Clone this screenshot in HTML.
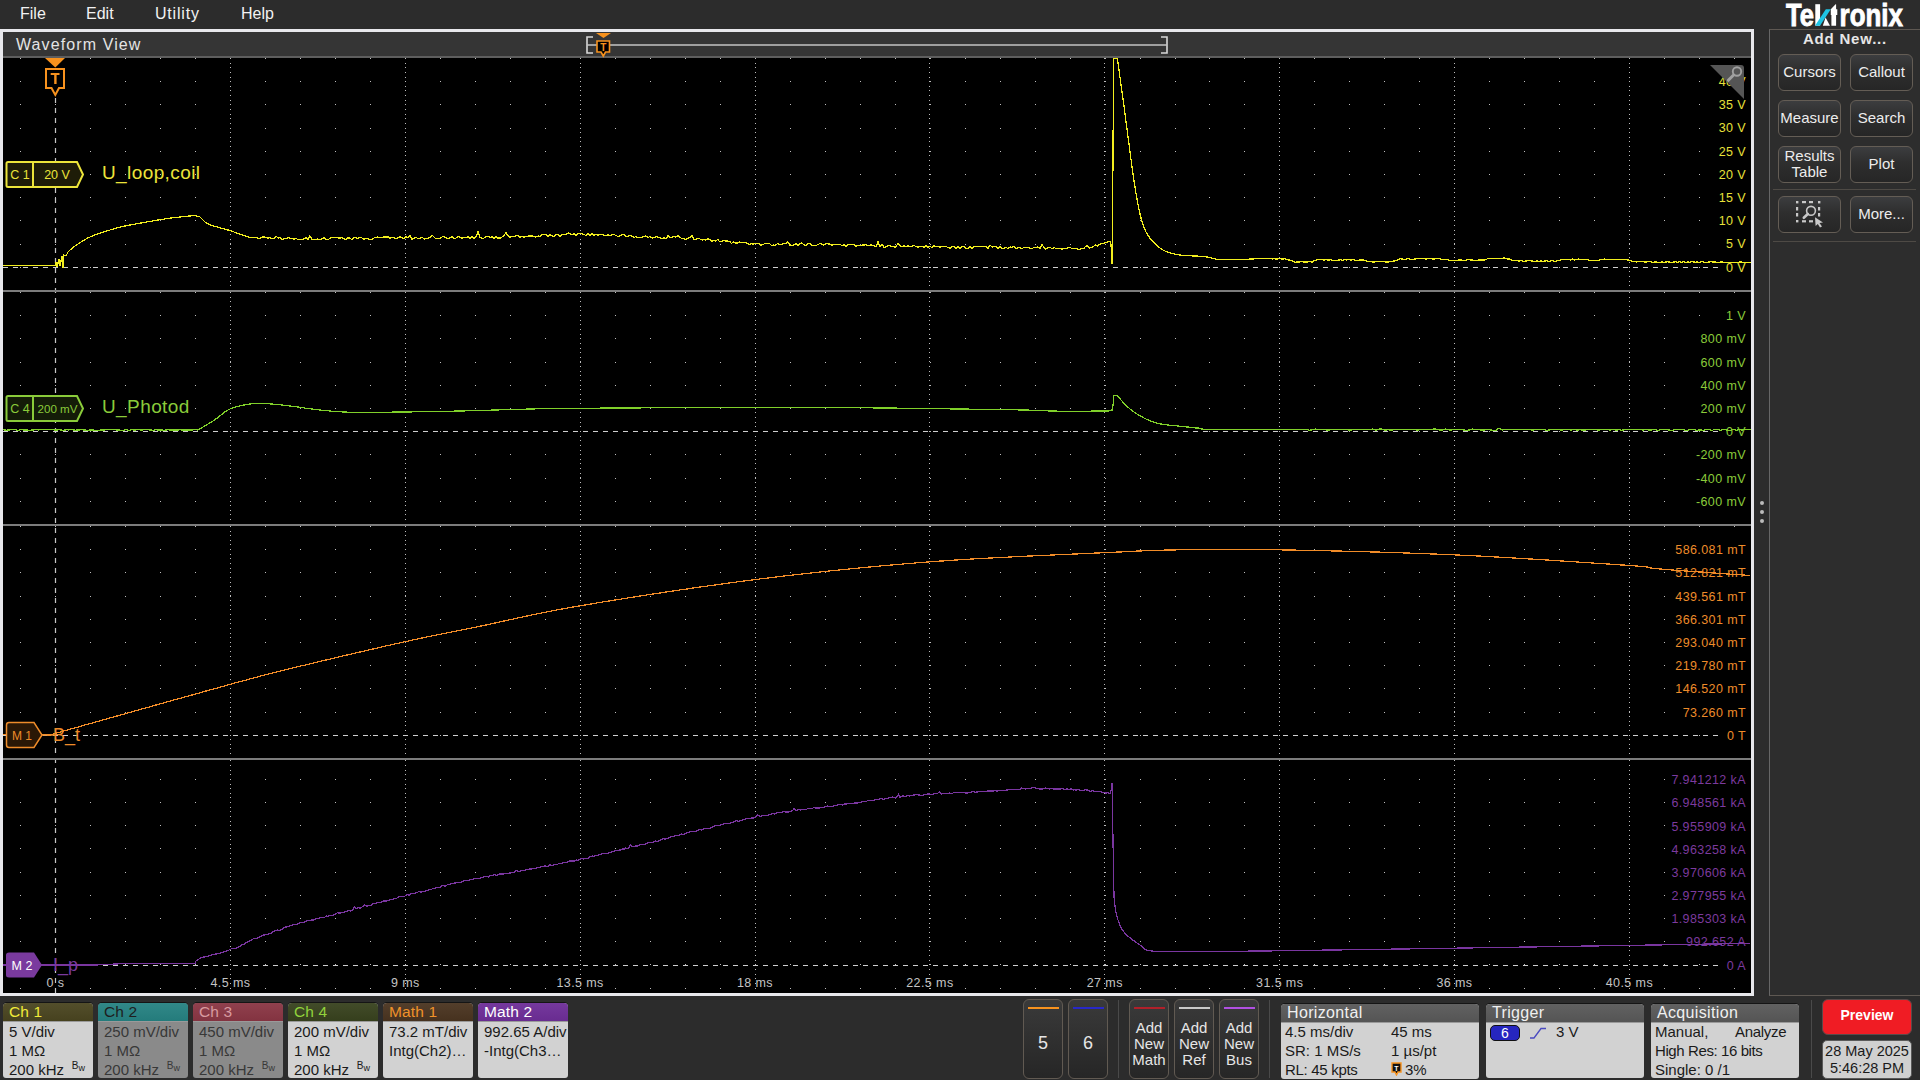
<!DOCTYPE html>
<html><head><meta charset="utf-8"><style>
*{margin:0;padding:0;box-sizing:border-box}
body{width:1920px;height:1080px;background:#2c2c2c;position:relative;overflow:hidden;font-family:"Liberation Sans",sans-serif;}
.abs{position:absolute}
.menu{position:absolute;top:5px;font-size:16px;color:#f2f2f2;line-height:18px}
.btn{position:absolute;border:1px solid #645d55;border-radius:6px;background:linear-gradient(#3c3d3f 0%,#2e2e2e 45%,#262626 100%);color:#ececec;display:flex;align-items:center;justify-content:center;text-align:center;line-height:16px;padding-bottom:2px}
.badge{position:absolute;border-radius:4px 4px 3px 3px;overflow:hidden;color:#1a1a1a;box-shadow:0 -1px 0 #151515}
.bh{position:absolute;left:0;top:0;right:0;height:19px;font-size:15.5px;line-height:18px;letter-spacing:0.15px;background-image:linear-gradient(rgba(255,255,255,0.05),rgba(0,0,0,0.05));padding-left:6px;border-bottom:1px solid #9a9a9a}
.bl{position:absolute;left:6px;font-size:15px;line-height:19px;white-space:nowrap}
.bw{position:absolute;right:8px;top:58px;font-size:10px;line-height:10px}
.bw sub{font-size:9px;vertical-align:-2px}
.sq{position:absolute;border:1px solid #615a52;border-radius:6px;background:linear-gradient(#3a3a3a,#262626)}
</style></head><body>
<div class="menu" style="left:20px">File</div>
<div class="menu" style="left:86px">Edit</div>
<div class="menu" style="left:155px;letter-spacing:0.8px">Utility</div>
<div class="menu" style="left:241px">Help</div>
<!-- waveform view frame -->
<div class="abs" style="left:0;top:29px;width:1754px;height:967px;background:#e8e8ec"></div>
<div class="abs" style="left:3px;top:32px;width:1748px;height:24px;background:#353535"></div>
<div class="abs" style="left:3px;top:56px;width:1748px;height:2px;background:#5e5e5e"></div>
<div class="abs" style="left:16px;top:36px;font-size:16px;color:#e4e4e4;line-height:18px;letter-spacing:1.1px">Waveform View</div>
<svg class="abs" style="left:0;top:0" width="1920" height="60">
<path d="M593 37H587V53H593" fill="none" stroke="#d8d8d8" stroke-width="1.6"/>
<path d="M1161 37H1167V53H1161" fill="none" stroke="#d8d8d8" stroke-width="1.6"/>
<path d="M587 45H1167" stroke="#c4c4c4" stroke-width="1.5"/>
<path d="M596 33H611L603.5 38Z" fill="#f7921e"/>
<path d="M597 41H609.5V52H605.5L603.3 56L601 52H597Z" fill="#000" stroke="#f7921e" stroke-width="1.6"/>
<text x="603.3" y="50.5" font-family="Liberation Sans" font-weight="bold" font-size="10" fill="#f7921e" text-anchor="middle">T</text>
</svg>
<svg width="1920" height="1080" style="position:absolute;left:0;top:0">
<defs><clipPath id="gc"><rect x="3" y="58" width="1748" height="935"/></clipPath></defs>
<g clip-path="url(#gc)">
<rect x="3" y="58" width="1748" height="935" fill="#000"/>
<path fill="#bdbdbd" d="M20 58h1v1h-1zM55 58h1v1h-1zM90 58h1v1h-1zM125 58h1v1h-1zM160 58h1v1h-1zM195 58h1v1h-1zM230 58h1v1h-1zM265 58h1v1h-1zM300 58h1v1h-1zM335 58h1v1h-1zM370 58h1v1h-1zM405 58h1v1h-1zM440 58h1v1h-1zM475 58h1v1h-1zM510 58h1v1h-1zM545 58h1v1h-1zM580 58h1v1h-1zM615 58h1v1h-1zM650 58h1v1h-1zM685 58h1v1h-1zM720 58h1v1h-1zM755 58h1v1h-1zM790 58h1v1h-1zM825 58h1v1h-1zM860 58h1v1h-1zM895 58h1v1h-1zM930 58h1v1h-1zM965 58h1v1h-1zM1000 58h1v1h-1zM1035 58h1v1h-1zM1070 58h1v1h-1zM1105 58h1v1h-1zM1140 58h1v1h-1zM1175 58h1v1h-1zM1209 58h1v1h-1zM1244 58h1v1h-1zM1279 58h1v1h-1zM1314 58h1v1h-1zM1349 58h1v1h-1zM1384 58h1v1h-1zM1419 58h1v1h-1zM1454 58h1v1h-1zM1489 58h1v1h-1zM1524 58h1v1h-1zM1559 58h1v1h-1zM1594 58h1v1h-1zM1629 58h1v1h-1zM1664 58h1v1h-1zM1699 58h1v1h-1zM1734 58h1v1h-1zM20 81h1v1h-1zM55 81h1v1h-1zM90 81h1v1h-1zM125 81h1v1h-1zM160 81h1v1h-1zM195 81h1v1h-1zM230 81h1v1h-1zM265 81h1v1h-1zM300 81h1v1h-1zM335 81h1v1h-1zM370 81h1v1h-1zM405 81h1v1h-1zM440 81h1v1h-1zM475 81h1v1h-1zM510 81h1v1h-1zM545 81h1v1h-1zM580 81h1v1h-1zM615 81h1v1h-1zM650 81h1v1h-1zM685 81h1v1h-1zM720 81h1v1h-1zM755 81h1v1h-1zM790 81h1v1h-1zM825 81h1v1h-1zM860 81h1v1h-1zM895 81h1v1h-1zM930 81h1v1h-1zM965 81h1v1h-1zM1000 81h1v1h-1zM1035 81h1v1h-1zM1070 81h1v1h-1zM1105 81h1v1h-1zM1140 81h1v1h-1zM1175 81h1v1h-1zM1209 81h1v1h-1zM1244 81h1v1h-1zM1279 81h1v1h-1zM1314 81h1v1h-1zM1349 81h1v1h-1zM1384 81h1v1h-1zM1419 81h1v1h-1zM1454 81h1v1h-1zM1489 81h1v1h-1zM1524 81h1v1h-1zM1559 81h1v1h-1zM1594 81h1v1h-1zM1629 81h1v1h-1zM1664 81h1v1h-1zM1699 81h1v1h-1zM1734 81h1v1h-1zM20 104h1v1h-1zM55 104h1v1h-1zM90 104h1v1h-1zM125 104h1v1h-1zM160 104h1v1h-1zM195 104h1v1h-1zM230 104h1v1h-1zM265 104h1v1h-1zM300 104h1v1h-1zM335 104h1v1h-1zM370 104h1v1h-1zM405 104h1v1h-1zM440 104h1v1h-1zM475 104h1v1h-1zM510 104h1v1h-1zM545 104h1v1h-1zM580 104h1v1h-1zM615 104h1v1h-1zM650 104h1v1h-1zM685 104h1v1h-1zM720 104h1v1h-1zM755 104h1v1h-1zM790 104h1v1h-1zM825 104h1v1h-1zM860 104h1v1h-1zM895 104h1v1h-1zM930 104h1v1h-1zM965 104h1v1h-1zM1000 104h1v1h-1zM1035 104h1v1h-1zM1070 104h1v1h-1zM1105 104h1v1h-1zM1140 104h1v1h-1zM1175 104h1v1h-1zM1209 104h1v1h-1zM1244 104h1v1h-1zM1279 104h1v1h-1zM1314 104h1v1h-1zM1349 104h1v1h-1zM1384 104h1v1h-1zM1419 104h1v1h-1zM1454 104h1v1h-1zM1489 104h1v1h-1zM1524 104h1v1h-1zM1559 104h1v1h-1zM1594 104h1v1h-1zM1629 104h1v1h-1zM1664 104h1v1h-1zM1699 104h1v1h-1zM1734 104h1v1h-1zM20 128h1v1h-1zM55 128h1v1h-1zM90 128h1v1h-1zM125 128h1v1h-1zM160 128h1v1h-1zM195 128h1v1h-1zM230 128h1v1h-1zM265 128h1v1h-1zM300 128h1v1h-1zM335 128h1v1h-1zM370 128h1v1h-1zM405 128h1v1h-1zM440 128h1v1h-1zM475 128h1v1h-1zM510 128h1v1h-1zM545 128h1v1h-1zM580 128h1v1h-1zM615 128h1v1h-1zM650 128h1v1h-1zM685 128h1v1h-1zM720 128h1v1h-1zM755 128h1v1h-1zM790 128h1v1h-1zM825 128h1v1h-1zM860 128h1v1h-1zM895 128h1v1h-1zM930 128h1v1h-1zM965 128h1v1h-1zM1000 128h1v1h-1zM1035 128h1v1h-1zM1070 128h1v1h-1zM1105 128h1v1h-1zM1140 128h1v1h-1zM1175 128h1v1h-1zM1209 128h1v1h-1zM1244 128h1v1h-1zM1279 128h1v1h-1zM1314 128h1v1h-1zM1349 128h1v1h-1zM1384 128h1v1h-1zM1419 128h1v1h-1zM1454 128h1v1h-1zM1489 128h1v1h-1zM1524 128h1v1h-1zM1559 128h1v1h-1zM1594 128h1v1h-1zM1629 128h1v1h-1zM1664 128h1v1h-1zM1699 128h1v1h-1zM1734 128h1v1h-1zM20 151h1v1h-1zM55 151h1v1h-1zM90 151h1v1h-1zM125 151h1v1h-1zM160 151h1v1h-1zM195 151h1v1h-1zM230 151h1v1h-1zM265 151h1v1h-1zM300 151h1v1h-1zM335 151h1v1h-1zM370 151h1v1h-1zM405 151h1v1h-1zM440 151h1v1h-1zM475 151h1v1h-1zM510 151h1v1h-1zM545 151h1v1h-1zM580 151h1v1h-1zM615 151h1v1h-1zM650 151h1v1h-1zM685 151h1v1h-1zM720 151h1v1h-1zM755 151h1v1h-1zM790 151h1v1h-1zM825 151h1v1h-1zM860 151h1v1h-1zM895 151h1v1h-1zM930 151h1v1h-1zM965 151h1v1h-1zM1000 151h1v1h-1zM1035 151h1v1h-1zM1070 151h1v1h-1zM1105 151h1v1h-1zM1140 151h1v1h-1zM1175 151h1v1h-1zM1209 151h1v1h-1zM1244 151h1v1h-1zM1279 151h1v1h-1zM1314 151h1v1h-1zM1349 151h1v1h-1zM1384 151h1v1h-1zM1419 151h1v1h-1zM1454 151h1v1h-1zM1489 151h1v1h-1zM1524 151h1v1h-1zM1559 151h1v1h-1zM1594 151h1v1h-1zM1629 151h1v1h-1zM1664 151h1v1h-1zM1699 151h1v1h-1zM1734 151h1v1h-1zM20 174h1v1h-1zM55 174h1v1h-1zM90 174h1v1h-1zM125 174h1v1h-1zM160 174h1v1h-1zM195 174h1v1h-1zM230 174h1v1h-1zM265 174h1v1h-1zM300 174h1v1h-1zM335 174h1v1h-1zM370 174h1v1h-1zM405 174h1v1h-1zM440 174h1v1h-1zM475 174h1v1h-1zM510 174h1v1h-1zM545 174h1v1h-1zM580 174h1v1h-1zM615 174h1v1h-1zM650 174h1v1h-1zM685 174h1v1h-1zM720 174h1v1h-1zM755 174h1v1h-1zM790 174h1v1h-1zM825 174h1v1h-1zM860 174h1v1h-1zM895 174h1v1h-1zM930 174h1v1h-1zM965 174h1v1h-1zM1000 174h1v1h-1zM1035 174h1v1h-1zM1070 174h1v1h-1zM1105 174h1v1h-1zM1140 174h1v1h-1zM1175 174h1v1h-1zM1209 174h1v1h-1zM1244 174h1v1h-1zM1279 174h1v1h-1zM1314 174h1v1h-1zM1349 174h1v1h-1zM1384 174h1v1h-1zM1419 174h1v1h-1zM1454 174h1v1h-1zM1489 174h1v1h-1zM1524 174h1v1h-1zM1559 174h1v1h-1zM1594 174h1v1h-1zM1629 174h1v1h-1zM1664 174h1v1h-1zM1699 174h1v1h-1zM1734 174h1v1h-1zM20 197h1v1h-1zM55 197h1v1h-1zM90 197h1v1h-1zM125 197h1v1h-1zM160 197h1v1h-1zM195 197h1v1h-1zM230 197h1v1h-1zM265 197h1v1h-1zM300 197h1v1h-1zM335 197h1v1h-1zM370 197h1v1h-1zM405 197h1v1h-1zM440 197h1v1h-1zM475 197h1v1h-1zM510 197h1v1h-1zM545 197h1v1h-1zM580 197h1v1h-1zM615 197h1v1h-1zM650 197h1v1h-1zM685 197h1v1h-1zM720 197h1v1h-1zM755 197h1v1h-1zM790 197h1v1h-1zM825 197h1v1h-1zM860 197h1v1h-1zM895 197h1v1h-1zM930 197h1v1h-1zM965 197h1v1h-1zM1000 197h1v1h-1zM1035 197h1v1h-1zM1070 197h1v1h-1zM1105 197h1v1h-1zM1140 197h1v1h-1zM1175 197h1v1h-1zM1209 197h1v1h-1zM1244 197h1v1h-1zM1279 197h1v1h-1zM1314 197h1v1h-1zM1349 197h1v1h-1zM1384 197h1v1h-1zM1419 197h1v1h-1zM1454 197h1v1h-1zM1489 197h1v1h-1zM1524 197h1v1h-1zM1559 197h1v1h-1zM1594 197h1v1h-1zM1629 197h1v1h-1zM1664 197h1v1h-1zM1699 197h1v1h-1zM1734 197h1v1h-1zM20 220h1v1h-1zM55 220h1v1h-1zM90 220h1v1h-1zM125 220h1v1h-1zM160 220h1v1h-1zM195 220h1v1h-1zM230 220h1v1h-1zM265 220h1v1h-1zM300 220h1v1h-1zM335 220h1v1h-1zM370 220h1v1h-1zM405 220h1v1h-1zM440 220h1v1h-1zM475 220h1v1h-1zM510 220h1v1h-1zM545 220h1v1h-1zM580 220h1v1h-1zM615 220h1v1h-1zM650 220h1v1h-1zM685 220h1v1h-1zM720 220h1v1h-1zM755 220h1v1h-1zM790 220h1v1h-1zM825 220h1v1h-1zM860 220h1v1h-1zM895 220h1v1h-1zM930 220h1v1h-1zM965 220h1v1h-1zM1000 220h1v1h-1zM1035 220h1v1h-1zM1070 220h1v1h-1zM1105 220h1v1h-1zM1140 220h1v1h-1zM1175 220h1v1h-1zM1209 220h1v1h-1zM1244 220h1v1h-1zM1279 220h1v1h-1zM1314 220h1v1h-1zM1349 220h1v1h-1zM1384 220h1v1h-1zM1419 220h1v1h-1zM1454 220h1v1h-1zM1489 220h1v1h-1zM1524 220h1v1h-1zM1559 220h1v1h-1zM1594 220h1v1h-1zM1629 220h1v1h-1zM1664 220h1v1h-1zM1699 220h1v1h-1zM1734 220h1v1h-1zM20 244h1v1h-1zM55 244h1v1h-1zM90 244h1v1h-1zM125 244h1v1h-1zM160 244h1v1h-1zM195 244h1v1h-1zM230 244h1v1h-1zM265 244h1v1h-1zM300 244h1v1h-1zM335 244h1v1h-1zM370 244h1v1h-1zM405 244h1v1h-1zM440 244h1v1h-1zM475 244h1v1h-1zM510 244h1v1h-1zM545 244h1v1h-1zM580 244h1v1h-1zM615 244h1v1h-1zM650 244h1v1h-1zM685 244h1v1h-1zM720 244h1v1h-1zM755 244h1v1h-1zM790 244h1v1h-1zM825 244h1v1h-1zM860 244h1v1h-1zM895 244h1v1h-1zM930 244h1v1h-1zM965 244h1v1h-1zM1000 244h1v1h-1zM1035 244h1v1h-1zM1070 244h1v1h-1zM1105 244h1v1h-1zM1140 244h1v1h-1zM1175 244h1v1h-1zM1209 244h1v1h-1zM1244 244h1v1h-1zM1279 244h1v1h-1zM1314 244h1v1h-1zM1349 244h1v1h-1zM1384 244h1v1h-1zM1419 244h1v1h-1zM1454 244h1v1h-1zM1489 244h1v1h-1zM1524 244h1v1h-1zM1559 244h1v1h-1zM1594 244h1v1h-1zM1629 244h1v1h-1zM1664 244h1v1h-1zM1699 244h1v1h-1zM1734 244h1v1h-1zM20 267h1v1h-1zM55 267h1v1h-1zM90 267h1v1h-1zM125 267h1v1h-1zM160 267h1v1h-1zM195 267h1v1h-1zM230 267h1v1h-1zM265 267h1v1h-1zM300 267h1v1h-1zM335 267h1v1h-1zM370 267h1v1h-1zM405 267h1v1h-1zM440 267h1v1h-1zM475 267h1v1h-1zM510 267h1v1h-1zM545 267h1v1h-1zM580 267h1v1h-1zM615 267h1v1h-1zM650 267h1v1h-1zM685 267h1v1h-1zM720 267h1v1h-1zM755 267h1v1h-1zM790 267h1v1h-1zM825 267h1v1h-1zM860 267h1v1h-1zM895 267h1v1h-1zM930 267h1v1h-1zM965 267h1v1h-1zM1000 267h1v1h-1zM1035 267h1v1h-1zM1070 267h1v1h-1zM1105 267h1v1h-1zM1140 267h1v1h-1zM1175 267h1v1h-1zM1209 267h1v1h-1zM1244 267h1v1h-1zM1279 267h1v1h-1zM1314 267h1v1h-1zM1349 267h1v1h-1zM1384 267h1v1h-1zM1419 267h1v1h-1zM1454 267h1v1h-1zM1489 267h1v1h-1zM1524 267h1v1h-1zM1559 267h1v1h-1zM1594 267h1v1h-1zM1629 267h1v1h-1zM1664 267h1v1h-1zM1699 267h1v1h-1zM1734 267h1v1h-1zM20 292h1v1h-1zM55 292h1v1h-1zM90 292h1v1h-1zM125 292h1v1h-1zM160 292h1v1h-1zM195 292h1v1h-1zM230 292h1v1h-1zM265 292h1v1h-1zM300 292h1v1h-1zM335 292h1v1h-1zM370 292h1v1h-1zM405 292h1v1h-1zM440 292h1v1h-1zM475 292h1v1h-1zM510 292h1v1h-1zM545 292h1v1h-1zM580 292h1v1h-1zM615 292h1v1h-1zM650 292h1v1h-1zM685 292h1v1h-1zM720 292h1v1h-1zM755 292h1v1h-1zM790 292h1v1h-1zM825 292h1v1h-1zM860 292h1v1h-1zM895 292h1v1h-1zM930 292h1v1h-1zM965 292h1v1h-1zM1000 292h1v1h-1zM1035 292h1v1h-1zM1070 292h1v1h-1zM1105 292h1v1h-1zM1140 292h1v1h-1zM1175 292h1v1h-1zM1209 292h1v1h-1zM1244 292h1v1h-1zM1279 292h1v1h-1zM1314 292h1v1h-1zM1349 292h1v1h-1zM1384 292h1v1h-1zM1419 292h1v1h-1zM1454 292h1v1h-1zM1489 292h1v1h-1zM1524 292h1v1h-1zM1559 292h1v1h-1zM1594 292h1v1h-1zM1629 292h1v1h-1zM1664 292h1v1h-1zM1699 292h1v1h-1zM1734 292h1v1h-1zM20 315h1v1h-1zM55 315h1v1h-1zM90 315h1v1h-1zM125 315h1v1h-1zM160 315h1v1h-1zM195 315h1v1h-1zM230 315h1v1h-1zM265 315h1v1h-1zM300 315h1v1h-1zM335 315h1v1h-1zM370 315h1v1h-1zM405 315h1v1h-1zM440 315h1v1h-1zM475 315h1v1h-1zM510 315h1v1h-1zM545 315h1v1h-1zM580 315h1v1h-1zM615 315h1v1h-1zM650 315h1v1h-1zM685 315h1v1h-1zM720 315h1v1h-1zM755 315h1v1h-1zM790 315h1v1h-1zM825 315h1v1h-1zM860 315h1v1h-1zM895 315h1v1h-1zM930 315h1v1h-1zM965 315h1v1h-1zM1000 315h1v1h-1zM1035 315h1v1h-1zM1070 315h1v1h-1zM1105 315h1v1h-1zM1140 315h1v1h-1zM1175 315h1v1h-1zM1209 315h1v1h-1zM1244 315h1v1h-1zM1279 315h1v1h-1zM1314 315h1v1h-1zM1349 315h1v1h-1zM1384 315h1v1h-1zM1419 315h1v1h-1zM1454 315h1v1h-1zM1489 315h1v1h-1zM1524 315h1v1h-1zM1559 315h1v1h-1zM1594 315h1v1h-1zM1629 315h1v1h-1zM1664 315h1v1h-1zM1699 315h1v1h-1zM1734 315h1v1h-1zM20 338h1v1h-1zM55 338h1v1h-1zM90 338h1v1h-1zM125 338h1v1h-1zM160 338h1v1h-1zM195 338h1v1h-1zM230 338h1v1h-1zM265 338h1v1h-1zM300 338h1v1h-1zM335 338h1v1h-1zM370 338h1v1h-1zM405 338h1v1h-1zM440 338h1v1h-1zM475 338h1v1h-1zM510 338h1v1h-1zM545 338h1v1h-1zM580 338h1v1h-1zM615 338h1v1h-1zM650 338h1v1h-1zM685 338h1v1h-1zM720 338h1v1h-1zM755 338h1v1h-1zM790 338h1v1h-1zM825 338h1v1h-1zM860 338h1v1h-1zM895 338h1v1h-1zM930 338h1v1h-1zM965 338h1v1h-1zM1000 338h1v1h-1zM1035 338h1v1h-1zM1070 338h1v1h-1zM1105 338h1v1h-1zM1140 338h1v1h-1zM1175 338h1v1h-1zM1209 338h1v1h-1zM1244 338h1v1h-1zM1279 338h1v1h-1zM1314 338h1v1h-1zM1349 338h1v1h-1zM1384 338h1v1h-1zM1419 338h1v1h-1zM1454 338h1v1h-1zM1489 338h1v1h-1zM1524 338h1v1h-1zM1559 338h1v1h-1zM1594 338h1v1h-1zM1629 338h1v1h-1zM1664 338h1v1h-1zM1699 338h1v1h-1zM1734 338h1v1h-1zM20 362h1v1h-1zM55 362h1v1h-1zM90 362h1v1h-1zM125 362h1v1h-1zM160 362h1v1h-1zM195 362h1v1h-1zM230 362h1v1h-1zM265 362h1v1h-1zM300 362h1v1h-1zM335 362h1v1h-1zM370 362h1v1h-1zM405 362h1v1h-1zM440 362h1v1h-1zM475 362h1v1h-1zM510 362h1v1h-1zM545 362h1v1h-1zM580 362h1v1h-1zM615 362h1v1h-1zM650 362h1v1h-1zM685 362h1v1h-1zM720 362h1v1h-1zM755 362h1v1h-1zM790 362h1v1h-1zM825 362h1v1h-1zM860 362h1v1h-1zM895 362h1v1h-1zM930 362h1v1h-1zM965 362h1v1h-1zM1000 362h1v1h-1zM1035 362h1v1h-1zM1070 362h1v1h-1zM1105 362h1v1h-1zM1140 362h1v1h-1zM1175 362h1v1h-1zM1209 362h1v1h-1zM1244 362h1v1h-1zM1279 362h1v1h-1zM1314 362h1v1h-1zM1349 362h1v1h-1zM1384 362h1v1h-1zM1419 362h1v1h-1zM1454 362h1v1h-1zM1489 362h1v1h-1zM1524 362h1v1h-1zM1559 362h1v1h-1zM1594 362h1v1h-1zM1629 362h1v1h-1zM1664 362h1v1h-1zM1699 362h1v1h-1zM1734 362h1v1h-1zM20 385h1v1h-1zM55 385h1v1h-1zM90 385h1v1h-1zM125 385h1v1h-1zM160 385h1v1h-1zM195 385h1v1h-1zM230 385h1v1h-1zM265 385h1v1h-1zM300 385h1v1h-1zM335 385h1v1h-1zM370 385h1v1h-1zM405 385h1v1h-1zM440 385h1v1h-1zM475 385h1v1h-1zM510 385h1v1h-1zM545 385h1v1h-1zM580 385h1v1h-1zM615 385h1v1h-1zM650 385h1v1h-1zM685 385h1v1h-1zM720 385h1v1h-1zM755 385h1v1h-1zM790 385h1v1h-1zM825 385h1v1h-1zM860 385h1v1h-1zM895 385h1v1h-1zM930 385h1v1h-1zM965 385h1v1h-1zM1000 385h1v1h-1zM1035 385h1v1h-1zM1070 385h1v1h-1zM1105 385h1v1h-1zM1140 385h1v1h-1zM1175 385h1v1h-1zM1209 385h1v1h-1zM1244 385h1v1h-1zM1279 385h1v1h-1zM1314 385h1v1h-1zM1349 385h1v1h-1zM1384 385h1v1h-1zM1419 385h1v1h-1zM1454 385h1v1h-1zM1489 385h1v1h-1zM1524 385h1v1h-1zM1559 385h1v1h-1zM1594 385h1v1h-1zM1629 385h1v1h-1zM1664 385h1v1h-1zM1699 385h1v1h-1zM1734 385h1v1h-1zM20 408h1v1h-1zM55 408h1v1h-1zM90 408h1v1h-1zM125 408h1v1h-1zM160 408h1v1h-1zM195 408h1v1h-1zM230 408h1v1h-1zM265 408h1v1h-1zM300 408h1v1h-1zM335 408h1v1h-1zM370 408h1v1h-1zM405 408h1v1h-1zM440 408h1v1h-1zM475 408h1v1h-1zM510 408h1v1h-1zM545 408h1v1h-1zM580 408h1v1h-1zM615 408h1v1h-1zM650 408h1v1h-1zM685 408h1v1h-1zM720 408h1v1h-1zM755 408h1v1h-1zM790 408h1v1h-1zM825 408h1v1h-1zM860 408h1v1h-1zM895 408h1v1h-1zM930 408h1v1h-1zM965 408h1v1h-1zM1000 408h1v1h-1zM1035 408h1v1h-1zM1070 408h1v1h-1zM1105 408h1v1h-1zM1140 408h1v1h-1zM1175 408h1v1h-1zM1209 408h1v1h-1zM1244 408h1v1h-1zM1279 408h1v1h-1zM1314 408h1v1h-1zM1349 408h1v1h-1zM1384 408h1v1h-1zM1419 408h1v1h-1zM1454 408h1v1h-1zM1489 408h1v1h-1zM1524 408h1v1h-1zM1559 408h1v1h-1zM1594 408h1v1h-1zM1629 408h1v1h-1zM1664 408h1v1h-1zM1699 408h1v1h-1zM1734 408h1v1h-1zM20 431h1v1h-1zM55 431h1v1h-1zM90 431h1v1h-1zM125 431h1v1h-1zM160 431h1v1h-1zM195 431h1v1h-1zM230 431h1v1h-1zM265 431h1v1h-1zM300 431h1v1h-1zM335 431h1v1h-1zM370 431h1v1h-1zM405 431h1v1h-1zM440 431h1v1h-1zM475 431h1v1h-1zM510 431h1v1h-1zM545 431h1v1h-1zM580 431h1v1h-1zM615 431h1v1h-1zM650 431h1v1h-1zM685 431h1v1h-1zM720 431h1v1h-1zM755 431h1v1h-1zM790 431h1v1h-1zM825 431h1v1h-1zM860 431h1v1h-1zM895 431h1v1h-1zM930 431h1v1h-1zM965 431h1v1h-1zM1000 431h1v1h-1zM1035 431h1v1h-1zM1070 431h1v1h-1zM1105 431h1v1h-1zM1140 431h1v1h-1zM1175 431h1v1h-1zM1209 431h1v1h-1zM1244 431h1v1h-1zM1279 431h1v1h-1zM1314 431h1v1h-1zM1349 431h1v1h-1zM1384 431h1v1h-1zM1419 431h1v1h-1zM1454 431h1v1h-1zM1489 431h1v1h-1zM1524 431h1v1h-1zM1559 431h1v1h-1zM1594 431h1v1h-1zM1629 431h1v1h-1zM1664 431h1v1h-1zM1699 431h1v1h-1zM1734 431h1v1h-1zM20 454h1v1h-1zM55 454h1v1h-1zM90 454h1v1h-1zM125 454h1v1h-1zM160 454h1v1h-1zM195 454h1v1h-1zM230 454h1v1h-1zM265 454h1v1h-1zM300 454h1v1h-1zM335 454h1v1h-1zM370 454h1v1h-1zM405 454h1v1h-1zM440 454h1v1h-1zM475 454h1v1h-1zM510 454h1v1h-1zM545 454h1v1h-1zM580 454h1v1h-1zM615 454h1v1h-1zM650 454h1v1h-1zM685 454h1v1h-1zM720 454h1v1h-1zM755 454h1v1h-1zM790 454h1v1h-1zM825 454h1v1h-1zM860 454h1v1h-1zM895 454h1v1h-1zM930 454h1v1h-1zM965 454h1v1h-1zM1000 454h1v1h-1zM1035 454h1v1h-1zM1070 454h1v1h-1zM1105 454h1v1h-1zM1140 454h1v1h-1zM1175 454h1v1h-1zM1209 454h1v1h-1zM1244 454h1v1h-1zM1279 454h1v1h-1zM1314 454h1v1h-1zM1349 454h1v1h-1zM1384 454h1v1h-1zM1419 454h1v1h-1zM1454 454h1v1h-1zM1489 454h1v1h-1zM1524 454h1v1h-1zM1559 454h1v1h-1zM1594 454h1v1h-1zM1629 454h1v1h-1zM1664 454h1v1h-1zM1699 454h1v1h-1zM1734 454h1v1h-1zM20 478h1v1h-1zM55 478h1v1h-1zM90 478h1v1h-1zM125 478h1v1h-1zM160 478h1v1h-1zM195 478h1v1h-1zM230 478h1v1h-1zM265 478h1v1h-1zM300 478h1v1h-1zM335 478h1v1h-1zM370 478h1v1h-1zM405 478h1v1h-1zM440 478h1v1h-1zM475 478h1v1h-1zM510 478h1v1h-1zM545 478h1v1h-1zM580 478h1v1h-1zM615 478h1v1h-1zM650 478h1v1h-1zM685 478h1v1h-1zM720 478h1v1h-1zM755 478h1v1h-1zM790 478h1v1h-1zM825 478h1v1h-1zM860 478h1v1h-1zM895 478h1v1h-1zM930 478h1v1h-1zM965 478h1v1h-1zM1000 478h1v1h-1zM1035 478h1v1h-1zM1070 478h1v1h-1zM1105 478h1v1h-1zM1140 478h1v1h-1zM1175 478h1v1h-1zM1209 478h1v1h-1zM1244 478h1v1h-1zM1279 478h1v1h-1zM1314 478h1v1h-1zM1349 478h1v1h-1zM1384 478h1v1h-1zM1419 478h1v1h-1zM1454 478h1v1h-1zM1489 478h1v1h-1zM1524 478h1v1h-1zM1559 478h1v1h-1zM1594 478h1v1h-1zM1629 478h1v1h-1zM1664 478h1v1h-1zM1699 478h1v1h-1zM1734 478h1v1h-1zM20 501h1v1h-1zM55 501h1v1h-1zM90 501h1v1h-1zM125 501h1v1h-1zM160 501h1v1h-1zM195 501h1v1h-1zM230 501h1v1h-1zM265 501h1v1h-1zM300 501h1v1h-1zM335 501h1v1h-1zM370 501h1v1h-1zM405 501h1v1h-1zM440 501h1v1h-1zM475 501h1v1h-1zM510 501h1v1h-1zM545 501h1v1h-1zM580 501h1v1h-1zM615 501h1v1h-1zM650 501h1v1h-1zM685 501h1v1h-1zM720 501h1v1h-1zM755 501h1v1h-1zM790 501h1v1h-1zM825 501h1v1h-1zM860 501h1v1h-1zM895 501h1v1h-1zM930 501h1v1h-1zM965 501h1v1h-1zM1000 501h1v1h-1zM1035 501h1v1h-1zM1070 501h1v1h-1zM1105 501h1v1h-1zM1140 501h1v1h-1zM1175 501h1v1h-1zM1209 501h1v1h-1zM1244 501h1v1h-1zM1279 501h1v1h-1zM1314 501h1v1h-1zM1349 501h1v1h-1zM1384 501h1v1h-1zM1419 501h1v1h-1zM1454 501h1v1h-1zM1489 501h1v1h-1zM1524 501h1v1h-1zM1559 501h1v1h-1zM1594 501h1v1h-1zM1629 501h1v1h-1zM1664 501h1v1h-1zM1699 501h1v1h-1zM1734 501h1v1h-1zM20 526h1v1h-1zM55 526h1v1h-1zM90 526h1v1h-1zM125 526h1v1h-1zM160 526h1v1h-1zM195 526h1v1h-1zM230 526h1v1h-1zM265 526h1v1h-1zM300 526h1v1h-1zM335 526h1v1h-1zM370 526h1v1h-1zM405 526h1v1h-1zM440 526h1v1h-1zM475 526h1v1h-1zM510 526h1v1h-1zM545 526h1v1h-1zM580 526h1v1h-1zM615 526h1v1h-1zM650 526h1v1h-1zM685 526h1v1h-1zM720 526h1v1h-1zM755 526h1v1h-1zM790 526h1v1h-1zM825 526h1v1h-1zM860 526h1v1h-1zM895 526h1v1h-1zM930 526h1v1h-1zM965 526h1v1h-1zM1000 526h1v1h-1zM1035 526h1v1h-1zM1070 526h1v1h-1zM1105 526h1v1h-1zM1140 526h1v1h-1zM1175 526h1v1h-1zM1209 526h1v1h-1zM1244 526h1v1h-1zM1279 526h1v1h-1zM1314 526h1v1h-1zM1349 526h1v1h-1zM1384 526h1v1h-1zM1419 526h1v1h-1zM1454 526h1v1h-1zM1489 526h1v1h-1zM1524 526h1v1h-1zM1559 526h1v1h-1zM1594 526h1v1h-1zM1629 526h1v1h-1zM1664 526h1v1h-1zM1699 526h1v1h-1zM1734 526h1v1h-1zM20 549h1v1h-1zM55 549h1v1h-1zM90 549h1v1h-1zM125 549h1v1h-1zM160 549h1v1h-1zM195 549h1v1h-1zM230 549h1v1h-1zM265 549h1v1h-1zM300 549h1v1h-1zM335 549h1v1h-1zM370 549h1v1h-1zM405 549h1v1h-1zM440 549h1v1h-1zM475 549h1v1h-1zM510 549h1v1h-1zM545 549h1v1h-1zM580 549h1v1h-1zM615 549h1v1h-1zM650 549h1v1h-1zM685 549h1v1h-1zM720 549h1v1h-1zM755 549h1v1h-1zM790 549h1v1h-1zM825 549h1v1h-1zM860 549h1v1h-1zM895 549h1v1h-1zM930 549h1v1h-1zM965 549h1v1h-1zM1000 549h1v1h-1zM1035 549h1v1h-1zM1070 549h1v1h-1zM1105 549h1v1h-1zM1140 549h1v1h-1zM1175 549h1v1h-1zM1209 549h1v1h-1zM1244 549h1v1h-1zM1279 549h1v1h-1zM1314 549h1v1h-1zM1349 549h1v1h-1zM1384 549h1v1h-1zM1419 549h1v1h-1zM1454 549h1v1h-1zM1489 549h1v1h-1zM1524 549h1v1h-1zM1559 549h1v1h-1zM1594 549h1v1h-1zM1629 549h1v1h-1zM1664 549h1v1h-1zM1699 549h1v1h-1zM1734 549h1v1h-1zM20 572h1v1h-1zM55 572h1v1h-1zM90 572h1v1h-1zM125 572h1v1h-1zM160 572h1v1h-1zM195 572h1v1h-1zM230 572h1v1h-1zM265 572h1v1h-1zM300 572h1v1h-1zM335 572h1v1h-1zM370 572h1v1h-1zM405 572h1v1h-1zM440 572h1v1h-1zM475 572h1v1h-1zM510 572h1v1h-1zM545 572h1v1h-1zM580 572h1v1h-1zM615 572h1v1h-1zM650 572h1v1h-1zM685 572h1v1h-1zM720 572h1v1h-1zM755 572h1v1h-1zM790 572h1v1h-1zM825 572h1v1h-1zM860 572h1v1h-1zM895 572h1v1h-1zM930 572h1v1h-1zM965 572h1v1h-1zM1000 572h1v1h-1zM1035 572h1v1h-1zM1070 572h1v1h-1zM1105 572h1v1h-1zM1140 572h1v1h-1zM1175 572h1v1h-1zM1209 572h1v1h-1zM1244 572h1v1h-1zM1279 572h1v1h-1zM1314 572h1v1h-1zM1349 572h1v1h-1zM1384 572h1v1h-1zM1419 572h1v1h-1zM1454 572h1v1h-1zM1489 572h1v1h-1zM1524 572h1v1h-1zM1559 572h1v1h-1zM1594 572h1v1h-1zM1629 572h1v1h-1zM1664 572h1v1h-1zM1699 572h1v1h-1zM1734 572h1v1h-1zM20 596h1v1h-1zM55 596h1v1h-1zM90 596h1v1h-1zM125 596h1v1h-1zM160 596h1v1h-1zM195 596h1v1h-1zM230 596h1v1h-1zM265 596h1v1h-1zM300 596h1v1h-1zM335 596h1v1h-1zM370 596h1v1h-1zM405 596h1v1h-1zM440 596h1v1h-1zM475 596h1v1h-1zM510 596h1v1h-1zM545 596h1v1h-1zM580 596h1v1h-1zM615 596h1v1h-1zM650 596h1v1h-1zM685 596h1v1h-1zM720 596h1v1h-1zM755 596h1v1h-1zM790 596h1v1h-1zM825 596h1v1h-1zM860 596h1v1h-1zM895 596h1v1h-1zM930 596h1v1h-1zM965 596h1v1h-1zM1000 596h1v1h-1zM1035 596h1v1h-1zM1070 596h1v1h-1zM1105 596h1v1h-1zM1140 596h1v1h-1zM1175 596h1v1h-1zM1209 596h1v1h-1zM1244 596h1v1h-1zM1279 596h1v1h-1zM1314 596h1v1h-1zM1349 596h1v1h-1zM1384 596h1v1h-1zM1419 596h1v1h-1zM1454 596h1v1h-1zM1489 596h1v1h-1zM1524 596h1v1h-1zM1559 596h1v1h-1zM1594 596h1v1h-1zM1629 596h1v1h-1zM1664 596h1v1h-1zM1699 596h1v1h-1zM1734 596h1v1h-1zM20 619h1v1h-1zM55 619h1v1h-1zM90 619h1v1h-1zM125 619h1v1h-1zM160 619h1v1h-1zM195 619h1v1h-1zM230 619h1v1h-1zM265 619h1v1h-1zM300 619h1v1h-1zM335 619h1v1h-1zM370 619h1v1h-1zM405 619h1v1h-1zM440 619h1v1h-1zM475 619h1v1h-1zM510 619h1v1h-1zM545 619h1v1h-1zM580 619h1v1h-1zM615 619h1v1h-1zM650 619h1v1h-1zM685 619h1v1h-1zM720 619h1v1h-1zM755 619h1v1h-1zM790 619h1v1h-1zM825 619h1v1h-1zM860 619h1v1h-1zM895 619h1v1h-1zM930 619h1v1h-1zM965 619h1v1h-1zM1000 619h1v1h-1zM1035 619h1v1h-1zM1070 619h1v1h-1zM1105 619h1v1h-1zM1140 619h1v1h-1zM1175 619h1v1h-1zM1209 619h1v1h-1zM1244 619h1v1h-1zM1279 619h1v1h-1zM1314 619h1v1h-1zM1349 619h1v1h-1zM1384 619h1v1h-1zM1419 619h1v1h-1zM1454 619h1v1h-1zM1489 619h1v1h-1zM1524 619h1v1h-1zM1559 619h1v1h-1zM1594 619h1v1h-1zM1629 619h1v1h-1zM1664 619h1v1h-1zM1699 619h1v1h-1zM1734 619h1v1h-1zM20 642h1v1h-1zM55 642h1v1h-1zM90 642h1v1h-1zM125 642h1v1h-1zM160 642h1v1h-1zM195 642h1v1h-1zM230 642h1v1h-1zM265 642h1v1h-1zM300 642h1v1h-1zM335 642h1v1h-1zM370 642h1v1h-1zM405 642h1v1h-1zM440 642h1v1h-1zM475 642h1v1h-1zM510 642h1v1h-1zM545 642h1v1h-1zM580 642h1v1h-1zM615 642h1v1h-1zM650 642h1v1h-1zM685 642h1v1h-1zM720 642h1v1h-1zM755 642h1v1h-1zM790 642h1v1h-1zM825 642h1v1h-1zM860 642h1v1h-1zM895 642h1v1h-1zM930 642h1v1h-1zM965 642h1v1h-1zM1000 642h1v1h-1zM1035 642h1v1h-1zM1070 642h1v1h-1zM1105 642h1v1h-1zM1140 642h1v1h-1zM1175 642h1v1h-1zM1209 642h1v1h-1zM1244 642h1v1h-1zM1279 642h1v1h-1zM1314 642h1v1h-1zM1349 642h1v1h-1zM1384 642h1v1h-1zM1419 642h1v1h-1zM1454 642h1v1h-1zM1489 642h1v1h-1zM1524 642h1v1h-1zM1559 642h1v1h-1zM1594 642h1v1h-1zM1629 642h1v1h-1zM1664 642h1v1h-1zM1699 642h1v1h-1zM1734 642h1v1h-1zM20 665h1v1h-1zM55 665h1v1h-1zM90 665h1v1h-1zM125 665h1v1h-1zM160 665h1v1h-1zM195 665h1v1h-1zM230 665h1v1h-1zM265 665h1v1h-1zM300 665h1v1h-1zM335 665h1v1h-1zM370 665h1v1h-1zM405 665h1v1h-1zM440 665h1v1h-1zM475 665h1v1h-1zM510 665h1v1h-1zM545 665h1v1h-1zM580 665h1v1h-1zM615 665h1v1h-1zM650 665h1v1h-1zM685 665h1v1h-1zM720 665h1v1h-1zM755 665h1v1h-1zM790 665h1v1h-1zM825 665h1v1h-1zM860 665h1v1h-1zM895 665h1v1h-1zM930 665h1v1h-1zM965 665h1v1h-1zM1000 665h1v1h-1zM1035 665h1v1h-1zM1070 665h1v1h-1zM1105 665h1v1h-1zM1140 665h1v1h-1zM1175 665h1v1h-1zM1209 665h1v1h-1zM1244 665h1v1h-1zM1279 665h1v1h-1zM1314 665h1v1h-1zM1349 665h1v1h-1zM1384 665h1v1h-1zM1419 665h1v1h-1zM1454 665h1v1h-1zM1489 665h1v1h-1zM1524 665h1v1h-1zM1559 665h1v1h-1zM1594 665h1v1h-1zM1629 665h1v1h-1zM1664 665h1v1h-1zM1699 665h1v1h-1zM1734 665h1v1h-1zM20 688h1v1h-1zM55 688h1v1h-1zM90 688h1v1h-1zM125 688h1v1h-1zM160 688h1v1h-1zM195 688h1v1h-1zM230 688h1v1h-1zM265 688h1v1h-1zM300 688h1v1h-1zM335 688h1v1h-1zM370 688h1v1h-1zM405 688h1v1h-1zM440 688h1v1h-1zM475 688h1v1h-1zM510 688h1v1h-1zM545 688h1v1h-1zM580 688h1v1h-1zM615 688h1v1h-1zM650 688h1v1h-1zM685 688h1v1h-1zM720 688h1v1h-1zM755 688h1v1h-1zM790 688h1v1h-1zM825 688h1v1h-1zM860 688h1v1h-1zM895 688h1v1h-1zM930 688h1v1h-1zM965 688h1v1h-1zM1000 688h1v1h-1zM1035 688h1v1h-1zM1070 688h1v1h-1zM1105 688h1v1h-1zM1140 688h1v1h-1zM1175 688h1v1h-1zM1209 688h1v1h-1zM1244 688h1v1h-1zM1279 688h1v1h-1zM1314 688h1v1h-1zM1349 688h1v1h-1zM1384 688h1v1h-1zM1419 688h1v1h-1zM1454 688h1v1h-1zM1489 688h1v1h-1zM1524 688h1v1h-1zM1559 688h1v1h-1zM1594 688h1v1h-1zM1629 688h1v1h-1zM1664 688h1v1h-1zM1699 688h1v1h-1zM1734 688h1v1h-1zM20 712h1v1h-1zM55 712h1v1h-1zM90 712h1v1h-1zM125 712h1v1h-1zM160 712h1v1h-1zM195 712h1v1h-1zM230 712h1v1h-1zM265 712h1v1h-1zM300 712h1v1h-1zM335 712h1v1h-1zM370 712h1v1h-1zM405 712h1v1h-1zM440 712h1v1h-1zM475 712h1v1h-1zM510 712h1v1h-1zM545 712h1v1h-1zM580 712h1v1h-1zM615 712h1v1h-1zM650 712h1v1h-1zM685 712h1v1h-1zM720 712h1v1h-1zM755 712h1v1h-1zM790 712h1v1h-1zM825 712h1v1h-1zM860 712h1v1h-1zM895 712h1v1h-1zM930 712h1v1h-1zM965 712h1v1h-1zM1000 712h1v1h-1zM1035 712h1v1h-1zM1070 712h1v1h-1zM1105 712h1v1h-1zM1140 712h1v1h-1zM1175 712h1v1h-1zM1209 712h1v1h-1zM1244 712h1v1h-1zM1279 712h1v1h-1zM1314 712h1v1h-1zM1349 712h1v1h-1zM1384 712h1v1h-1zM1419 712h1v1h-1zM1454 712h1v1h-1zM1489 712h1v1h-1zM1524 712h1v1h-1zM1559 712h1v1h-1zM1594 712h1v1h-1zM1629 712h1v1h-1zM1664 712h1v1h-1zM1699 712h1v1h-1zM1734 712h1v1h-1zM20 735h1v1h-1zM55 735h1v1h-1zM90 735h1v1h-1zM125 735h1v1h-1zM160 735h1v1h-1zM195 735h1v1h-1zM230 735h1v1h-1zM265 735h1v1h-1zM300 735h1v1h-1zM335 735h1v1h-1zM370 735h1v1h-1zM405 735h1v1h-1zM440 735h1v1h-1zM475 735h1v1h-1zM510 735h1v1h-1zM545 735h1v1h-1zM580 735h1v1h-1zM615 735h1v1h-1zM650 735h1v1h-1zM685 735h1v1h-1zM720 735h1v1h-1zM755 735h1v1h-1zM790 735h1v1h-1zM825 735h1v1h-1zM860 735h1v1h-1zM895 735h1v1h-1zM930 735h1v1h-1zM965 735h1v1h-1zM1000 735h1v1h-1zM1035 735h1v1h-1zM1070 735h1v1h-1zM1105 735h1v1h-1zM1140 735h1v1h-1zM1175 735h1v1h-1zM1209 735h1v1h-1zM1244 735h1v1h-1zM1279 735h1v1h-1zM1314 735h1v1h-1zM1349 735h1v1h-1zM1384 735h1v1h-1zM1419 735h1v1h-1zM1454 735h1v1h-1zM1489 735h1v1h-1zM1524 735h1v1h-1zM1559 735h1v1h-1zM1594 735h1v1h-1zM1629 735h1v1h-1zM1664 735h1v1h-1zM1699 735h1v1h-1zM1734 735h1v1h-1zM20 779h1v1h-1zM55 779h1v1h-1zM90 779h1v1h-1zM125 779h1v1h-1zM160 779h1v1h-1zM195 779h1v1h-1zM230 779h1v1h-1zM265 779h1v1h-1zM300 779h1v1h-1zM335 779h1v1h-1zM370 779h1v1h-1zM405 779h1v1h-1zM440 779h1v1h-1zM475 779h1v1h-1zM510 779h1v1h-1zM545 779h1v1h-1zM580 779h1v1h-1zM615 779h1v1h-1zM650 779h1v1h-1zM685 779h1v1h-1zM720 779h1v1h-1zM755 779h1v1h-1zM790 779h1v1h-1zM825 779h1v1h-1zM860 779h1v1h-1zM895 779h1v1h-1zM930 779h1v1h-1zM965 779h1v1h-1zM1000 779h1v1h-1zM1035 779h1v1h-1zM1070 779h1v1h-1zM1105 779h1v1h-1zM1140 779h1v1h-1zM1175 779h1v1h-1zM1209 779h1v1h-1zM1244 779h1v1h-1zM1279 779h1v1h-1zM1314 779h1v1h-1zM1349 779h1v1h-1zM1384 779h1v1h-1zM1419 779h1v1h-1zM1454 779h1v1h-1zM1489 779h1v1h-1zM1524 779h1v1h-1zM1559 779h1v1h-1zM1594 779h1v1h-1zM1629 779h1v1h-1zM1664 779h1v1h-1zM1699 779h1v1h-1zM1734 779h1v1h-1zM20 802h1v1h-1zM55 802h1v1h-1zM90 802h1v1h-1zM125 802h1v1h-1zM160 802h1v1h-1zM195 802h1v1h-1zM230 802h1v1h-1zM265 802h1v1h-1zM300 802h1v1h-1zM335 802h1v1h-1zM370 802h1v1h-1zM405 802h1v1h-1zM440 802h1v1h-1zM475 802h1v1h-1zM510 802h1v1h-1zM545 802h1v1h-1zM580 802h1v1h-1zM615 802h1v1h-1zM650 802h1v1h-1zM685 802h1v1h-1zM720 802h1v1h-1zM755 802h1v1h-1zM790 802h1v1h-1zM825 802h1v1h-1zM860 802h1v1h-1zM895 802h1v1h-1zM930 802h1v1h-1zM965 802h1v1h-1zM1000 802h1v1h-1zM1035 802h1v1h-1zM1070 802h1v1h-1zM1105 802h1v1h-1zM1140 802h1v1h-1zM1175 802h1v1h-1zM1209 802h1v1h-1zM1244 802h1v1h-1zM1279 802h1v1h-1zM1314 802h1v1h-1zM1349 802h1v1h-1zM1384 802h1v1h-1zM1419 802h1v1h-1zM1454 802h1v1h-1zM1489 802h1v1h-1zM1524 802h1v1h-1zM1559 802h1v1h-1zM1594 802h1v1h-1zM1629 802h1v1h-1zM1664 802h1v1h-1zM1699 802h1v1h-1zM1734 802h1v1h-1zM20 825h1v1h-1zM55 825h1v1h-1zM90 825h1v1h-1zM125 825h1v1h-1zM160 825h1v1h-1zM195 825h1v1h-1zM230 825h1v1h-1zM265 825h1v1h-1zM300 825h1v1h-1zM335 825h1v1h-1zM370 825h1v1h-1zM405 825h1v1h-1zM440 825h1v1h-1zM475 825h1v1h-1zM510 825h1v1h-1zM545 825h1v1h-1zM580 825h1v1h-1zM615 825h1v1h-1zM650 825h1v1h-1zM685 825h1v1h-1zM720 825h1v1h-1zM755 825h1v1h-1zM790 825h1v1h-1zM825 825h1v1h-1zM860 825h1v1h-1zM895 825h1v1h-1zM930 825h1v1h-1zM965 825h1v1h-1zM1000 825h1v1h-1zM1035 825h1v1h-1zM1070 825h1v1h-1zM1105 825h1v1h-1zM1140 825h1v1h-1zM1175 825h1v1h-1zM1209 825h1v1h-1zM1244 825h1v1h-1zM1279 825h1v1h-1zM1314 825h1v1h-1zM1349 825h1v1h-1zM1384 825h1v1h-1zM1419 825h1v1h-1zM1454 825h1v1h-1zM1489 825h1v1h-1zM1524 825h1v1h-1zM1559 825h1v1h-1zM1594 825h1v1h-1zM1629 825h1v1h-1zM1664 825h1v1h-1zM1699 825h1v1h-1zM1734 825h1v1h-1zM20 848h1v1h-1zM55 848h1v1h-1zM90 848h1v1h-1zM125 848h1v1h-1zM160 848h1v1h-1zM195 848h1v1h-1zM230 848h1v1h-1zM265 848h1v1h-1zM300 848h1v1h-1zM335 848h1v1h-1zM370 848h1v1h-1zM405 848h1v1h-1zM440 848h1v1h-1zM475 848h1v1h-1zM510 848h1v1h-1zM545 848h1v1h-1zM580 848h1v1h-1zM615 848h1v1h-1zM650 848h1v1h-1zM685 848h1v1h-1zM720 848h1v1h-1zM755 848h1v1h-1zM790 848h1v1h-1zM825 848h1v1h-1zM860 848h1v1h-1zM895 848h1v1h-1zM930 848h1v1h-1zM965 848h1v1h-1zM1000 848h1v1h-1zM1035 848h1v1h-1zM1070 848h1v1h-1zM1105 848h1v1h-1zM1140 848h1v1h-1zM1175 848h1v1h-1zM1209 848h1v1h-1zM1244 848h1v1h-1zM1279 848h1v1h-1zM1314 848h1v1h-1zM1349 848h1v1h-1zM1384 848h1v1h-1zM1419 848h1v1h-1zM1454 848h1v1h-1zM1489 848h1v1h-1zM1524 848h1v1h-1zM1559 848h1v1h-1zM1594 848h1v1h-1zM1629 848h1v1h-1zM1664 848h1v1h-1zM1699 848h1v1h-1zM1734 848h1v1h-1zM20 872h1v1h-1zM55 872h1v1h-1zM90 872h1v1h-1zM125 872h1v1h-1zM160 872h1v1h-1zM195 872h1v1h-1zM230 872h1v1h-1zM265 872h1v1h-1zM300 872h1v1h-1zM335 872h1v1h-1zM370 872h1v1h-1zM405 872h1v1h-1zM440 872h1v1h-1zM475 872h1v1h-1zM510 872h1v1h-1zM545 872h1v1h-1zM580 872h1v1h-1zM615 872h1v1h-1zM650 872h1v1h-1zM685 872h1v1h-1zM720 872h1v1h-1zM755 872h1v1h-1zM790 872h1v1h-1zM825 872h1v1h-1zM860 872h1v1h-1zM895 872h1v1h-1zM930 872h1v1h-1zM965 872h1v1h-1zM1000 872h1v1h-1zM1035 872h1v1h-1zM1070 872h1v1h-1zM1105 872h1v1h-1zM1140 872h1v1h-1zM1175 872h1v1h-1zM1209 872h1v1h-1zM1244 872h1v1h-1zM1279 872h1v1h-1zM1314 872h1v1h-1zM1349 872h1v1h-1zM1384 872h1v1h-1zM1419 872h1v1h-1zM1454 872h1v1h-1zM1489 872h1v1h-1zM1524 872h1v1h-1zM1559 872h1v1h-1zM1594 872h1v1h-1zM1629 872h1v1h-1zM1664 872h1v1h-1zM1699 872h1v1h-1zM1734 872h1v1h-1zM20 895h1v1h-1zM55 895h1v1h-1zM90 895h1v1h-1zM125 895h1v1h-1zM160 895h1v1h-1zM195 895h1v1h-1zM230 895h1v1h-1zM265 895h1v1h-1zM300 895h1v1h-1zM335 895h1v1h-1zM370 895h1v1h-1zM405 895h1v1h-1zM440 895h1v1h-1zM475 895h1v1h-1zM510 895h1v1h-1zM545 895h1v1h-1zM580 895h1v1h-1zM615 895h1v1h-1zM650 895h1v1h-1zM685 895h1v1h-1zM720 895h1v1h-1zM755 895h1v1h-1zM790 895h1v1h-1zM825 895h1v1h-1zM860 895h1v1h-1zM895 895h1v1h-1zM930 895h1v1h-1zM965 895h1v1h-1zM1000 895h1v1h-1zM1035 895h1v1h-1zM1070 895h1v1h-1zM1105 895h1v1h-1zM1140 895h1v1h-1zM1175 895h1v1h-1zM1209 895h1v1h-1zM1244 895h1v1h-1zM1279 895h1v1h-1zM1314 895h1v1h-1zM1349 895h1v1h-1zM1384 895h1v1h-1zM1419 895h1v1h-1zM1454 895h1v1h-1zM1489 895h1v1h-1zM1524 895h1v1h-1zM1559 895h1v1h-1zM1594 895h1v1h-1zM1629 895h1v1h-1zM1664 895h1v1h-1zM1699 895h1v1h-1zM1734 895h1v1h-1zM20 918h1v1h-1zM55 918h1v1h-1zM90 918h1v1h-1zM125 918h1v1h-1zM160 918h1v1h-1zM195 918h1v1h-1zM230 918h1v1h-1zM265 918h1v1h-1zM300 918h1v1h-1zM335 918h1v1h-1zM370 918h1v1h-1zM405 918h1v1h-1zM440 918h1v1h-1zM475 918h1v1h-1zM510 918h1v1h-1zM545 918h1v1h-1zM580 918h1v1h-1zM615 918h1v1h-1zM650 918h1v1h-1zM685 918h1v1h-1zM720 918h1v1h-1zM755 918h1v1h-1zM790 918h1v1h-1zM825 918h1v1h-1zM860 918h1v1h-1zM895 918h1v1h-1zM930 918h1v1h-1zM965 918h1v1h-1zM1000 918h1v1h-1zM1035 918h1v1h-1zM1070 918h1v1h-1zM1105 918h1v1h-1zM1140 918h1v1h-1zM1175 918h1v1h-1zM1209 918h1v1h-1zM1244 918h1v1h-1zM1279 918h1v1h-1zM1314 918h1v1h-1zM1349 918h1v1h-1zM1384 918h1v1h-1zM1419 918h1v1h-1zM1454 918h1v1h-1zM1489 918h1v1h-1zM1524 918h1v1h-1zM1559 918h1v1h-1zM1594 918h1v1h-1zM1629 918h1v1h-1zM1664 918h1v1h-1zM1699 918h1v1h-1zM1734 918h1v1h-1zM20 941h1v1h-1zM55 941h1v1h-1zM90 941h1v1h-1zM125 941h1v1h-1zM160 941h1v1h-1zM195 941h1v1h-1zM230 941h1v1h-1zM265 941h1v1h-1zM300 941h1v1h-1zM335 941h1v1h-1zM370 941h1v1h-1zM405 941h1v1h-1zM440 941h1v1h-1zM475 941h1v1h-1zM510 941h1v1h-1zM545 941h1v1h-1zM580 941h1v1h-1zM615 941h1v1h-1zM650 941h1v1h-1zM685 941h1v1h-1zM720 941h1v1h-1zM755 941h1v1h-1zM790 941h1v1h-1zM825 941h1v1h-1zM860 941h1v1h-1zM895 941h1v1h-1zM930 941h1v1h-1zM965 941h1v1h-1zM1000 941h1v1h-1zM1035 941h1v1h-1zM1070 941h1v1h-1zM1105 941h1v1h-1zM1140 941h1v1h-1zM1175 941h1v1h-1zM1209 941h1v1h-1zM1244 941h1v1h-1zM1279 941h1v1h-1zM1314 941h1v1h-1zM1349 941h1v1h-1zM1384 941h1v1h-1zM1419 941h1v1h-1zM1454 941h1v1h-1zM1489 941h1v1h-1zM1524 941h1v1h-1zM1559 941h1v1h-1zM1594 941h1v1h-1zM1629 941h1v1h-1zM1664 941h1v1h-1zM1699 941h1v1h-1zM1734 941h1v1h-1zM20 964h1v1h-1zM55 964h1v1h-1zM90 964h1v1h-1zM125 964h1v1h-1zM160 964h1v1h-1zM195 964h1v1h-1zM230 964h1v1h-1zM265 964h1v1h-1zM300 964h1v1h-1zM335 964h1v1h-1zM370 964h1v1h-1zM405 964h1v1h-1zM440 964h1v1h-1zM475 964h1v1h-1zM510 964h1v1h-1zM545 964h1v1h-1zM580 964h1v1h-1zM615 964h1v1h-1zM650 964h1v1h-1zM685 964h1v1h-1zM720 964h1v1h-1zM755 964h1v1h-1zM790 964h1v1h-1zM825 964h1v1h-1zM860 964h1v1h-1zM895 964h1v1h-1zM930 964h1v1h-1zM965 964h1v1h-1zM1000 964h1v1h-1zM1035 964h1v1h-1zM1070 964h1v1h-1zM1105 964h1v1h-1zM1140 964h1v1h-1zM1175 964h1v1h-1zM1209 964h1v1h-1zM1244 964h1v1h-1zM1279 964h1v1h-1zM1314 964h1v1h-1zM1349 964h1v1h-1zM1384 964h1v1h-1zM1419 964h1v1h-1zM1454 964h1v1h-1zM1489 964h1v1h-1zM1524 964h1v1h-1zM1559 964h1v1h-1zM1594 964h1v1h-1zM1629 964h1v1h-1zM1664 964h1v1h-1zM1699 964h1v1h-1zM1734 964h1v1h-1zM20 988h1v1h-1zM55 988h1v1h-1zM90 988h1v1h-1zM125 988h1v1h-1zM160 988h1v1h-1zM195 988h1v1h-1zM230 988h1v1h-1zM265 988h1v1h-1zM300 988h1v1h-1zM335 988h1v1h-1zM370 988h1v1h-1zM405 988h1v1h-1zM440 988h1v1h-1zM475 988h1v1h-1zM510 988h1v1h-1zM545 988h1v1h-1zM580 988h1v1h-1zM615 988h1v1h-1zM650 988h1v1h-1zM685 988h1v1h-1zM720 988h1v1h-1zM755 988h1v1h-1zM790 988h1v1h-1zM825 988h1v1h-1zM860 988h1v1h-1zM895 988h1v1h-1zM930 988h1v1h-1zM965 988h1v1h-1zM1000 988h1v1h-1zM1035 988h1v1h-1zM1070 988h1v1h-1zM1105 988h1v1h-1zM1140 988h1v1h-1zM1175 988h1v1h-1zM1209 988h1v1h-1zM1244 988h1v1h-1zM1279 988h1v1h-1zM1314 988h1v1h-1zM1349 988h1v1h-1zM1384 988h1v1h-1zM1419 988h1v1h-1zM1454 988h1v1h-1zM1489 988h1v1h-1zM1524 988h1v1h-1zM1559 988h1v1h-1zM1594 988h1v1h-1zM1629 988h1v1h-1zM1664 988h1v1h-1zM1699 988h1v1h-1zM1734 988h1v1h-1z"/><path fill="#bdbdbd" d="M230 58h1v1h-1zM230 63h1v1h-1zM230 67h1v1h-1zM230 72h1v1h-1zM230 77h1v1h-1zM230 81h1v1h-1zM230 86h1v1h-1zM230 90h1v1h-1zM230 95h1v1h-1zM230 100h1v1h-1zM230 104h1v1h-1zM230 109h1v1h-1zM230 114h1v1h-1zM230 118h1v1h-1zM230 123h1v1h-1zM230 128h1v1h-1zM230 132h1v1h-1zM230 137h1v1h-1zM230 141h1v1h-1zM230 146h1v1h-1zM230 151h1v1h-1zM230 155h1v1h-1zM230 160h1v1h-1zM230 165h1v1h-1zM230 169h1v1h-1zM230 174h1v1h-1zM230 179h1v1h-1zM230 183h1v1h-1zM230 188h1v1h-1zM230 192h1v1h-1zM230 197h1v1h-1zM230 202h1v1h-1zM230 206h1v1h-1zM230 211h1v1h-1zM230 216h1v1h-1zM230 220h1v1h-1zM230 225h1v1h-1zM230 230h1v1h-1zM230 234h1v1h-1zM230 239h1v1h-1zM230 243h1v1h-1zM230 248h1v1h-1zM230 253h1v1h-1zM230 257h1v1h-1zM230 262h1v1h-1zM230 267h1v1h-1zM230 271h1v1h-1zM230 276h1v1h-1zM230 281h1v1h-1zM230 285h1v1h-1zM230 290h1v1h-1zM230 292h1v1h-1zM230 297h1v1h-1zM230 301h1v1h-1zM230 306h1v1h-1zM230 310h1v1h-1zM230 315h1v1h-1zM230 320h1v1h-1zM230 324h1v1h-1zM230 329h1v1h-1zM230 334h1v1h-1zM230 338h1v1h-1zM230 343h1v1h-1zM230 348h1v1h-1zM230 352h1v1h-1zM230 357h1v1h-1zM230 361h1v1h-1zM230 366h1v1h-1zM230 371h1v1h-1zM230 375h1v1h-1zM230 380h1v1h-1zM230 385h1v1h-1zM230 389h1v1h-1zM230 394h1v1h-1zM230 399h1v1h-1zM230 403h1v1h-1zM230 408h1v1h-1zM230 412h1v1h-1zM230 417h1v1h-1zM230 422h1v1h-1zM230 426h1v1h-1zM230 431h1v1h-1zM230 436h1v1h-1zM230 440h1v1h-1zM230 445h1v1h-1zM230 450h1v1h-1zM230 454h1v1h-1zM230 459h1v1h-1zM230 463h1v1h-1zM230 468h1v1h-1zM230 473h1v1h-1zM230 477h1v1h-1zM230 482h1v1h-1zM230 487h1v1h-1zM230 491h1v1h-1zM230 496h1v1h-1zM230 501h1v1h-1zM230 505h1v1h-1zM230 510h1v1h-1zM230 514h1v1h-1zM230 519h1v1h-1zM230 526h1v1h-1zM230 531h1v1h-1zM230 535h1v1h-1zM230 540h1v1h-1zM230 544h1v1h-1zM230 549h1v1h-1zM230 554h1v1h-1zM230 558h1v1h-1zM230 563h1v1h-1zM230 568h1v1h-1zM230 572h1v1h-1zM230 577h1v1h-1zM230 582h1v1h-1zM230 586h1v1h-1zM230 591h1v1h-1zM230 595h1v1h-1zM230 600h1v1h-1zM230 605h1v1h-1zM230 609h1v1h-1zM230 614h1v1h-1zM230 619h1v1h-1zM230 623h1v1h-1zM230 628h1v1h-1zM230 633h1v1h-1zM230 637h1v1h-1zM230 642h1v1h-1zM230 646h1v1h-1zM230 651h1v1h-1zM230 656h1v1h-1zM230 660h1v1h-1zM230 665h1v1h-1zM230 670h1v1h-1zM230 674h1v1h-1zM230 679h1v1h-1zM230 684h1v1h-1zM230 688h1v1h-1zM230 693h1v1h-1zM230 697h1v1h-1zM230 702h1v1h-1zM230 707h1v1h-1zM230 711h1v1h-1zM230 716h1v1h-1zM230 721h1v1h-1zM230 725h1v1h-1zM230 730h1v1h-1zM230 735h1v1h-1zM230 739h1v1h-1zM230 744h1v1h-1zM230 748h1v1h-1zM230 753h1v1h-1zM230 760h1v1h-1zM230 765h1v1h-1zM230 770h1v1h-1zM230 774h1v1h-1zM230 779h1v1h-1zM230 784h1v1h-1zM230 788h1v1h-1zM230 793h1v1h-1zM230 797h1v1h-1zM230 802h1v1h-1zM230 807h1v1h-1zM230 811h1v1h-1zM230 816h1v1h-1zM230 821h1v1h-1zM230 825h1v1h-1zM230 830h1v1h-1zM230 835h1v1h-1zM230 839h1v1h-1zM230 844h1v1h-1zM230 848h1v1h-1zM230 853h1v1h-1zM230 858h1v1h-1zM230 862h1v1h-1zM230 867h1v1h-1zM230 872h1v1h-1zM230 876h1v1h-1zM230 881h1v1h-1zM230 886h1v1h-1zM230 890h1v1h-1zM230 895h1v1h-1zM230 899h1v1h-1zM230 904h1v1h-1zM230 909h1v1h-1zM230 913h1v1h-1zM230 918h1v1h-1zM230 923h1v1h-1zM230 927h1v1h-1zM230 932h1v1h-1zM230 937h1v1h-1zM230 941h1v1h-1zM230 946h1v1h-1zM230 950h1v1h-1zM230 955h1v1h-1zM230 960h1v1h-1zM230 964h1v1h-1zM230 969h1v1h-1zM230 974h1v1h-1zM230 978h1v1h-1zM230 983h1v1h-1zM230 988h1v1h-1zM405 58h1v1h-1zM405 63h1v1h-1zM405 67h1v1h-1zM405 72h1v1h-1zM405 77h1v1h-1zM405 81h1v1h-1zM405 86h1v1h-1zM405 90h1v1h-1zM405 95h1v1h-1zM405 100h1v1h-1zM405 104h1v1h-1zM405 109h1v1h-1zM405 114h1v1h-1zM405 118h1v1h-1zM405 123h1v1h-1zM405 128h1v1h-1zM405 132h1v1h-1zM405 137h1v1h-1zM405 141h1v1h-1zM405 146h1v1h-1zM405 151h1v1h-1zM405 155h1v1h-1zM405 160h1v1h-1zM405 165h1v1h-1zM405 169h1v1h-1zM405 174h1v1h-1zM405 179h1v1h-1zM405 183h1v1h-1zM405 188h1v1h-1zM405 192h1v1h-1zM405 197h1v1h-1zM405 202h1v1h-1zM405 206h1v1h-1zM405 211h1v1h-1zM405 216h1v1h-1zM405 220h1v1h-1zM405 225h1v1h-1zM405 230h1v1h-1zM405 234h1v1h-1zM405 239h1v1h-1zM405 243h1v1h-1zM405 248h1v1h-1zM405 253h1v1h-1zM405 257h1v1h-1zM405 262h1v1h-1zM405 267h1v1h-1zM405 271h1v1h-1zM405 276h1v1h-1zM405 281h1v1h-1zM405 285h1v1h-1zM405 290h1v1h-1zM405 292h1v1h-1zM405 297h1v1h-1zM405 301h1v1h-1zM405 306h1v1h-1zM405 310h1v1h-1zM405 315h1v1h-1zM405 320h1v1h-1zM405 324h1v1h-1zM405 329h1v1h-1zM405 334h1v1h-1zM405 338h1v1h-1zM405 343h1v1h-1zM405 348h1v1h-1zM405 352h1v1h-1zM405 357h1v1h-1zM405 361h1v1h-1zM405 366h1v1h-1zM405 371h1v1h-1zM405 375h1v1h-1zM405 380h1v1h-1zM405 385h1v1h-1zM405 389h1v1h-1zM405 394h1v1h-1zM405 399h1v1h-1zM405 403h1v1h-1zM405 408h1v1h-1zM405 412h1v1h-1zM405 417h1v1h-1zM405 422h1v1h-1zM405 426h1v1h-1zM405 431h1v1h-1zM405 436h1v1h-1zM405 440h1v1h-1zM405 445h1v1h-1zM405 450h1v1h-1zM405 454h1v1h-1zM405 459h1v1h-1zM405 463h1v1h-1zM405 468h1v1h-1zM405 473h1v1h-1zM405 477h1v1h-1zM405 482h1v1h-1zM405 487h1v1h-1zM405 491h1v1h-1zM405 496h1v1h-1zM405 501h1v1h-1zM405 505h1v1h-1zM405 510h1v1h-1zM405 514h1v1h-1zM405 519h1v1h-1zM405 526h1v1h-1zM405 531h1v1h-1zM405 535h1v1h-1zM405 540h1v1h-1zM405 544h1v1h-1zM405 549h1v1h-1zM405 554h1v1h-1zM405 558h1v1h-1zM405 563h1v1h-1zM405 568h1v1h-1zM405 572h1v1h-1zM405 577h1v1h-1zM405 582h1v1h-1zM405 586h1v1h-1zM405 591h1v1h-1zM405 595h1v1h-1zM405 600h1v1h-1zM405 605h1v1h-1zM405 609h1v1h-1zM405 614h1v1h-1zM405 619h1v1h-1zM405 623h1v1h-1zM405 628h1v1h-1zM405 633h1v1h-1zM405 637h1v1h-1zM405 642h1v1h-1zM405 646h1v1h-1zM405 651h1v1h-1zM405 656h1v1h-1zM405 660h1v1h-1zM405 665h1v1h-1zM405 670h1v1h-1zM405 674h1v1h-1zM405 679h1v1h-1zM405 684h1v1h-1zM405 688h1v1h-1zM405 693h1v1h-1zM405 697h1v1h-1zM405 702h1v1h-1zM405 707h1v1h-1zM405 711h1v1h-1zM405 716h1v1h-1zM405 721h1v1h-1zM405 725h1v1h-1zM405 730h1v1h-1zM405 735h1v1h-1zM405 739h1v1h-1zM405 744h1v1h-1zM405 748h1v1h-1zM405 753h1v1h-1zM405 760h1v1h-1zM405 765h1v1h-1zM405 770h1v1h-1zM405 774h1v1h-1zM405 779h1v1h-1zM405 784h1v1h-1zM405 788h1v1h-1zM405 793h1v1h-1zM405 797h1v1h-1zM405 802h1v1h-1zM405 807h1v1h-1zM405 811h1v1h-1zM405 816h1v1h-1zM405 821h1v1h-1zM405 825h1v1h-1zM405 830h1v1h-1zM405 835h1v1h-1zM405 839h1v1h-1zM405 844h1v1h-1zM405 848h1v1h-1zM405 853h1v1h-1zM405 858h1v1h-1zM405 862h1v1h-1zM405 867h1v1h-1zM405 872h1v1h-1zM405 876h1v1h-1zM405 881h1v1h-1zM405 886h1v1h-1zM405 890h1v1h-1zM405 895h1v1h-1zM405 899h1v1h-1zM405 904h1v1h-1zM405 909h1v1h-1zM405 913h1v1h-1zM405 918h1v1h-1zM405 923h1v1h-1zM405 927h1v1h-1zM405 932h1v1h-1zM405 937h1v1h-1zM405 941h1v1h-1zM405 946h1v1h-1zM405 950h1v1h-1zM405 955h1v1h-1zM405 960h1v1h-1zM405 964h1v1h-1zM405 969h1v1h-1zM405 974h1v1h-1zM405 978h1v1h-1zM405 983h1v1h-1zM405 988h1v1h-1zM580 58h1v1h-1zM580 63h1v1h-1zM580 67h1v1h-1zM580 72h1v1h-1zM580 77h1v1h-1zM580 81h1v1h-1zM580 86h1v1h-1zM580 90h1v1h-1zM580 95h1v1h-1zM580 100h1v1h-1zM580 104h1v1h-1zM580 109h1v1h-1zM580 114h1v1h-1zM580 118h1v1h-1zM580 123h1v1h-1zM580 128h1v1h-1zM580 132h1v1h-1zM580 137h1v1h-1zM580 141h1v1h-1zM580 146h1v1h-1zM580 151h1v1h-1zM580 155h1v1h-1zM580 160h1v1h-1zM580 165h1v1h-1zM580 169h1v1h-1zM580 174h1v1h-1zM580 179h1v1h-1zM580 183h1v1h-1zM580 188h1v1h-1zM580 192h1v1h-1zM580 197h1v1h-1zM580 202h1v1h-1zM580 206h1v1h-1zM580 211h1v1h-1zM580 216h1v1h-1zM580 220h1v1h-1zM580 225h1v1h-1zM580 230h1v1h-1zM580 234h1v1h-1zM580 239h1v1h-1zM580 243h1v1h-1zM580 248h1v1h-1zM580 253h1v1h-1zM580 257h1v1h-1zM580 262h1v1h-1zM580 267h1v1h-1zM580 271h1v1h-1zM580 276h1v1h-1zM580 281h1v1h-1zM580 285h1v1h-1zM580 290h1v1h-1zM580 292h1v1h-1zM580 297h1v1h-1zM580 301h1v1h-1zM580 306h1v1h-1zM580 310h1v1h-1zM580 315h1v1h-1zM580 320h1v1h-1zM580 324h1v1h-1zM580 329h1v1h-1zM580 334h1v1h-1zM580 338h1v1h-1zM580 343h1v1h-1zM580 348h1v1h-1zM580 352h1v1h-1zM580 357h1v1h-1zM580 361h1v1h-1zM580 366h1v1h-1zM580 371h1v1h-1zM580 375h1v1h-1zM580 380h1v1h-1zM580 385h1v1h-1zM580 389h1v1h-1zM580 394h1v1h-1zM580 399h1v1h-1zM580 403h1v1h-1zM580 408h1v1h-1zM580 412h1v1h-1zM580 417h1v1h-1zM580 422h1v1h-1zM580 426h1v1h-1zM580 431h1v1h-1zM580 436h1v1h-1zM580 440h1v1h-1zM580 445h1v1h-1zM580 450h1v1h-1zM580 454h1v1h-1zM580 459h1v1h-1zM580 463h1v1h-1zM580 468h1v1h-1zM580 473h1v1h-1zM580 477h1v1h-1zM580 482h1v1h-1zM580 487h1v1h-1zM580 491h1v1h-1zM580 496h1v1h-1zM580 501h1v1h-1zM580 505h1v1h-1zM580 510h1v1h-1zM580 514h1v1h-1zM580 519h1v1h-1zM580 526h1v1h-1zM580 531h1v1h-1zM580 535h1v1h-1zM580 540h1v1h-1zM580 544h1v1h-1zM580 549h1v1h-1zM580 554h1v1h-1zM580 558h1v1h-1zM580 563h1v1h-1zM580 568h1v1h-1zM580 572h1v1h-1zM580 577h1v1h-1zM580 582h1v1h-1zM580 586h1v1h-1zM580 591h1v1h-1zM580 595h1v1h-1zM580 600h1v1h-1zM580 605h1v1h-1zM580 609h1v1h-1zM580 614h1v1h-1zM580 619h1v1h-1zM580 623h1v1h-1zM580 628h1v1h-1zM580 633h1v1h-1zM580 637h1v1h-1zM580 642h1v1h-1zM580 646h1v1h-1zM580 651h1v1h-1zM580 656h1v1h-1zM580 660h1v1h-1zM580 665h1v1h-1zM580 670h1v1h-1zM580 674h1v1h-1zM580 679h1v1h-1zM580 684h1v1h-1zM580 688h1v1h-1zM580 693h1v1h-1zM580 697h1v1h-1zM580 702h1v1h-1zM580 707h1v1h-1zM580 711h1v1h-1zM580 716h1v1h-1zM580 721h1v1h-1zM580 725h1v1h-1zM580 730h1v1h-1zM580 735h1v1h-1zM580 739h1v1h-1zM580 744h1v1h-1zM580 748h1v1h-1zM580 753h1v1h-1zM580 760h1v1h-1zM580 765h1v1h-1zM580 770h1v1h-1zM580 774h1v1h-1zM580 779h1v1h-1zM580 784h1v1h-1zM580 788h1v1h-1zM580 793h1v1h-1zM580 797h1v1h-1zM580 802h1v1h-1zM580 807h1v1h-1zM580 811h1v1h-1zM580 816h1v1h-1zM580 821h1v1h-1zM580 825h1v1h-1zM580 830h1v1h-1zM580 835h1v1h-1zM580 839h1v1h-1zM580 844h1v1h-1zM580 848h1v1h-1zM580 853h1v1h-1zM580 858h1v1h-1zM580 862h1v1h-1zM580 867h1v1h-1zM580 872h1v1h-1zM580 876h1v1h-1zM580 881h1v1h-1zM580 886h1v1h-1zM580 890h1v1h-1zM580 895h1v1h-1zM580 899h1v1h-1zM580 904h1v1h-1zM580 909h1v1h-1zM580 913h1v1h-1zM580 918h1v1h-1zM580 923h1v1h-1zM580 927h1v1h-1zM580 932h1v1h-1zM580 937h1v1h-1zM580 941h1v1h-1zM580 946h1v1h-1zM580 950h1v1h-1zM580 955h1v1h-1zM580 960h1v1h-1zM580 964h1v1h-1zM580 969h1v1h-1zM580 974h1v1h-1zM580 978h1v1h-1zM580 983h1v1h-1zM580 988h1v1h-1zM755 58h1v1h-1zM755 63h1v1h-1zM755 67h1v1h-1zM755 72h1v1h-1zM755 77h1v1h-1zM755 81h1v1h-1zM755 86h1v1h-1zM755 90h1v1h-1zM755 95h1v1h-1zM755 100h1v1h-1zM755 104h1v1h-1zM755 109h1v1h-1zM755 114h1v1h-1zM755 118h1v1h-1zM755 123h1v1h-1zM755 128h1v1h-1zM755 132h1v1h-1zM755 137h1v1h-1zM755 141h1v1h-1zM755 146h1v1h-1zM755 151h1v1h-1zM755 155h1v1h-1zM755 160h1v1h-1zM755 165h1v1h-1zM755 169h1v1h-1zM755 174h1v1h-1zM755 179h1v1h-1zM755 183h1v1h-1zM755 188h1v1h-1zM755 192h1v1h-1zM755 197h1v1h-1zM755 202h1v1h-1zM755 206h1v1h-1zM755 211h1v1h-1zM755 216h1v1h-1zM755 220h1v1h-1zM755 225h1v1h-1zM755 230h1v1h-1zM755 234h1v1h-1zM755 239h1v1h-1zM755 243h1v1h-1zM755 248h1v1h-1zM755 253h1v1h-1zM755 257h1v1h-1zM755 262h1v1h-1zM755 267h1v1h-1zM755 271h1v1h-1zM755 276h1v1h-1zM755 281h1v1h-1zM755 285h1v1h-1zM755 290h1v1h-1zM755 292h1v1h-1zM755 297h1v1h-1zM755 301h1v1h-1zM755 306h1v1h-1zM755 310h1v1h-1zM755 315h1v1h-1zM755 320h1v1h-1zM755 324h1v1h-1zM755 329h1v1h-1zM755 334h1v1h-1zM755 338h1v1h-1zM755 343h1v1h-1zM755 348h1v1h-1zM755 352h1v1h-1zM755 357h1v1h-1zM755 361h1v1h-1zM755 366h1v1h-1zM755 371h1v1h-1zM755 375h1v1h-1zM755 380h1v1h-1zM755 385h1v1h-1zM755 389h1v1h-1zM755 394h1v1h-1zM755 399h1v1h-1zM755 403h1v1h-1zM755 408h1v1h-1zM755 412h1v1h-1zM755 417h1v1h-1zM755 422h1v1h-1zM755 426h1v1h-1zM755 431h1v1h-1zM755 436h1v1h-1zM755 440h1v1h-1zM755 445h1v1h-1zM755 450h1v1h-1zM755 454h1v1h-1zM755 459h1v1h-1zM755 463h1v1h-1zM755 468h1v1h-1zM755 473h1v1h-1zM755 477h1v1h-1zM755 482h1v1h-1zM755 487h1v1h-1zM755 491h1v1h-1zM755 496h1v1h-1zM755 501h1v1h-1zM755 505h1v1h-1zM755 510h1v1h-1zM755 514h1v1h-1zM755 519h1v1h-1zM755 526h1v1h-1zM755 531h1v1h-1zM755 535h1v1h-1zM755 540h1v1h-1zM755 544h1v1h-1zM755 549h1v1h-1zM755 554h1v1h-1zM755 558h1v1h-1zM755 563h1v1h-1zM755 568h1v1h-1zM755 572h1v1h-1zM755 577h1v1h-1zM755 582h1v1h-1zM755 586h1v1h-1zM755 591h1v1h-1zM755 595h1v1h-1zM755 600h1v1h-1zM755 605h1v1h-1zM755 609h1v1h-1zM755 614h1v1h-1zM755 619h1v1h-1zM755 623h1v1h-1zM755 628h1v1h-1zM755 633h1v1h-1zM755 637h1v1h-1zM755 642h1v1h-1zM755 646h1v1h-1zM755 651h1v1h-1zM755 656h1v1h-1zM755 660h1v1h-1zM755 665h1v1h-1zM755 670h1v1h-1zM755 674h1v1h-1zM755 679h1v1h-1zM755 684h1v1h-1zM755 688h1v1h-1zM755 693h1v1h-1zM755 697h1v1h-1zM755 702h1v1h-1zM755 707h1v1h-1zM755 711h1v1h-1zM755 716h1v1h-1zM755 721h1v1h-1zM755 725h1v1h-1zM755 730h1v1h-1zM755 735h1v1h-1zM755 739h1v1h-1zM755 744h1v1h-1zM755 748h1v1h-1zM755 753h1v1h-1zM755 760h1v1h-1zM755 765h1v1h-1zM755 770h1v1h-1zM755 774h1v1h-1zM755 779h1v1h-1zM755 784h1v1h-1zM755 788h1v1h-1zM755 793h1v1h-1zM755 797h1v1h-1zM755 802h1v1h-1zM755 807h1v1h-1zM755 811h1v1h-1zM755 816h1v1h-1zM755 821h1v1h-1zM755 825h1v1h-1zM755 830h1v1h-1zM755 835h1v1h-1zM755 839h1v1h-1zM755 844h1v1h-1zM755 848h1v1h-1zM755 853h1v1h-1zM755 858h1v1h-1zM755 862h1v1h-1zM755 867h1v1h-1zM755 872h1v1h-1zM755 876h1v1h-1zM755 881h1v1h-1zM755 886h1v1h-1zM755 890h1v1h-1zM755 895h1v1h-1zM755 899h1v1h-1zM755 904h1v1h-1zM755 909h1v1h-1zM755 913h1v1h-1zM755 918h1v1h-1zM755 923h1v1h-1zM755 927h1v1h-1zM755 932h1v1h-1zM755 937h1v1h-1zM755 941h1v1h-1zM755 946h1v1h-1zM755 950h1v1h-1zM755 955h1v1h-1zM755 960h1v1h-1zM755 964h1v1h-1zM755 969h1v1h-1zM755 974h1v1h-1zM755 978h1v1h-1zM755 983h1v1h-1zM755 988h1v1h-1zM929 58h1v1h-1zM929 63h1v1h-1zM929 67h1v1h-1zM929 72h1v1h-1zM929 77h1v1h-1zM929 81h1v1h-1zM929 86h1v1h-1zM929 90h1v1h-1zM929 95h1v1h-1zM929 100h1v1h-1zM929 104h1v1h-1zM929 109h1v1h-1zM929 114h1v1h-1zM929 118h1v1h-1zM929 123h1v1h-1zM929 128h1v1h-1zM929 132h1v1h-1zM929 137h1v1h-1zM929 141h1v1h-1zM929 146h1v1h-1zM929 151h1v1h-1zM929 155h1v1h-1zM929 160h1v1h-1zM929 165h1v1h-1zM929 169h1v1h-1zM929 174h1v1h-1zM929 179h1v1h-1zM929 183h1v1h-1zM929 188h1v1h-1zM929 192h1v1h-1zM929 197h1v1h-1zM929 202h1v1h-1zM929 206h1v1h-1zM929 211h1v1h-1zM929 216h1v1h-1zM929 220h1v1h-1zM929 225h1v1h-1zM929 230h1v1h-1zM929 234h1v1h-1zM929 239h1v1h-1zM929 243h1v1h-1zM929 248h1v1h-1zM929 253h1v1h-1zM929 257h1v1h-1zM929 262h1v1h-1zM929 267h1v1h-1zM929 271h1v1h-1zM929 276h1v1h-1zM929 281h1v1h-1zM929 285h1v1h-1zM929 290h1v1h-1zM929 292h1v1h-1zM929 297h1v1h-1zM929 301h1v1h-1zM929 306h1v1h-1zM929 310h1v1h-1zM929 315h1v1h-1zM929 320h1v1h-1zM929 324h1v1h-1zM929 329h1v1h-1zM929 334h1v1h-1zM929 338h1v1h-1zM929 343h1v1h-1zM929 348h1v1h-1zM929 352h1v1h-1zM929 357h1v1h-1zM929 361h1v1h-1zM929 366h1v1h-1zM929 371h1v1h-1zM929 375h1v1h-1zM929 380h1v1h-1zM929 385h1v1h-1zM929 389h1v1h-1zM929 394h1v1h-1zM929 399h1v1h-1zM929 403h1v1h-1zM929 408h1v1h-1zM929 412h1v1h-1zM929 417h1v1h-1zM929 422h1v1h-1zM929 426h1v1h-1zM929 431h1v1h-1zM929 436h1v1h-1zM929 440h1v1h-1zM929 445h1v1h-1zM929 450h1v1h-1zM929 454h1v1h-1zM929 459h1v1h-1zM929 463h1v1h-1zM929 468h1v1h-1zM929 473h1v1h-1zM929 477h1v1h-1zM929 482h1v1h-1zM929 487h1v1h-1zM929 491h1v1h-1zM929 496h1v1h-1zM929 501h1v1h-1zM929 505h1v1h-1zM929 510h1v1h-1zM929 514h1v1h-1zM929 519h1v1h-1zM929 526h1v1h-1zM929 531h1v1h-1zM929 535h1v1h-1zM929 540h1v1h-1zM929 544h1v1h-1zM929 549h1v1h-1zM929 554h1v1h-1zM929 558h1v1h-1zM929 563h1v1h-1zM929 568h1v1h-1zM929 572h1v1h-1zM929 577h1v1h-1zM929 582h1v1h-1zM929 586h1v1h-1zM929 591h1v1h-1zM929 595h1v1h-1zM929 600h1v1h-1zM929 605h1v1h-1zM929 609h1v1h-1zM929 614h1v1h-1zM929 619h1v1h-1zM929 623h1v1h-1zM929 628h1v1h-1zM929 633h1v1h-1zM929 637h1v1h-1zM929 642h1v1h-1zM929 646h1v1h-1zM929 651h1v1h-1zM929 656h1v1h-1zM929 660h1v1h-1zM929 665h1v1h-1zM929 670h1v1h-1zM929 674h1v1h-1zM929 679h1v1h-1zM929 684h1v1h-1zM929 688h1v1h-1zM929 693h1v1h-1zM929 697h1v1h-1zM929 702h1v1h-1zM929 707h1v1h-1zM929 711h1v1h-1zM929 716h1v1h-1zM929 721h1v1h-1zM929 725h1v1h-1zM929 730h1v1h-1zM929 735h1v1h-1zM929 739h1v1h-1zM929 744h1v1h-1zM929 748h1v1h-1zM929 753h1v1h-1zM929 760h1v1h-1zM929 765h1v1h-1zM929 770h1v1h-1zM929 774h1v1h-1zM929 779h1v1h-1zM929 784h1v1h-1zM929 788h1v1h-1zM929 793h1v1h-1zM929 797h1v1h-1zM929 802h1v1h-1zM929 807h1v1h-1zM929 811h1v1h-1zM929 816h1v1h-1zM929 821h1v1h-1zM929 825h1v1h-1zM929 830h1v1h-1zM929 835h1v1h-1zM929 839h1v1h-1zM929 844h1v1h-1zM929 848h1v1h-1zM929 853h1v1h-1zM929 858h1v1h-1zM929 862h1v1h-1zM929 867h1v1h-1zM929 872h1v1h-1zM929 876h1v1h-1zM929 881h1v1h-1zM929 886h1v1h-1zM929 890h1v1h-1zM929 895h1v1h-1zM929 899h1v1h-1zM929 904h1v1h-1zM929 909h1v1h-1zM929 913h1v1h-1zM929 918h1v1h-1zM929 923h1v1h-1zM929 927h1v1h-1zM929 932h1v1h-1zM929 937h1v1h-1zM929 941h1v1h-1zM929 946h1v1h-1zM929 950h1v1h-1zM929 955h1v1h-1zM929 960h1v1h-1zM929 964h1v1h-1zM929 969h1v1h-1zM929 974h1v1h-1zM929 978h1v1h-1zM929 983h1v1h-1zM929 988h1v1h-1zM1104 58h1v1h-1zM1104 63h1v1h-1zM1104 67h1v1h-1zM1104 72h1v1h-1zM1104 77h1v1h-1zM1104 81h1v1h-1zM1104 86h1v1h-1zM1104 90h1v1h-1zM1104 95h1v1h-1zM1104 100h1v1h-1zM1104 104h1v1h-1zM1104 109h1v1h-1zM1104 114h1v1h-1zM1104 118h1v1h-1zM1104 123h1v1h-1zM1104 128h1v1h-1zM1104 132h1v1h-1zM1104 137h1v1h-1zM1104 141h1v1h-1zM1104 146h1v1h-1zM1104 151h1v1h-1zM1104 155h1v1h-1zM1104 160h1v1h-1zM1104 165h1v1h-1zM1104 169h1v1h-1zM1104 174h1v1h-1zM1104 179h1v1h-1zM1104 183h1v1h-1zM1104 188h1v1h-1zM1104 192h1v1h-1zM1104 197h1v1h-1zM1104 202h1v1h-1zM1104 206h1v1h-1zM1104 211h1v1h-1zM1104 216h1v1h-1zM1104 220h1v1h-1zM1104 225h1v1h-1zM1104 230h1v1h-1zM1104 234h1v1h-1zM1104 239h1v1h-1zM1104 243h1v1h-1zM1104 248h1v1h-1zM1104 253h1v1h-1zM1104 257h1v1h-1zM1104 262h1v1h-1zM1104 267h1v1h-1zM1104 271h1v1h-1zM1104 276h1v1h-1zM1104 281h1v1h-1zM1104 285h1v1h-1zM1104 290h1v1h-1zM1104 292h1v1h-1zM1104 297h1v1h-1zM1104 301h1v1h-1zM1104 306h1v1h-1zM1104 310h1v1h-1zM1104 315h1v1h-1zM1104 320h1v1h-1zM1104 324h1v1h-1zM1104 329h1v1h-1zM1104 334h1v1h-1zM1104 338h1v1h-1zM1104 343h1v1h-1zM1104 348h1v1h-1zM1104 352h1v1h-1zM1104 357h1v1h-1zM1104 361h1v1h-1zM1104 366h1v1h-1zM1104 371h1v1h-1zM1104 375h1v1h-1zM1104 380h1v1h-1zM1104 385h1v1h-1zM1104 389h1v1h-1zM1104 394h1v1h-1zM1104 399h1v1h-1zM1104 403h1v1h-1zM1104 408h1v1h-1zM1104 412h1v1h-1zM1104 417h1v1h-1zM1104 422h1v1h-1zM1104 426h1v1h-1zM1104 431h1v1h-1zM1104 436h1v1h-1zM1104 440h1v1h-1zM1104 445h1v1h-1zM1104 450h1v1h-1zM1104 454h1v1h-1zM1104 459h1v1h-1zM1104 463h1v1h-1zM1104 468h1v1h-1zM1104 473h1v1h-1zM1104 477h1v1h-1zM1104 482h1v1h-1zM1104 487h1v1h-1zM1104 491h1v1h-1zM1104 496h1v1h-1zM1104 501h1v1h-1zM1104 505h1v1h-1zM1104 510h1v1h-1zM1104 514h1v1h-1zM1104 519h1v1h-1zM1104 526h1v1h-1zM1104 531h1v1h-1zM1104 535h1v1h-1zM1104 540h1v1h-1zM1104 544h1v1h-1zM1104 549h1v1h-1zM1104 554h1v1h-1zM1104 558h1v1h-1zM1104 563h1v1h-1zM1104 568h1v1h-1zM1104 572h1v1h-1zM1104 577h1v1h-1zM1104 582h1v1h-1zM1104 586h1v1h-1zM1104 591h1v1h-1zM1104 595h1v1h-1zM1104 600h1v1h-1zM1104 605h1v1h-1zM1104 609h1v1h-1zM1104 614h1v1h-1zM1104 619h1v1h-1zM1104 623h1v1h-1zM1104 628h1v1h-1zM1104 633h1v1h-1zM1104 637h1v1h-1zM1104 642h1v1h-1zM1104 646h1v1h-1zM1104 651h1v1h-1zM1104 656h1v1h-1zM1104 660h1v1h-1zM1104 665h1v1h-1zM1104 670h1v1h-1zM1104 674h1v1h-1zM1104 679h1v1h-1zM1104 684h1v1h-1zM1104 688h1v1h-1zM1104 693h1v1h-1zM1104 697h1v1h-1zM1104 702h1v1h-1zM1104 707h1v1h-1zM1104 711h1v1h-1zM1104 716h1v1h-1zM1104 721h1v1h-1zM1104 725h1v1h-1zM1104 730h1v1h-1zM1104 735h1v1h-1zM1104 739h1v1h-1zM1104 744h1v1h-1zM1104 748h1v1h-1zM1104 753h1v1h-1zM1104 760h1v1h-1zM1104 765h1v1h-1zM1104 770h1v1h-1zM1104 774h1v1h-1zM1104 779h1v1h-1zM1104 784h1v1h-1zM1104 788h1v1h-1zM1104 793h1v1h-1zM1104 797h1v1h-1zM1104 802h1v1h-1zM1104 807h1v1h-1zM1104 811h1v1h-1zM1104 816h1v1h-1zM1104 821h1v1h-1zM1104 825h1v1h-1zM1104 830h1v1h-1zM1104 835h1v1h-1zM1104 839h1v1h-1zM1104 844h1v1h-1zM1104 848h1v1h-1zM1104 853h1v1h-1zM1104 858h1v1h-1zM1104 862h1v1h-1zM1104 867h1v1h-1zM1104 872h1v1h-1zM1104 876h1v1h-1zM1104 881h1v1h-1zM1104 886h1v1h-1zM1104 890h1v1h-1zM1104 895h1v1h-1zM1104 899h1v1h-1zM1104 904h1v1h-1zM1104 909h1v1h-1zM1104 913h1v1h-1zM1104 918h1v1h-1zM1104 923h1v1h-1zM1104 927h1v1h-1zM1104 932h1v1h-1zM1104 937h1v1h-1zM1104 941h1v1h-1zM1104 946h1v1h-1zM1104 950h1v1h-1zM1104 955h1v1h-1zM1104 960h1v1h-1zM1104 964h1v1h-1zM1104 969h1v1h-1zM1104 974h1v1h-1zM1104 978h1v1h-1zM1104 983h1v1h-1zM1104 988h1v1h-1zM1279 58h1v1h-1zM1279 63h1v1h-1zM1279 67h1v1h-1zM1279 72h1v1h-1zM1279 77h1v1h-1zM1279 81h1v1h-1zM1279 86h1v1h-1zM1279 90h1v1h-1zM1279 95h1v1h-1zM1279 100h1v1h-1zM1279 104h1v1h-1zM1279 109h1v1h-1zM1279 114h1v1h-1zM1279 118h1v1h-1zM1279 123h1v1h-1zM1279 128h1v1h-1zM1279 132h1v1h-1zM1279 137h1v1h-1zM1279 141h1v1h-1zM1279 146h1v1h-1zM1279 151h1v1h-1zM1279 155h1v1h-1zM1279 160h1v1h-1zM1279 165h1v1h-1zM1279 169h1v1h-1zM1279 174h1v1h-1zM1279 179h1v1h-1zM1279 183h1v1h-1zM1279 188h1v1h-1zM1279 192h1v1h-1zM1279 197h1v1h-1zM1279 202h1v1h-1zM1279 206h1v1h-1zM1279 211h1v1h-1zM1279 216h1v1h-1zM1279 220h1v1h-1zM1279 225h1v1h-1zM1279 230h1v1h-1zM1279 234h1v1h-1zM1279 239h1v1h-1zM1279 243h1v1h-1zM1279 248h1v1h-1zM1279 253h1v1h-1zM1279 257h1v1h-1zM1279 262h1v1h-1zM1279 267h1v1h-1zM1279 271h1v1h-1zM1279 276h1v1h-1zM1279 281h1v1h-1zM1279 285h1v1h-1zM1279 290h1v1h-1zM1279 292h1v1h-1zM1279 297h1v1h-1zM1279 301h1v1h-1zM1279 306h1v1h-1zM1279 310h1v1h-1zM1279 315h1v1h-1zM1279 320h1v1h-1zM1279 324h1v1h-1zM1279 329h1v1h-1zM1279 334h1v1h-1zM1279 338h1v1h-1zM1279 343h1v1h-1zM1279 348h1v1h-1zM1279 352h1v1h-1zM1279 357h1v1h-1zM1279 361h1v1h-1zM1279 366h1v1h-1zM1279 371h1v1h-1zM1279 375h1v1h-1zM1279 380h1v1h-1zM1279 385h1v1h-1zM1279 389h1v1h-1zM1279 394h1v1h-1zM1279 399h1v1h-1zM1279 403h1v1h-1zM1279 408h1v1h-1zM1279 412h1v1h-1zM1279 417h1v1h-1zM1279 422h1v1h-1zM1279 426h1v1h-1zM1279 431h1v1h-1zM1279 436h1v1h-1zM1279 440h1v1h-1zM1279 445h1v1h-1zM1279 450h1v1h-1zM1279 454h1v1h-1zM1279 459h1v1h-1zM1279 463h1v1h-1zM1279 468h1v1h-1zM1279 473h1v1h-1zM1279 477h1v1h-1zM1279 482h1v1h-1zM1279 487h1v1h-1zM1279 491h1v1h-1zM1279 496h1v1h-1zM1279 501h1v1h-1zM1279 505h1v1h-1zM1279 510h1v1h-1zM1279 514h1v1h-1zM1279 519h1v1h-1zM1279 526h1v1h-1zM1279 531h1v1h-1zM1279 535h1v1h-1zM1279 540h1v1h-1zM1279 544h1v1h-1zM1279 549h1v1h-1zM1279 554h1v1h-1zM1279 558h1v1h-1zM1279 563h1v1h-1zM1279 568h1v1h-1zM1279 572h1v1h-1zM1279 577h1v1h-1zM1279 582h1v1h-1zM1279 586h1v1h-1zM1279 591h1v1h-1zM1279 595h1v1h-1zM1279 600h1v1h-1zM1279 605h1v1h-1zM1279 609h1v1h-1zM1279 614h1v1h-1zM1279 619h1v1h-1zM1279 623h1v1h-1zM1279 628h1v1h-1zM1279 633h1v1h-1zM1279 637h1v1h-1zM1279 642h1v1h-1zM1279 646h1v1h-1zM1279 651h1v1h-1zM1279 656h1v1h-1zM1279 660h1v1h-1zM1279 665h1v1h-1zM1279 670h1v1h-1zM1279 674h1v1h-1zM1279 679h1v1h-1zM1279 684h1v1h-1zM1279 688h1v1h-1zM1279 693h1v1h-1zM1279 697h1v1h-1zM1279 702h1v1h-1zM1279 707h1v1h-1zM1279 711h1v1h-1zM1279 716h1v1h-1zM1279 721h1v1h-1zM1279 725h1v1h-1zM1279 730h1v1h-1zM1279 735h1v1h-1zM1279 739h1v1h-1zM1279 744h1v1h-1zM1279 748h1v1h-1zM1279 753h1v1h-1zM1279 760h1v1h-1zM1279 765h1v1h-1zM1279 770h1v1h-1zM1279 774h1v1h-1zM1279 779h1v1h-1zM1279 784h1v1h-1zM1279 788h1v1h-1zM1279 793h1v1h-1zM1279 797h1v1h-1zM1279 802h1v1h-1zM1279 807h1v1h-1zM1279 811h1v1h-1zM1279 816h1v1h-1zM1279 821h1v1h-1zM1279 825h1v1h-1zM1279 830h1v1h-1zM1279 835h1v1h-1zM1279 839h1v1h-1zM1279 844h1v1h-1zM1279 848h1v1h-1zM1279 853h1v1h-1zM1279 858h1v1h-1zM1279 862h1v1h-1zM1279 867h1v1h-1zM1279 872h1v1h-1zM1279 876h1v1h-1zM1279 881h1v1h-1zM1279 886h1v1h-1zM1279 890h1v1h-1zM1279 895h1v1h-1zM1279 899h1v1h-1zM1279 904h1v1h-1zM1279 909h1v1h-1zM1279 913h1v1h-1zM1279 918h1v1h-1zM1279 923h1v1h-1zM1279 927h1v1h-1zM1279 932h1v1h-1zM1279 937h1v1h-1zM1279 941h1v1h-1zM1279 946h1v1h-1zM1279 950h1v1h-1zM1279 955h1v1h-1zM1279 960h1v1h-1zM1279 964h1v1h-1zM1279 969h1v1h-1zM1279 974h1v1h-1zM1279 978h1v1h-1zM1279 983h1v1h-1zM1279 988h1v1h-1zM1454 58h1v1h-1zM1454 63h1v1h-1zM1454 67h1v1h-1zM1454 72h1v1h-1zM1454 77h1v1h-1zM1454 81h1v1h-1zM1454 86h1v1h-1zM1454 90h1v1h-1zM1454 95h1v1h-1zM1454 100h1v1h-1zM1454 104h1v1h-1zM1454 109h1v1h-1zM1454 114h1v1h-1zM1454 118h1v1h-1zM1454 123h1v1h-1zM1454 128h1v1h-1zM1454 132h1v1h-1zM1454 137h1v1h-1zM1454 141h1v1h-1zM1454 146h1v1h-1zM1454 151h1v1h-1zM1454 155h1v1h-1zM1454 160h1v1h-1zM1454 165h1v1h-1zM1454 169h1v1h-1zM1454 174h1v1h-1zM1454 179h1v1h-1zM1454 183h1v1h-1zM1454 188h1v1h-1zM1454 192h1v1h-1zM1454 197h1v1h-1zM1454 202h1v1h-1zM1454 206h1v1h-1zM1454 211h1v1h-1zM1454 216h1v1h-1zM1454 220h1v1h-1zM1454 225h1v1h-1zM1454 230h1v1h-1zM1454 234h1v1h-1zM1454 239h1v1h-1zM1454 243h1v1h-1zM1454 248h1v1h-1zM1454 253h1v1h-1zM1454 257h1v1h-1zM1454 262h1v1h-1zM1454 267h1v1h-1zM1454 271h1v1h-1zM1454 276h1v1h-1zM1454 281h1v1h-1zM1454 285h1v1h-1zM1454 290h1v1h-1zM1454 292h1v1h-1zM1454 297h1v1h-1zM1454 301h1v1h-1zM1454 306h1v1h-1zM1454 310h1v1h-1zM1454 315h1v1h-1zM1454 320h1v1h-1zM1454 324h1v1h-1zM1454 329h1v1h-1zM1454 334h1v1h-1zM1454 338h1v1h-1zM1454 343h1v1h-1zM1454 348h1v1h-1zM1454 352h1v1h-1zM1454 357h1v1h-1zM1454 361h1v1h-1zM1454 366h1v1h-1zM1454 371h1v1h-1zM1454 375h1v1h-1zM1454 380h1v1h-1zM1454 385h1v1h-1zM1454 389h1v1h-1zM1454 394h1v1h-1zM1454 399h1v1h-1zM1454 403h1v1h-1zM1454 408h1v1h-1zM1454 412h1v1h-1zM1454 417h1v1h-1zM1454 422h1v1h-1zM1454 426h1v1h-1zM1454 431h1v1h-1zM1454 436h1v1h-1zM1454 440h1v1h-1zM1454 445h1v1h-1zM1454 450h1v1h-1zM1454 454h1v1h-1zM1454 459h1v1h-1zM1454 463h1v1h-1zM1454 468h1v1h-1zM1454 473h1v1h-1zM1454 477h1v1h-1zM1454 482h1v1h-1zM1454 487h1v1h-1zM1454 491h1v1h-1zM1454 496h1v1h-1zM1454 501h1v1h-1zM1454 505h1v1h-1zM1454 510h1v1h-1zM1454 514h1v1h-1zM1454 519h1v1h-1zM1454 526h1v1h-1zM1454 531h1v1h-1zM1454 535h1v1h-1zM1454 540h1v1h-1zM1454 544h1v1h-1zM1454 549h1v1h-1zM1454 554h1v1h-1zM1454 558h1v1h-1zM1454 563h1v1h-1zM1454 568h1v1h-1zM1454 572h1v1h-1zM1454 577h1v1h-1zM1454 582h1v1h-1zM1454 586h1v1h-1zM1454 591h1v1h-1zM1454 595h1v1h-1zM1454 600h1v1h-1zM1454 605h1v1h-1zM1454 609h1v1h-1zM1454 614h1v1h-1zM1454 619h1v1h-1zM1454 623h1v1h-1zM1454 628h1v1h-1zM1454 633h1v1h-1zM1454 637h1v1h-1zM1454 642h1v1h-1zM1454 646h1v1h-1zM1454 651h1v1h-1zM1454 656h1v1h-1zM1454 660h1v1h-1zM1454 665h1v1h-1zM1454 670h1v1h-1zM1454 674h1v1h-1zM1454 679h1v1h-1zM1454 684h1v1h-1zM1454 688h1v1h-1zM1454 693h1v1h-1zM1454 697h1v1h-1zM1454 702h1v1h-1zM1454 707h1v1h-1zM1454 711h1v1h-1zM1454 716h1v1h-1zM1454 721h1v1h-1zM1454 725h1v1h-1zM1454 730h1v1h-1zM1454 735h1v1h-1zM1454 739h1v1h-1zM1454 744h1v1h-1zM1454 748h1v1h-1zM1454 753h1v1h-1zM1454 760h1v1h-1zM1454 765h1v1h-1zM1454 770h1v1h-1zM1454 774h1v1h-1zM1454 779h1v1h-1zM1454 784h1v1h-1zM1454 788h1v1h-1zM1454 793h1v1h-1zM1454 797h1v1h-1zM1454 802h1v1h-1zM1454 807h1v1h-1zM1454 811h1v1h-1zM1454 816h1v1h-1zM1454 821h1v1h-1zM1454 825h1v1h-1zM1454 830h1v1h-1zM1454 835h1v1h-1zM1454 839h1v1h-1zM1454 844h1v1h-1zM1454 848h1v1h-1zM1454 853h1v1h-1zM1454 858h1v1h-1zM1454 862h1v1h-1zM1454 867h1v1h-1zM1454 872h1v1h-1zM1454 876h1v1h-1zM1454 881h1v1h-1zM1454 886h1v1h-1zM1454 890h1v1h-1zM1454 895h1v1h-1zM1454 899h1v1h-1zM1454 904h1v1h-1zM1454 909h1v1h-1zM1454 913h1v1h-1zM1454 918h1v1h-1zM1454 923h1v1h-1zM1454 927h1v1h-1zM1454 932h1v1h-1zM1454 937h1v1h-1zM1454 941h1v1h-1zM1454 946h1v1h-1zM1454 950h1v1h-1zM1454 955h1v1h-1zM1454 960h1v1h-1zM1454 964h1v1h-1zM1454 969h1v1h-1zM1454 974h1v1h-1zM1454 978h1v1h-1zM1454 983h1v1h-1zM1454 988h1v1h-1zM1629 58h1v1h-1zM1629 63h1v1h-1zM1629 67h1v1h-1zM1629 72h1v1h-1zM1629 77h1v1h-1zM1629 81h1v1h-1zM1629 86h1v1h-1zM1629 90h1v1h-1zM1629 95h1v1h-1zM1629 100h1v1h-1zM1629 104h1v1h-1zM1629 109h1v1h-1zM1629 114h1v1h-1zM1629 118h1v1h-1zM1629 123h1v1h-1zM1629 128h1v1h-1zM1629 132h1v1h-1zM1629 137h1v1h-1zM1629 141h1v1h-1zM1629 146h1v1h-1zM1629 151h1v1h-1zM1629 155h1v1h-1zM1629 160h1v1h-1zM1629 165h1v1h-1zM1629 169h1v1h-1zM1629 174h1v1h-1zM1629 179h1v1h-1zM1629 183h1v1h-1zM1629 188h1v1h-1zM1629 192h1v1h-1zM1629 197h1v1h-1zM1629 202h1v1h-1zM1629 206h1v1h-1zM1629 211h1v1h-1zM1629 216h1v1h-1zM1629 220h1v1h-1zM1629 225h1v1h-1zM1629 230h1v1h-1zM1629 234h1v1h-1zM1629 239h1v1h-1zM1629 243h1v1h-1zM1629 248h1v1h-1zM1629 253h1v1h-1zM1629 257h1v1h-1zM1629 262h1v1h-1zM1629 267h1v1h-1zM1629 271h1v1h-1zM1629 276h1v1h-1zM1629 281h1v1h-1zM1629 285h1v1h-1zM1629 290h1v1h-1zM1629 292h1v1h-1zM1629 297h1v1h-1zM1629 301h1v1h-1zM1629 306h1v1h-1zM1629 310h1v1h-1zM1629 315h1v1h-1zM1629 320h1v1h-1zM1629 324h1v1h-1zM1629 329h1v1h-1zM1629 334h1v1h-1zM1629 338h1v1h-1zM1629 343h1v1h-1zM1629 348h1v1h-1zM1629 352h1v1h-1zM1629 357h1v1h-1zM1629 361h1v1h-1zM1629 366h1v1h-1zM1629 371h1v1h-1zM1629 375h1v1h-1zM1629 380h1v1h-1zM1629 385h1v1h-1zM1629 389h1v1h-1zM1629 394h1v1h-1zM1629 399h1v1h-1zM1629 403h1v1h-1zM1629 408h1v1h-1zM1629 412h1v1h-1zM1629 417h1v1h-1zM1629 422h1v1h-1zM1629 426h1v1h-1zM1629 431h1v1h-1zM1629 436h1v1h-1zM1629 440h1v1h-1zM1629 445h1v1h-1zM1629 450h1v1h-1zM1629 454h1v1h-1zM1629 459h1v1h-1zM1629 463h1v1h-1zM1629 468h1v1h-1zM1629 473h1v1h-1zM1629 477h1v1h-1zM1629 482h1v1h-1zM1629 487h1v1h-1zM1629 491h1v1h-1zM1629 496h1v1h-1zM1629 501h1v1h-1zM1629 505h1v1h-1zM1629 510h1v1h-1zM1629 514h1v1h-1zM1629 519h1v1h-1zM1629 526h1v1h-1zM1629 531h1v1h-1zM1629 535h1v1h-1zM1629 540h1v1h-1zM1629 544h1v1h-1zM1629 549h1v1h-1zM1629 554h1v1h-1zM1629 558h1v1h-1zM1629 563h1v1h-1zM1629 568h1v1h-1zM1629 572h1v1h-1zM1629 577h1v1h-1zM1629 582h1v1h-1zM1629 586h1v1h-1zM1629 591h1v1h-1zM1629 595h1v1h-1zM1629 600h1v1h-1zM1629 605h1v1h-1zM1629 609h1v1h-1zM1629 614h1v1h-1zM1629 619h1v1h-1zM1629 623h1v1h-1zM1629 628h1v1h-1zM1629 633h1v1h-1zM1629 637h1v1h-1zM1629 642h1v1h-1zM1629 646h1v1h-1zM1629 651h1v1h-1zM1629 656h1v1h-1zM1629 660h1v1h-1zM1629 665h1v1h-1zM1629 670h1v1h-1zM1629 674h1v1h-1zM1629 679h1v1h-1zM1629 684h1v1h-1zM1629 688h1v1h-1zM1629 693h1v1h-1zM1629 697h1v1h-1zM1629 702h1v1h-1zM1629 707h1v1h-1zM1629 711h1v1h-1zM1629 716h1v1h-1zM1629 721h1v1h-1zM1629 725h1v1h-1zM1629 730h1v1h-1zM1629 735h1v1h-1zM1629 739h1v1h-1zM1629 744h1v1h-1zM1629 748h1v1h-1zM1629 753h1v1h-1zM1629 760h1v1h-1zM1629 765h1v1h-1zM1629 770h1v1h-1zM1629 774h1v1h-1zM1629 779h1v1h-1zM1629 784h1v1h-1zM1629 788h1v1h-1zM1629 793h1v1h-1zM1629 797h1v1h-1zM1629 802h1v1h-1zM1629 807h1v1h-1zM1629 811h1v1h-1zM1629 816h1v1h-1zM1629 821h1v1h-1zM1629 825h1v1h-1zM1629 830h1v1h-1zM1629 835h1v1h-1zM1629 839h1v1h-1zM1629 844h1v1h-1zM1629 848h1v1h-1zM1629 853h1v1h-1zM1629 858h1v1h-1zM1629 862h1v1h-1zM1629 867h1v1h-1zM1629 872h1v1h-1zM1629 876h1v1h-1zM1629 881h1v1h-1zM1629 886h1v1h-1zM1629 890h1v1h-1zM1629 895h1v1h-1zM1629 899h1v1h-1zM1629 904h1v1h-1zM1629 909h1v1h-1zM1629 913h1v1h-1zM1629 918h1v1h-1zM1629 923h1v1h-1zM1629 927h1v1h-1zM1629 932h1v1h-1zM1629 937h1v1h-1zM1629 941h1v1h-1zM1629 946h1v1h-1zM1629 950h1v1h-1zM1629 955h1v1h-1zM1629 960h1v1h-1zM1629 964h1v1h-1zM1629 969h1v1h-1zM1629 974h1v1h-1zM1629 978h1v1h-1zM1629 983h1v1h-1zM1629 988h1v1h-1z"/>
<path d="M55.5 58V993" stroke="#c8c8c8" stroke-width="1.2" stroke-dasharray="5 5"/>
<g stroke="#d0d0d0" stroke-width="1" stroke-dasharray="5 5">
<path d="M3 267.5H1719"/><path d="M3 431.5H1719"/><path d="M3 735.5H1719"/><path d="M3 965.5H1719"/>
</g>
<rect x="1713.7" y="74.0" width="37.3" height="15" fill="#000"/><rect x="1713.7" y="97.2" width="37.3" height="15" fill="#000"/><rect x="1713.7" y="120.4" width="37.3" height="15" fill="#000"/><rect x="1713.7" y="143.6" width="37.3" height="15" fill="#000"/><rect x="1713.7" y="166.8" width="37.3" height="15" fill="#000"/><rect x="1713.7" y="190.0" width="37.3" height="15" fill="#000"/><rect x="1713.7" y="213.2" width="37.3" height="15" fill="#000"/><rect x="1721.0" y="236.4" width="30.0" height="15" fill="#000"/><rect x="1721.0" y="259.6" width="30.0" height="15" fill="#000"/><rect x="1721.0" y="308.1" width="30.0" height="15" fill="#000"/><rect x="1695.5" y="331.3" width="55.5" height="15" fill="#000"/><rect x="1695.5" y="354.5" width="55.5" height="15" fill="#000"/><rect x="1695.5" y="377.7" width="55.5" height="15" fill="#000"/><rect x="1695.5" y="400.9" width="55.5" height="15" fill="#000"/><rect x="1721.0" y="424.1" width="30.0" height="15" fill="#000"/><rect x="1691.0" y="447.3" width="60.0" height="15" fill="#000"/><rect x="1691.0" y="470.5" width="60.0" height="15" fill="#000"/><rect x="1691.0" y="493.7" width="60.0" height="15" fill="#000"/><rect x="1670.3" y="542.1" width="80.7" height="15" fill="#000"/><rect x="1670.3" y="565.3" width="80.7" height="15" fill="#000"/><rect x="1670.3" y="588.5" width="80.7" height="15" fill="#000"/><rect x="1670.3" y="611.7" width="80.7" height="15" fill="#000"/><rect x="1670.3" y="634.9" width="80.7" height="15" fill="#000"/><rect x="1670.3" y="658.1" width="80.7" height="15" fill="#000"/><rect x="1670.3" y="681.3" width="80.7" height="15" fill="#000"/><rect x="1677.6" y="704.5" width="73.4" height="15" fill="#000"/><rect x="1722.0" y="727.7" width="29.0" height="15" fill="#000"/><rect x="1666.4" y="772.1" width="84.6" height="15" fill="#000"/><rect x="1666.4" y="795.3" width="84.6" height="15" fill="#000"/><rect x="1666.4" y="818.5" width="84.6" height="15" fill="#000"/><rect x="1666.4" y="841.6" width="84.6" height="15" fill="#000"/><rect x="1666.4" y="864.8" width="84.6" height="15" fill="#000"/><rect x="1666.4" y="888.0" width="84.6" height="15" fill="#000"/><rect x="1666.4" y="911.2" width="84.6" height="15" fill="#000"/><rect x="1681.1" y="934.4" width="69.9" height="15" fill="#000"/><rect x="1721.7" y="957.5" width="29.3" height="15" fill="#000"/>
<g fill="#7c7c7c"><rect x="3" y="290" width="1748" height="2"/><rect x="3" y="524" width="1748" height="2"/><rect x="3" y="758" width="1748" height="2"/></g>
<g font-family="Liberation Sans" font-size="12.5" text-anchor="end" letter-spacing="0.4"><text x="1746" y="86.0" fill="#e8e23a">40 V</text><text x="1746" y="109.2" fill="#e8e23a">35 V</text><text x="1746" y="132.4" fill="#e8e23a">30 V</text><text x="1746" y="155.6" fill="#e8e23a">25 V</text><text x="1746" y="178.8" fill="#e8e23a">20 V</text><text x="1746" y="202.0" fill="#e8e23a">15 V</text><text x="1746" y="225.2" fill="#e8e23a">10 V</text><text x="1746" y="248.4" fill="#e8e23a">5 V</text><text x="1746" y="271.6" fill="#e8e23a">0 V</text><text x="1746" y="320.1" fill="#8acb3a">1 V</text><text x="1746" y="343.3" fill="#8acb3a">800 mV</text><text x="1746" y="366.5" fill="#8acb3a">600 mV</text><text x="1746" y="389.7" fill="#8acb3a">400 mV</text><text x="1746" y="412.9" fill="#8acb3a">200 mV</text><text x="1746" y="436.1" fill="#8acb3a">0 V</text><text x="1746" y="459.3" fill="#8acb3a">-200 mV</text><text x="1746" y="482.5" fill="#8acb3a">-400 mV</text><text x="1746" y="505.7" fill="#8acb3a">-600 mV</text><text x="1746" y="554.1" fill="#ee8c2a">586.081 mT</text><text x="1746" y="577.3" fill="#ee8c2a">512.821 mT</text><text x="1746" y="600.5" fill="#ee8c2a">439.561 mT</text><text x="1746" y="623.7" fill="#ee8c2a">366.301 mT</text><text x="1746" y="646.9" fill="#ee8c2a">293.040 mT</text><text x="1746" y="670.1" fill="#ee8c2a">219.780 mT</text><text x="1746" y="693.3" fill="#ee8c2a">146.520 mT</text><text x="1746" y="716.5" fill="#ee8c2a">73.260 mT</text><text x="1746" y="739.7" fill="#ee8c2a">0 T</text><text x="1746" y="784.1" fill="#7c3a9e">7.941212 kA</text><text x="1746" y="807.3" fill="#7c3a9e">6.948561 kA</text><text x="1746" y="830.5" fill="#7c3a9e">5.955909 kA</text><text x="1746" y="853.6" fill="#7c3a9e">4.963258 kA</text><text x="1746" y="876.8" fill="#7c3a9e">3.970606 kA</text><text x="1746" y="900.0" fill="#7c3a9e">2.977955 kA</text><text x="1746" y="923.2" fill="#7c3a9e">1.985303 kA</text><text x="1746" y="946.4" fill="#7c3a9e">992.652 A</text><text x="1746" y="969.5" fill="#7c3a9e">0 A</text></g>
<g font-family="Liberation Sans" font-size="12.5" fill="#c4c4c4" text-anchor="middle" letter-spacing="0.4"><text x="55.5" y="987">0 s</text><text x="230.4" y="987">4.5 ms</text><text x="405.3" y="987">9 ms</text><text x="580.1" y="987">13.5 ms</text><text x="755.0" y="987">18 ms</text><text x="929.9" y="987">22.5 ms</text><text x="1104.8" y="987">27 ms</text><text x="1279.7" y="987">31.5 ms</text><text x="1454.5" y="987">36 ms</text><text x="1629.4" y="987">40.5 ms</text></g>
<path d="M3.0 734.5 L52.0 734.5 L51.0 734.8 L48.1 735.5 L46.8 735.8 L50.6 734.7 L63.0 731.2 L64.1 730.9 L65.3 730.6 L66.5 730.3 L67.7 729.9 L69.1 729.5 L70.5 729.1 L71.9 728.7 L73.4 728.3 L74.9 727.9 L76.5 727.5 L78.1 727.0 L79.8 726.5 L81.5 726.0 L83.2 725.5 L85.0 725.0 L86.8 724.5 L88.7 724.0 L90.6 723.5 L92.6 722.9 L94.5 722.4 L96.6 721.8 L98.6 721.2 L100.7 720.6 L102.8 720.0 L104.9 719.4 L107.1 718.8 L109.2 718.2 L111.4 717.6 L113.7 717.0 L115.9 716.3 L118.2 715.7 L120.5 715.1 L122.8 714.4 L125.1 713.7 L127.4 713.1 L129.8 712.4 L132.1 711.8 L134.5 711.1 L136.8 710.4 L139.2 709.8 L141.6 709.1 L144.0 708.4 L146.4 707.7 L148.8 707.1 L151.2 706.4 L153.6 705.7 L156.0 705.0 L158.4 704.4 L160.8 703.7 L163.2 703.0 L165.6 702.4 L167.9 701.7 L170.3 701.0 L172.6 700.4 L175.0 699.7 L177.3 699.1 L179.6 698.4 L181.9 697.8 L184.2 697.1 L186.4 696.5 L188.7 695.9 L190.9 695.3 L193.1 694.7 L195.2 694.1 L197.4 693.5 L199.5 692.9 L201.6 692.3 L203.6 691.7 L205.6 691.1 L207.6 690.6 L209.6 690.0 L211.5 689.5 L213.4 689.0 L215.3 688.5 L217.1 688.0 L218.8 687.5 L220.6 687.0 L222.3 686.5 L223.9 686.1 L225.5 685.6 L227.0 685.2 L228.5 684.8 L230.0 684.4 L233.3 683.5 L236.4 682.6 L239.4 681.8 L242.1 681.1 L244.8 680.4 L247.3 679.7 L249.6 679.0 L251.9 678.4 L254.0 677.9 L256.0 677.3 L258.0 676.8 L259.8 676.3 L261.6 675.8 L263.3 675.4 L265.0 674.9 L266.5 674.5 L268.1 674.1 L269.6 673.7 L271.1 673.4 L272.6 673.0 L274.1 672.6 L275.6 672.2 L277.2 671.8 L278.7 671.5 L280.3 671.1 L281.9 670.7 L283.6 670.3 L285.3 669.8 L287.1 669.4 L289.0 668.9 L291.0 668.4 L293.1 667.9 L295.3 667.4 L297.6 666.8 L300.0 666.2 L301.7 665.8 L303.4 665.4 L305.2 665.0 L307.0 664.5 L308.8 664.1 L310.7 663.7 L312.6 663.2 L314.5 662.7 L316.5 662.3 L318.4 661.8 L320.4 661.3 L322.5 660.8 L324.5 660.3 L326.5 659.9 L328.6 659.4 L330.7 658.9 L332.8 658.4 L334.9 657.9 L337.1 657.4 L339.2 656.9 L341.4 656.4 L343.5 655.8 L345.7 655.3 L347.8 654.8 L350.0 654.3 L352.2 653.8 L354.4 653.3 L356.5 652.8 L358.7 652.3 L360.9 651.8 L363.0 651.3 L365.2 650.8 L367.4 650.3 L369.5 649.8 L371.6 649.3 L373.8 648.8 L375.9 648.3 L378.0 647.8 L380.0 647.3 L382.1 646.9 L384.1 646.4 L386.2 645.9 L388.2 645.5 L390.1 645.0 L392.1 644.6 L394.0 644.2 L395.9 643.7 L397.8 643.3 L399.7 642.9 L401.5 642.5 L403.3 642.1 L405.0 641.7 L407.4 641.2 L409.7 640.7 L412.0 640.2 L414.3 639.7 L416.5 639.2 L418.6 638.7 L420.7 638.3 L422.8 637.8 L424.8 637.4 L426.8 637.0 L428.7 636.6 L430.7 636.2 L432.6 635.8 L434.5 635.4 L436.3 635.0 L438.2 634.7 L440.0 634.3 L441.9 633.9 L443.7 633.5 L445.6 633.2 L447.4 632.8 L449.3 632.4 L451.1 632.1 L453.0 631.7 L454.9 631.3 L456.8 630.9 L458.7 630.5 L460.7 630.2 L462.7 629.8 L464.7 629.4 L466.7 628.9 L468.8 628.5 L471.0 628.1 L473.2 627.6 L475.4 627.2 L477.7 626.7 L480.0 626.2 L481.7 625.9 L483.5 625.5 L485.2 625.2 L486.9 624.8 L488.6 624.4 L490.4 624.1 L492.1 623.7 L493.8 623.3 L495.5 622.9 L497.2 622.6 L498.9 622.2 L500.6 621.8 L502.3 621.4 L504.1 621.0 L505.8 620.7 L507.5 620.3 L509.3 619.9 L511.0 619.5 L512.8 619.1 L514.6 618.7 L516.4 618.3 L518.2 617.9 L520.0 617.5 L521.9 617.1 L523.8 616.7 L525.6 616.3 L527.5 615.9 L529.5 615.5 L531.4 615.1 L533.4 614.6 L535.4 614.2 L537.4 613.8 L539.5 613.4 L541.6 612.9 L543.7 612.5 L545.9 612.1 L548.0 611.7 L550.3 611.2 L552.5 610.8 L554.8 610.3 L557.1 609.9 L559.5 609.5 L561.9 609.0 L564.4 608.6 L566.9 608.1 L569.4 607.6 L572.0 607.2 L574.6 606.7 L577.3 606.3 L580.0 605.8 L581.6 605.5 L583.2 605.3 L584.8 605.0 L586.5 604.7 L588.1 604.4 L589.8 604.1 L591.5 603.9 L593.3 603.6 L595.0 603.3 L596.7 603.0 L598.5 602.7 L600.3 602.4 L602.1 602.1 L603.9 601.8 L605.8 601.5 L607.6 601.2 L609.5 600.9 L611.3 600.6 L613.2 600.3 L615.1 600.0 L617.1 599.7 L619.0 599.4 L620.9 599.1 L622.9 598.8 L624.8 598.4 L626.8 598.1 L628.8 597.8 L630.8 597.5 L632.8 597.2 L634.8 596.9 L636.9 596.5 L638.9 596.2 L640.9 595.9 L643.0 595.6 L645.1 595.3 L647.1 594.9 L649.2 594.6 L651.3 594.3 L653.4 594.0 L655.5 593.7 L657.6 593.3 L659.7 593.0 L661.8 592.7 L663.9 592.4 L666.1 592.0 L668.2 591.7 L670.3 591.4 L672.5 591.1 L674.6 590.8 L676.7 590.4 L678.9 590.1 L681.0 589.8 L683.2 589.5 L685.3 589.2 L687.5 588.9 L689.7 588.5 L691.8 588.2 L694.0 587.9 L696.1 587.6 L698.3 587.3 L700.4 587.0 L702.6 586.7 L704.7 586.4 L706.9 586.1 L709.0 585.8 L711.2 585.5 L713.3 585.2 L715.5 584.9 L717.6 584.6 L719.7 584.3 L721.8 584.0 L724.0 583.7 L726.1 583.4 L728.2 583.1 L730.3 582.8 L732.4 582.5 L734.5 582.3 L736.6 582.0 L738.7 581.7 L740.7 581.4 L742.8 581.2 L744.9 580.9 L746.9 580.6 L748.9 580.4 L751.0 580.1 L753.0 579.9 L755.0 579.6 L757.0 579.3 L759.0 579.1 L761.0 578.8 L763.0 578.6 L765.0 578.4 L767.0 578.1 L769.0 577.9 L771.0 577.6 L773.0 577.4 L775.0 577.1 L777.0 576.9 L779.0 576.7 L781.0 576.4 L783.0 576.2 L785.0 575.9 L787.0 575.7 L789.0 575.5 L791.0 575.2 L793.0 575.0 L795.0 574.8 L797.0 574.5 L799.0 574.3 L801.0 574.1 L803.0 573.9 L805.0 573.6 L807.0 573.4 L809.0 573.2 L811.0 573.0 L813.0 572.8 L815.0 572.5 L817.0 572.3 L819.0 572.1 L821.0 571.9 L823.0 571.7 L825.0 571.5 L827.0 571.2 L829.0 571.0 L831.0 570.8 L833.0 570.6 L835.0 570.4 L837.0 570.2 L839.0 570.0 L841.0 569.8 L843.0 569.6 L845.0 569.4 L847.0 569.2 L849.0 569.0 L851.0 568.8 L853.0 568.6 L855.0 568.4 L857.0 568.2 L859.0 568.0 L861.0 567.8 L863.0 567.6 L865.0 567.4 L867.0 567.2 L869.0 567.0 L871.0 566.9 L873.0 566.7 L875.0 566.5 L877.0 566.3 L879.0 566.1 L881.0 565.9 L883.0 565.8 L885.0 565.6 L887.0 565.4 L889.0 565.2 L891.0 565.0 L893.0 564.9 L895.0 564.7 L897.0 564.5 L899.0 564.3 L901.0 564.2 L903.0 564.0 L905.0 563.8 L907.0 563.7 L909.0 563.5 L911.0 563.3 L913.0 563.2 L915.0 563.0 L917.0 562.8 L919.0 562.7 L921.0 562.5 L923.0 562.4 L925.0 562.2 L927.0 562.1 L929.0 561.9 L931.0 561.7 L933.0 561.6 L935.1 561.4 L937.1 561.3 L939.2 561.1 L941.3 561.0 L943.3 560.9 L945.4 560.7 L947.5 560.6 L949.6 560.4 L951.8 560.3 L953.9 560.1 L956.0 560.0 L958.2 559.9 L960.3 559.7 L962.5 559.6 L964.7 559.5 L966.8 559.3 L969.0 559.2 L971.2 559.1 L973.4 558.9 L975.5 558.8 L977.7 558.7 L979.9 558.6 L982.1 558.5 L984.3 558.3 L986.5 558.2 L988.7 558.1 L990.9 558.0 L993.1 557.9 L995.3 557.7 L997.5 557.6 L999.7 557.5 L1001.9 557.4 L1004.1 557.3 L1006.3 557.2 L1008.5 557.1 L1010.7 557.0 L1012.9 556.8 L1015.0 556.7 L1017.2 556.6 L1019.4 556.5 L1021.5 556.4 L1023.7 556.3 L1025.9 556.2 L1028.0 556.1 L1030.1 556.0 L1032.3 555.9 L1034.4 555.8 L1036.5 555.7 L1038.6 555.6 L1040.7 555.5 L1042.7 555.4 L1044.8 555.3 L1046.9 555.3 L1048.9 555.2 L1050.9 555.1 L1053.0 555.0 L1055.0 554.9 L1057.0 554.8 L1058.9 554.7 L1060.9 554.6 L1062.9 554.5 L1064.8 554.5 L1066.7 554.4 L1068.6 554.3 L1070.5 554.2 L1072.4 554.1 L1074.2 554.0 L1076.1 554.0 L1077.9 553.9 L1079.7 553.8 L1081.4 553.7 L1083.2 553.7 L1084.9 553.6 L1086.6 553.5 L1088.3 553.4 L1090.0 553.3 L1091.7 553.3 L1093.3 553.2 L1094.9 553.1 L1096.5 553.1 L1098.0 553.0 L1099.6 552.9 L1101.1 552.8 L1102.5 552.8 L1104.0 552.7 L1107.2 552.5 L1110.3 552.4 L1113.2 552.3 L1116.1 552.1 L1118.7 552.0 L1121.3 551.9 L1123.8 551.7 L1126.1 551.6 L1128.3 551.5 L1130.5 551.4 L1132.5 551.3 L1134.5 551.2 L1136.4 551.1 L1138.3 551.0 L1140.1 551.0 L1141.8 550.9 L1143.5 550.8 L1145.1 550.7 L1146.8 550.7 L1148.3 550.6 L1149.9 550.6 L1151.5 550.5 L1153.0 550.4 L1154.6 550.4 L1156.1 550.3 L1157.7 550.3 L1159.3 550.2 L1160.9 550.2 L1162.5 550.2 L1164.2 550.1 L1166.0 550.1 L1167.8 550.0 L1169.6 550.0 L1171.5 550.0 L1173.5 549.9 L1175.6 549.9 L1177.7 549.8 L1180.0 549.8 L1181.8 549.8 L1183.5 549.7 L1185.3 549.7 L1187.1 549.7 L1188.8 549.7 L1190.5 549.6 L1192.3 549.6 L1194.0 549.6 L1195.7 549.6 L1197.5 549.5 L1199.2 549.5 L1200.9 549.5 L1202.7 549.5 L1204.4 549.4 L1206.2 549.4 L1207.9 549.4 L1209.7 549.4 L1211.5 549.4 L1213.3 549.4 L1215.1 549.3 L1216.9 549.3 L1218.7 549.3 L1220.6 549.3 L1222.4 549.3 L1224.3 549.3 L1226.2 549.3 L1228.2 549.3 L1230.1 549.3 L1232.1 549.3 L1234.1 549.3 L1236.1 549.3 L1238.2 549.3 L1240.3 549.3 L1242.4 549.3 L1244.6 549.4 L1246.8 549.4 L1249.0 549.4 L1251.3 549.4 L1253.6 549.4 L1255.9 549.5 L1258.3 549.5 L1260.7 549.5 L1263.2 549.5 L1265.7 549.6 L1268.3 549.6 L1270.9 549.7 L1273.5 549.7 L1276.2 549.8 L1279.0 549.8 L1280.6 549.8 L1282.2 549.9 L1283.8 549.9 L1285.4 549.9 L1287.1 550.0 L1288.8 550.0 L1290.4 550.0 L1292.2 550.0 L1293.9 550.1 L1295.6 550.1 L1297.4 550.2 L1299.1 550.2 L1300.9 550.2 L1302.7 550.3 L1304.6 550.3 L1306.4 550.3 L1308.2 550.4 L1310.1 550.4 L1312.0 550.5 L1313.9 550.5 L1315.8 550.5 L1317.7 550.6 L1319.6 550.6 L1321.5 550.7 L1323.5 550.7 L1325.5 550.8 L1327.4 550.8 L1329.4 550.8 L1331.4 550.9 L1333.4 550.9 L1335.4 551.0 L1337.4 551.0 L1339.5 551.1 L1341.5 551.1 L1343.6 551.2 L1345.6 551.2 L1347.7 551.3 L1349.8 551.3 L1351.8 551.4 L1353.9 551.4 L1356.0 551.5 L1358.1 551.6 L1360.2 551.6 L1362.3 551.7 L1364.4 551.7 L1366.5 551.8 L1368.7 551.8 L1370.8 551.9 L1372.9 552.0 L1375.0 552.0 L1377.2 552.1 L1379.3 552.1 L1381.4 552.2 L1383.6 552.3 L1385.7 552.3 L1387.9 552.4 L1390.0 552.5 L1392.1 552.5 L1394.3 552.6 L1396.4 552.7 L1398.6 552.7 L1400.7 552.8 L1402.9 552.9 L1405.0 552.9 L1407.1 553.0 L1409.3 553.1 L1411.4 553.2 L1413.5 553.2 L1415.7 553.3 L1417.8 553.4 L1419.9 553.5 L1422.0 553.5 L1424.1 553.6 L1426.2 553.7 L1428.3 553.8 L1430.4 553.9 L1432.5 553.9 L1434.6 554.0 L1436.7 554.1 L1438.7 554.2 L1440.8 554.3 L1442.9 554.4 L1444.9 554.4 L1446.9 554.5 L1449.0 554.6 L1451.0 554.7 L1453.0 554.8 L1455.0 554.9 L1457.0 555.0 L1459.1 555.1 L1461.2 555.2 L1463.3 555.3 L1465.4 555.4 L1467.5 555.5 L1469.6 555.6 L1471.7 555.7 L1473.9 555.8 L1476.1 555.9 L1478.3 556.0 L1480.5 556.1 L1482.7 556.3 L1484.9 556.4 L1487.1 556.5 L1489.3 556.6 L1491.6 556.7 L1493.8 556.9 L1496.1 557.0 L1498.3 557.1 L1500.6 557.3 L1502.9 557.4 L1505.1 557.5 L1507.4 557.6 L1509.7 557.8 L1512.0 557.9 L1514.3 558.0 L1516.6 558.2 L1518.8 558.3 L1521.1 558.4 L1523.4 558.6 L1525.7 558.7 L1528.0 558.9 L1530.2 559.0 L1532.5 559.1 L1534.8 559.3 L1537.1 559.4 L1539.3 559.6 L1541.6 559.7 L1543.8 559.8 L1546.0 560.0 L1548.3 560.1 L1550.5 560.3 L1552.7 560.4 L1554.9 560.5 L1557.1 560.7 L1559.3 560.8 L1561.4 561.0 L1563.6 561.1 L1565.7 561.2 L1567.8 561.4 L1569.9 561.5 L1572.0 561.6 L1574.1 561.8 L1576.2 561.9 L1578.2 562.0 L1580.2 562.2 L1582.2 562.3 L1584.2 562.4 L1586.2 562.6 L1588.1 562.7 L1590.0 562.8 L1591.9 563.0 L1593.8 563.1 L1595.7 563.2 L1597.5 563.3 L1599.3 563.4 L1601.1 563.6 L1602.8 563.7 L1604.6 563.8 L1606.3 563.9 L1607.9 564.0 L1609.6 564.1 L1611.2 564.3 L1612.8 564.4 L1614.3 564.5 L1615.8 564.6 L1617.3 564.7 L1618.8 564.8 L1620.2 564.9 L1621.6 565.0 L1622.9 565.1 L1624.3 565.1 L1625.5 565.2 L1626.8 565.3 L1628.0 565.4 L1633.8 565.8 L1638.4 566.2 L1642.0 566.5 L1644.7 566.7 L1646.6 566.9 L1647.9 567.1 L1648.8 567.3 L1649.3 567.5 L1649.7 567.6 L1650.0 567.7 L1650.5 567.9 L1651.3 568.1 L1652.5 568.2 L1654.2 568.5 L1656.7 568.7 L1660.0 569.0 L1661.4 569.1 L1662.9 569.2 L1664.5 569.4 L1666.2 569.5 L1667.9 569.6 L1669.8 569.8 L1671.7 569.9 L1673.7 570.1 L1675.7 570.2 L1677.8 570.4 L1680.0 570.5 L1682.2 570.7 L1684.4 570.9 L1686.7 571.0 L1689.0 571.2 L1691.4 571.4 L1693.8 571.5 L1696.1 571.7 L1698.5 571.9 L1701.0 572.0 L1703.4 572.2 L1705.8 572.4 L1708.2 572.6 L1710.6 572.7 L1713.0 572.9 L1715.4 573.1 L1717.7 573.2 L1720.0 573.4 L1722.3 573.6 L1724.5 573.7 L1726.7 573.9 L1728.9 574.0 L1730.9 574.2 L1733.0 574.3 L1734.9 574.4 L1736.8 574.6 L1738.7 574.7 L1740.4 574.8 L1742.1 574.9 L1743.6 575.0 L1745.1 575.2 L1746.5 575.2 L1747.8 575.3 L1748.9 575.4 L1750.0 575.5" fill="none" stroke="#f28c28" stroke-width="1.25" shape-rendering="crispEdges"/>
<path d="M3.0 429.7 L6.0 430.2 L9.0 430.0 L12.0 429.6 L15.0 429.7 L18.0 430.4 L21.0 429.7 L24.0 430.0 L27.0 430.0 L30.0 430.3 L33.0 429.9 L36.0 429.8 L39.0 429.9 L42.0 429.7 L45.0 429.9 L48.0 429.8 L51.0 429.6 L54.0 429.9 L57.0 429.9 L60.0 429.8 L63.0 430.4 L66.0 429.8 L69.0 429.9 L72.0 429.7 L75.0 430.2 L78.0 430.0 L81.0 429.8 L84.0 429.9 L87.0 430.3 L90.0 430.0 L93.0 430.0 L96.0 430.3 L99.0 430.3 L102.0 429.9 L105.0 429.9 L108.0 429.6 L111.0 429.8 L114.0 429.8 L117.0 429.9 L120.0 430.1 L123.0 430.3 L126.0 429.6 L129.0 430.3 L132.0 429.7 L135.0 430.1 L138.0 429.6 L141.0 430.1 L144.0 429.7 L147.0 429.8 L150.0 429.9 L153.0 430.3 L156.0 429.7 L159.0 430.1 L162.0 430.1 L165.0 430.2 L168.0 429.8 L171.0 430.0 L174.0 430.0 L177.0 430.0 L180.0 429.8 L183.0 430.0 L186.0 430.0 L189.0 430.0 L192.0 430.0 L195.0 429.6 L198.0 430.0 L199.3 429.2 L201.1 428.1 L203.2 426.9 L205.6 425.5 L208.0 424.0 L210.5 422.5 L212.9 421.0 L215.0 419.6 L217.2 418.0 L219.3 416.4 L221.3 414.8 L223.3 413.2 L225.4 411.6 L227.6 410.2 L230.0 409.0 L231.8 408.3 L233.8 407.6 L235.8 406.9 L237.9 406.4 L240.0 405.9 L242.1 405.4 L244.2 405.0 L246.2 404.6 L248.2 404.3 L250.0 404.0 L252.3 403.7 L254.4 403.4 L256.3 403.3 L258.1 403.3 L260.1 403.3 L262.4 403.4 L265.0 403.5 L266.7 403.6 L268.5 403.7 L270.4 403.9 L272.4 404.1 L274.5 404.3 L276.6 404.5 L278.7 404.7 L280.9 404.9 L283.2 405.2 L285.4 405.5 L287.7 405.7 L290.0 406.0 L291.9 406.2 L293.7 406.5 L295.7 406.7 L297.6 407.0 L299.6 407.3 L301.6 407.6 L303.7 407.9 L305.7 408.2 L307.8 408.5 L309.8 408.7 L311.9 409.0 L313.9 409.3 L316.0 409.5 L318.0 409.8 L320.0 410.0 L322.0 410.2 L324.0 410.4 L326.0 410.6 L328.0 410.8 L330.0 411.0 L332.0 411.2 L334.0 411.3 L336.0 411.5 L338.0 411.6 L340.0 411.8 L342.0 411.9 L344.0 412.0 L346.0 412.1 L348.0 412.2 L350.0 412.3 L351.9 412.4 L353.6 412.4 L355.2 412.5 L356.7 412.5 L358.1 412.5 L359.6 412.5 L361.1 412.5 L362.7 412.5 L364.4 412.5 L366.3 412.5 L368.4 412.5 L370.8 412.4 L373.5 412.4 L376.5 412.3 L380.0 412.3 L381.4 412.3 L382.9 412.3 L384.4 412.2 L386.1 412.2 L387.7 412.2 L389.5 412.2 L391.3 412.2 L393.1 412.1 L395.0 412.1 L397.0 412.1 L398.9 412.0 L401.0 412.0 L403.0 412.0 L405.1 412.0 L407.2 411.9 L409.4 411.9 L411.5 411.9 L413.7 411.8 L415.9 411.8 L418.1 411.8 L420.3 411.7 L422.6 411.7 L424.8 411.6 L427.0 411.6 L429.3 411.6 L431.5 411.5 L433.7 411.5 L435.9 411.5 L438.1 411.4 L440.2 411.4 L442.4 411.3 L444.5 411.3 L446.6 411.3 L448.6 411.2 L450.6 411.2 L452.6 411.2 L454.5 411.1 L456.4 411.1 L458.2 411.0 L460.0 411.0 L462.3 410.9 L464.6 410.9 L466.8 410.8 L469.0 410.8 L471.2 410.7 L473.3 410.7 L475.4 410.6 L477.4 410.6 L479.5 410.5 L481.5 410.4 L483.5 410.4 L485.4 410.3 L487.4 410.3 L489.3 410.2 L491.2 410.1 L493.2 410.1 L495.1 410.0 L497.0 409.9 L498.9 409.9 L500.7 409.8 L502.6 409.8 L504.5 409.7 L506.4 409.7 L508.3 409.6 L510.2 409.5 L512.2 409.5 L514.1 409.4 L516.0 409.4 L518.0 409.3 L520.0 409.3 L521.9 409.3 L523.7 409.2 L525.3 409.2 L526.8 409.1 L528.1 409.1 L529.4 409.1 L530.7 409.0 L531.8 409.0 L533.0 408.9 L534.1 408.9 L535.2 408.9 L536.3 408.8 L537.5 408.8 L538.7 408.8 L540.0 408.8 L541.4 408.7 L542.9 408.7 L544.5 408.7 L546.2 408.6 L548.1 408.6 L550.2 408.6 L552.5 408.5 L555.0 408.5 L557.8 408.5 L560.7 408.5 L564.0 408.4 L567.5 408.4 L571.4 408.4 L575.5 408.3 L580.0 408.3 L581.3 408.3 L582.6 408.3 L583.9 408.3 L585.3 408.3 L586.7 408.3 L588.1 408.2 L589.6 408.2 L591.0 408.2 L592.5 408.2 L594.1 408.2 L595.6 408.2 L597.2 408.2 L598.8 408.2 L600.4 408.1 L602.0 408.1 L603.7 408.1 L605.4 408.1 L607.1 408.1 L608.8 408.1 L610.5 408.1 L612.3 408.1 L614.1 408.0 L615.9 408.0 L617.7 408.0 L619.5 408.0 L621.4 408.0 L623.3 408.0 L625.2 408.0 L627.1 408.0 L629.0 407.9 L630.9 407.9 L632.9 407.9 L634.9 407.9 L636.9 407.9 L638.9 407.9 L640.9 407.9 L642.9 407.8 L644.9 407.8 L647.0 407.8 L649.1 407.8 L651.1 407.8 L653.2 407.8 L655.3 407.8 L657.4 407.7 L659.6 407.7 L661.7 407.7 L663.8 407.7 L666.0 407.7 L668.1 407.7 L670.3 407.7 L672.5 407.6 L674.7 407.6 L676.9 407.6 L679.0 407.6 L681.2 407.6 L683.5 407.6 L685.7 407.6 L687.9 407.6 L690.1 407.5 L692.3 407.5 L694.6 407.5 L696.8 407.5 L699.0 407.5 L701.3 407.5 L703.5 407.5 L705.8 407.5 L708.0 407.5 L710.2 407.4 L712.5 407.4 L714.7 407.4 L717.0 407.4 L719.2 407.4 L721.5 407.4 L723.7 407.4 L726.0 407.4 L728.2 407.4 L730.4 407.4 L732.7 407.3 L734.9 407.3 L737.1 407.3 L739.3 407.3 L741.6 407.3 L743.8 407.3 L746.0 407.3 L748.2 407.3 L750.4 407.3 L752.5 407.3 L754.7 407.3 L756.9 407.3 L759.1 407.3 L761.2 407.3 L763.4 407.3 L765.5 407.3 L767.6 407.3 L769.7 407.3 L771.8 407.3 L773.9 407.3 L776.0 407.3 L778.1 407.3 L780.2 407.3 L782.2 407.3 L784.2 407.3 L786.3 407.3 L788.3 407.3 L790.3 407.3 L792.2 407.3 L794.2 407.3 L796.1 407.3 L798.1 407.3 L800.0 407.3 L802.1 407.3 L804.2 407.3 L806.4 407.3 L808.5 407.3 L810.6 407.3 L812.8 407.4 L815.0 407.4 L817.1 407.4 L819.3 407.4 L821.5 407.4 L823.7 407.4 L825.9 407.4 L828.2 407.4 L830.4 407.5 L832.6 407.5 L834.8 407.5 L837.1 407.5 L839.3 407.5 L841.6 407.6 L843.8 407.6 L846.1 407.6 L848.4 407.6 L850.6 407.6 L852.9 407.7 L855.2 407.7 L857.4 407.7 L859.7 407.7 L862.0 407.7 L864.2 407.8 L866.5 407.8 L868.8 407.8 L871.1 407.8 L873.3 407.9 L875.6 407.9 L877.8 407.9 L880.1 407.9 L882.4 408.0 L884.6 408.0 L886.9 408.0 L889.1 408.0 L891.4 408.1 L893.6 408.1 L895.8 408.1 L898.1 408.2 L900.3 408.2 L902.5 408.2 L904.7 408.2 L906.9 408.3 L909.1 408.3 L911.2 408.3 L913.4 408.4 L915.6 408.4 L917.7 408.4 L919.9 408.4 L922.0 408.5 L924.1 408.5 L926.2 408.5 L928.3 408.6 L930.4 408.6 L932.5 408.6 L934.5 408.6 L936.6 408.7 L938.6 408.7 L940.6 408.7 L942.6 408.8 L944.6 408.8 L946.6 408.8 L948.5 408.8 L950.5 408.9 L952.4 408.9 L954.3 408.9 L956.2 409.0 L958.0 409.0 L959.9 409.0 L961.7 409.0 L963.5 409.1 L965.3 409.1 L967.1 409.1 L968.8 409.1 L970.6 409.2 L972.3 409.2 L973.9 409.2 L975.6 409.2 L977.2 409.3 L978.9 409.3 L980.5 409.3 L982.0 409.3 L983.6 409.4 L985.1 409.4 L986.6 409.4 L988.0 409.4 L989.5 409.5 L990.9 409.5 L992.3 409.5 L993.6 409.5 L995.0 409.5 L996.3 409.5 L997.5 409.6 L998.8 409.6 L1000.0 409.6 L1005.6 409.7 L1010.5 409.8 L1014.8 409.8 L1018.5 409.9 L1021.6 409.9 L1024.2 410.0 L1026.4 410.1 L1028.2 410.1 L1029.7 410.2 L1030.9 410.2 L1031.9 410.2 L1032.8 410.3 L1033.5 410.3 L1034.1 410.4 L1034.8 410.4 L1035.5 410.4 L1036.3 410.5 L1037.3 410.5 L1038.5 410.6 L1040.0 410.6 L1042.6 410.7 L1044.8 410.7 L1046.9 410.8 L1048.8 410.9 L1050.6 410.9 L1052.3 411.0 L1054.1 411.1 L1055.9 411.1 L1057.8 411.2 L1060.0 411.2 L1062.3 411.2 L1065.0 411.2 L1066.7 411.3 L1068.6 411.3 L1070.6 411.3 L1072.7 411.3 L1074.9 411.2 L1077.2 411.2 L1079.6 411.2 L1082.0 411.2 L1084.4 411.2 L1086.9 411.2 L1089.3 411.2 L1091.6 411.1 L1093.9 411.1 L1096.2 411.1 L1098.3 411.1 L1100.3 411.1 L1102.2 411.0 L1104.0 411.0 L1105.5 411.0 L1106.9 411.0 L1108.0 411.0 L1112.0 410.0 L1113.0 405.0 L1114.0 395.2 L1117.0 395.5 L1118.4 397.0 L1120.3 399.1 L1122.6 401.7 L1125.0 404.3 L1127.6 406.8 L1130.0 409.0 L1132.0 410.6 L1134.1 412.1 L1136.3 413.6 L1138.5 414.9 L1140.7 416.2 L1142.8 417.4 L1145.0 418.5 L1147.1 419.5 L1149.1 420.4 L1151.2 421.2 L1153.2 421.9 L1155.3 422.6 L1157.6 423.2 L1160.0 423.8 L1161.8 424.1 L1163.7 424.4 L1165.6 424.7 L1167.6 425.0 L1169.7 425.2 L1171.8 425.4 L1173.8 425.6 L1175.9 425.8 L1178.0 426.0 L1180.0 426.2 L1182.0 426.5 L1184.1 426.7 L1186.3 426.9 L1188.4 427.1 L1190.5 427.4 L1192.6 427.6 L1194.6 427.8 L1196.5 428.0 L1198.3 428.1 L1200.0 428.3 L1201.6 428.5 L1201.8 428.8 L1201.8 429.0 L1202.7 429.1 L1205.7 429.3 L1212.0 429.4 L1213.2 429.4 L1214.5 429.4 L1215.9 429.4 L1217.5 429.5 L1219.1 429.5 L1220.8 429.5 L1222.7 429.5 L1224.6 429.5 L1226.5 429.5 L1228.6 429.5 L1230.7 429.5 L1232.9 429.5 L1235.1 429.5 L1237.4 429.5 L1239.7 429.5 L1242.1 429.5 L1244.5 429.6 L1246.9 429.6 L1249.4 429.6 L1251.8 429.6 L1254.3 429.6 L1256.8 429.6 L1259.2 429.6 L1261.7 429.6 L1264.1 429.6 L1266.5 429.6 L1268.9 429.6 L1271.3 429.6 L1273.6 429.6 L1275.9 429.6 L1278.1 429.6 L1280.3 429.6 L1282.4 429.6 L1284.5 429.6 L1286.4 429.6 L1288.3 429.6 L1290.1 429.6 L1291.9 429.6 L1293.5 429.6 L1295.0 429.6 L1296.4 429.6 L1297.7 429.6 L1298.9 429.6 L1300.0 429.6 L1303.0 429.8 L1306.1 429.4 L1309.1 430.2 L1312.1 429.8 L1315.2 429.0 L1318.2 429.8 L1321.2 429.4 L1324.2 429.6 L1327.3 430.1 L1330.3 429.9 L1333.3 429.4 L1336.4 429.4 L1339.4 429.6 L1342.4 429.3 L1345.5 429.5 L1348.5 430.0 L1351.5 430.0 L1354.5 429.6 L1357.6 429.6 L1360.6 429.8 L1363.6 429.4 L1366.7 429.4 L1369.7 429.8 L1372.7 429.0 L1375.8 430.1 L1378.8 429.1 L1381.8 429.0 L1384.8 430.1 L1387.9 429.8 L1390.9 430.1 L1393.9 429.7 L1397.0 429.8 L1400.0 429.8 L1403.0 429.8 L1406.0 429.9 L1409.0 429.2 L1412.0 429.9 L1415.0 429.8 L1418.0 430.0 L1421.0 429.7 L1424.0 429.4 L1427.0 429.4 L1430.0 429.8 L1433.0 429.1 L1436.0 429.1 L1439.0 430.0 L1442.0 430.1 L1445.0 429.0 L1448.0 429.7 L1451.0 430.2 L1454.0 429.5 L1457.0 429.8 L1460.0 429.2 L1463.0 429.9 L1466.0 430.2 L1469.0 430.1 L1472.0 429.1 L1475.0 429.3 L1478.0 429.3 L1481.0 430.0 L1484.0 430.1 L1487.0 429.2 L1490.0 429.9 L1493.0 430.2 L1496.0 430.2 L1499.0 428.1 L1502.0 430.0 L1505.0 429.4 L1508.0 429.3 L1511.0 429.6 L1514.0 429.5 L1517.0 429.6 L1520.0 429.2 L1523.0 429.5 L1526.0 429.8 L1529.0 429.5 L1532.0 430.2 L1535.0 429.8 L1538.0 429.2 L1541.0 429.9 L1544.0 429.5 L1547.0 430.3 L1550.0 429.8 L1553.0 429.6 L1556.0 429.5 L1559.0 429.8 L1562.0 430.1 L1565.0 429.1 L1568.0 429.6 L1571.0 430.1 L1574.0 429.1 L1577.0 430.1 L1580.0 429.8 L1583.0 430.1 L1586.0 429.9 L1589.0 429.5 L1592.0 429.8 L1595.0 429.4 L1598.0 430.2 L1601.0 429.8 L1604.0 429.7 L1607.0 429.4 L1610.0 430.1 L1613.0 429.2 L1616.0 430.0 L1619.0 429.8 L1622.0 430.2 L1625.0 429.7 L1628.0 429.4 L1631.0 429.3 L1634.0 429.6 L1637.0 429.6 L1640.0 429.3 L1643.0 430.3 L1646.0 429.3 L1649.0 430.1 L1652.0 429.9 L1655.0 429.7 L1658.0 430.3 L1661.0 429.7 L1664.0 429.5 L1667.0 429.7 L1670.0 430.1 L1673.0 430.3 L1676.0 429.2 L1679.0 429.4 L1682.0 429.2 L1685.0 430.2 L1688.0 430.3 L1691.0 429.2 L1694.0 429.6 L1697.0 430.3 L1700.0 429.8 L1703.0 430.3 L1706.0 429.6 L1709.0 429.4 L1712.0 430.4 L1715.0 429.2 L1718.0 429.6 L1721.0 430.3 L1724.0 429.2 L1727.0 430.0 L1730.0 430.4 L1733.0 429.4 L1736.0 430.3 L1739.0 429.6 L1742.0 430.1 L1745.0 429.6 L1748.0 429.3 L1751.0 429.4" fill="none" stroke="#80d02a" stroke-width="1.25" shape-rendering="crispEdges"/>
<path d="M3.0 965.0 L95.0 965.0 L130.0 963.3 L195.0 963.3 L195.6 961.3 L200.0 958.3 L201.3 957.9 L202.7 957.4 L204.4 956.9 L206.2 956.5 L208.1 956.0 L210.2 955.5 L212.3 954.9 L214.5 954.4 L216.8 953.8 L219.1 953.3 L221.3 952.7 L223.6 952.0 L225.8 951.4 L227.9 950.7 L230.0 949.5 L232.0 948.6 L233.9 948.1 L235.8 948.3 L237.7 947.4 L239.6 946.5 L241.5 945.0 L243.4 944.7 L245.3 943.4 L247.3 942.0 L249.3 941.3 L251.3 939.9 L253.4 938.8 L255.5 938.6 L257.7 938.1 L260.0 936.6 L261.8 935.7 L263.6 935.1 L265.5 934.7 L267.4 934.5 L269.3 933.9 L271.3 933.1 L273.3 931.5 L275.3 930.9 L277.3 930.1 L279.4 930.5 L281.4 929.7 L283.5 928.1 L285.6 927.1 L287.7 926.8 L289.8 925.7 L291.8 925.5 L293.9 924.4 L296.0 924.5 L298.0 923.8 L300.0 922.9 L302.0 922.2 L303.9 922.6 L305.8 921.3 L307.6 920.6 L309.4 920.7 L311.2 919.9 L313.0 920.1 L314.8 919.5 L316.6 918.4 L318.4 918.4 L320.3 917.5 L322.2 917.5 L324.2 917.7 L326.2 916.1 L328.2 916.2 L330.4 915.4 L332.6 915.6 L335.0 914.1 L337.4 912.8 L340.0 913.2 L341.7 912.3 L343.4 912.8 L345.1 911.7 L346.9 911.3 L348.8 910.3 L350.6 911.1 L352.5 909.9 L354.5 907.0 L356.5 908.5 L358.5 907.7 L360.5 908.2 L362.5 906.6 L364.6 904.7 L366.7 906.1 L368.8 905.7 L370.9 905.4 L373.1 903.6 L375.2 903.7 L377.4 902.8 L379.5 902.4 L381.7 902.0 L383.8 900.8 L386.0 901.1 L388.2 900.6 L390.3 899.4 L392.5 899.5 L394.6 898.3 L396.7 898.2 L398.8 896.9 L400.9 896.7 L403.0 896.7 L405.0 896.1 L407.0 894.6 L409.1 895.3 L411.1 893.8 L413.1 893.8 L415.1 893.2 L417.1 892.5 L419.1 891.4 L421.1 892.2 L423.1 891.7 L425.1 891.0 L427.1 890.6 L429.2 889.7 L431.2 889.3 L433.2 888.6 L435.2 888.2 L437.2 887.6 L439.2 887.7 L441.2 886.3 L443.2 885.5 L445.3 886.2 L447.3 884.8 L449.3 884.7 L451.4 883.6 L453.4 883.4 L455.4 882.9 L457.5 882.2 L459.6 882.7 L461.6 881.9 L463.7 880.9 L465.8 880.8 L467.9 880.6 L470.0 879.7 L471.9 879.2 L473.9 879.0 L475.9 878.1 L477.9 878.9 L480.0 878.1 L482.1 877.3 L484.2 876.9 L486.3 876.3 L488.4 876.9 L490.5 875.4 L492.6 875.5 L494.8 874.7 L496.9 875.5 L499.1 874.0 L501.2 873.9 L503.4 873.9 L505.5 873.8 L507.6 873.3 L509.7 873.0 L511.8 872.7 L513.9 872.5 L516.0 870.1 L518.0 871.3 L520.0 871.5 L522.0 870.4 L524.0 870.7 L525.9 869.7 L527.8 869.4 L529.7 868.9 L531.5 868.9 L533.3 868.3 L535.1 868.7 L536.8 867.8 L538.4 867.3 L540.0 867.4 L542.7 866.2 L545.2 866.1 L547.6 866.3 L549.9 865.0 L552.1 865.5 L554.2 864.7 L556.2 864.8 L558.2 863.9 L560.0 863.5 L561.9 863.3 L563.7 862.5 L565.4 862.2 L567.2 862.3 L568.9 861.1 L570.7 861.1 L572.5 861.0 L574.3 861.2 L576.1 860.0 L578.0 860.4 L580.0 859.3 L581.9 858.4 L583.6 859.2 L585.1 858.2 L586.5 858.4 L587.8 858.1 L589.0 857.9 L590.2 856.6 L591.4 856.8 L592.7 856.1 L594.1 856.4 L595.5 855.6 L597.2 855.7 L599.0 854.9 L601.0 854.3 L603.3 853.3 L605.9 853.9 L608.9 852.9 L612.2 851.9 L615.9 850.7 L620.0 850.0 L621.3 849.8 L622.7 848.8 L624.2 849.4 L625.6 848.1 L627.2 848.3 L628.7 848.0 L630.4 844.9 L632.0 846.8 L633.7 846.4 L635.5 845.9 L637.3 846.3 L639.1 845.1 L641.0 844.7 L642.9 844.9 L644.8 844.5 L646.8 843.5 L648.7 842.2 L650.8 842.9 L652.8 842.4 L654.9 841.0 L657.0 841.4 L659.1 840.9 L661.2 839.6 L663.4 838.8 L665.6 839.1 L667.8 838.5 L670.0 837.1 L672.2 836.5 L674.5 836.1 L676.7 835.3 L679.0 835.1 L681.3 834.1 L683.5 834.6 L685.8 833.2 L688.1 832.7 L690.4 831.8 L692.7 831.6 L695.0 831.6 L697.3 830.4 L699.6 829.6 L701.9 830.1 L704.1 828.5 L706.4 828.8 L708.7 828.6 L710.9 828.0 L713.2 826.4 L715.4 825.8 L717.6 825.4 L719.8 825.4 L722.0 824.4 L724.2 823.8 L726.3 823.2 L728.4 823.3 L730.5 823.1 L732.6 822.5 L734.6 821.5 L736.7 820.7 L738.6 821.3 L740.6 820.6 L742.5 820.1 L744.4 819.6 L746.3 818.5 L748.1 818.4 L749.9 818.7 L751.6 817.9 L753.3 818.0 L755.0 817.8 L757.6 814.8 L760.2 816.5 L762.7 815.7 L765.1 815.6 L767.6 815.4 L770.0 814.6 L772.3 813.5 L774.7 814.0 L777.0 812.6 L779.2 812.4 L781.5 812.2 L783.7 811.5 L785.8 812.0 L788.0 812.0 L790.1 811.5 L792.2 810.9 L794.2 808.4 L796.2 810.8 L798.2 809.5 L800.2 810.0 L802.2 809.3 L804.1 809.8 L806.0 809.7 L807.9 808.3 L809.8 808.5 L811.7 808.9 L813.5 807.7 L815.4 807.9 L817.2 808.1 L819.0 808.1 L820.8 807.4 L822.6 807.5 L824.3 807.0 L826.1 806.3 L827.9 805.9 L829.6 806.8 L831.3 806.2 L833.1 806.1 L834.8 805.4 L836.5 805.3 L838.3 804.8 L840.0 804.5 L842.4 804.9 L844.8 804.0 L847.2 803.9 L849.5 803.4 L851.8 803.9 L854.1 803.1 L856.4 803.1 L858.6 802.7 L860.8 802.3 L863.0 801.7 L865.2 801.9 L867.3 800.8 L869.4 800.4 L871.5 800.2 L873.5 800.5 L875.5 799.4 L877.5 799.6 L879.4 798.9 L881.3 798.5 L883.2 799.2 L885.1 798.9 L886.9 798.5 L888.6 798.1 L890.4 797.5 L892.1 797.0 L893.7 797.7 L895.4 797.9 L897.0 796.7 L898.5 794.4 L900.0 797.2 L902.9 795.9 L905.4 796.5 L907.5 795.4 L909.3 796.1 L910.9 795.2 L912.4 795.8 L913.8 795.0 L915.3 794.9 L916.8 794.6 L918.6 795.0 L920.6 795.2 L922.9 795.2 L925.7 794.5 L929.0 793.8 L930.5 794.3 L932.1 794.4 L933.7 794.0 L935.5 793.4 L937.3 793.8 L939.2 791.9 L941.2 794.1 L943.2 793.4 L945.3 793.7 L947.4 793.2 L949.6 793.1 L951.8 793.6 L954.1 792.5 L956.3 792.8 L958.6 792.6 L961.0 792.1 L963.3 792.5 L965.6 793.0 L967.9 793.0 L970.2 792.4 L972.5 791.5 L974.8 792.2 L977.1 792.0 L979.3 791.8 L981.5 791.4 L983.6 791.6 L985.7 791.7 L987.8 790.8 L989.7 791.1 L991.6 791.0 L993.5 791.2 L995.2 790.4 L996.9 791.4 L998.5 790.2 L1000.0 790.4 L1003.1 790.5 L1005.9 790.3 L1008.3 789.7 L1010.4 789.3 L1012.3 789.8 L1014.0 789.3 L1015.6 789.2 L1017.1 789.1 L1018.5 789.3 L1020.0 789.4 L1021.6 788.1 L1023.4 788.3 L1025.3 789.0 L1027.5 788.7 L1030.0 788.7 L1031.6 787.9 L1033.4 787.6 L1035.2 787.9 L1037.1 788.6 L1039.0 788.9 L1041.1 788.9 L1043.1 789.0 L1045.2 788.0 L1047.4 788.3 L1049.5 788.9 L1051.7 788.2 L1053.9 789.1 L1056.1 789.1 L1058.3 789.1 L1060.5 789.1 L1062.6 788.6 L1064.8 789.4 L1066.9 788.9 L1068.9 789.9 L1071.0 788.7 L1072.9 790.0 L1074.8 789.8 L1076.6 790.1 L1078.4 789.4 L1080.0 790.1 L1082.6 790.6 L1085.2 789.7 L1087.8 790.1 L1090.2 791.4 L1092.6 790.5 L1094.9 791.8 L1097.1 791.5 L1099.2 791.4 L1101.1 792.0 L1103.0 792.5 L1104.7 792.4 L1106.2 793.4 L1107.7 792.4 L1108.9 793.2 L1110.0 793.3 L1111.0 791.0 L1112.0 783.3 L1113.0 840.0 L1114.0 896.7 L1115.6 911.1 L1118.0 920.0 L1119.8 925.2 L1122.0 929.4 L1125.0 933.3 L1126.8 935.1 L1128.8 936.9 L1131.1 938.7 L1133.5 940.5 L1135.8 942.1 L1138.0 943.7 L1140.0 945.0 L1142.0 946.6 L1143.4 947.9 L1144.8 949.0 L1146.8 950.0 L1150.0 950.7 L1151.3 950.9 L1152.6 951.1 L1153.9 951.2 L1155.3 951.3 L1156.7 951.4 L1158.2 951.5 L1159.8 951.6 L1161.5 951.6 L1163.4 951.6 L1165.6 951.7 L1167.9 951.7 L1170.5 951.7 L1173.3 951.7 L1176.5 951.7 L1180.0 951.7 L1181.4 951.7 L1182.8 951.7 L1184.2 951.7 L1185.7 951.7 L1187.2 951.7 L1188.7 951.7 L1190.3 951.7 L1191.8 951.7 L1193.4 951.7 L1195.1 951.7 L1196.7 951.7 L1198.4 951.7 L1200.2 951.6 L1201.9 951.6 L1203.7 951.6 L1205.5 951.6 L1207.4 951.6 L1209.3 951.6 L1211.2 951.6 L1213.1 951.5 L1215.1 951.5 L1217.1 951.5 L1219.2 951.5 L1221.3 951.5 L1223.4 951.4 L1225.6 951.4 L1227.8 951.4 L1230.0 951.4 L1232.3 951.3 L1234.6 951.3 L1237.0 951.3 L1239.4 951.3 L1241.8 951.2 L1244.3 951.2 L1246.8 951.2 L1249.3 951.1 L1251.9 951.1 L1254.6 951.1 L1257.3 951.0 L1260.0 951.0 L1261.6 951.0 L1263.2 951.0 L1264.8 950.9 L1266.4 950.9 L1268.1 950.9 L1269.8 950.9 L1271.5 950.9 L1273.2 950.8 L1274.9 950.8 L1276.7 950.8 L1278.4 950.8 L1280.2 950.7 L1282.0 950.7 L1283.8 950.7 L1285.7 950.7 L1287.5 950.6 L1289.4 950.6 L1291.3 950.6 L1293.1 950.6 L1295.0 950.5 L1297.0 950.5 L1298.9 950.5 L1300.8 950.5 L1302.8 950.4 L1304.8 950.4 L1306.7 950.4 L1308.7 950.3 L1310.7 950.3 L1312.7 950.3 L1314.8 950.3 L1316.8 950.2 L1318.8 950.2 L1320.9 950.2 L1322.9 950.1 L1325.0 950.1 L1327.1 950.1 L1329.2 950.1 L1331.2 950.0 L1333.3 950.0 L1335.5 950.0 L1337.6 949.9 L1339.7 949.9 L1341.8 949.9 L1343.9 949.8 L1346.1 949.8 L1348.2 949.8 L1350.3 949.7 L1352.5 949.7 L1354.6 949.7 L1356.8 949.6 L1358.9 949.6 L1361.1 949.6 L1363.3 949.5 L1365.4 949.5 L1367.6 949.5 L1369.8 949.5 L1371.9 949.4 L1374.1 949.4 L1376.3 949.4 L1378.4 949.3 L1380.6 949.3 L1382.8 949.3 L1384.9 949.2 L1387.1 949.2 L1389.2 949.2 L1391.4 949.1 L1393.6 949.1 L1395.7 949.1 L1397.9 949.0 L1400.0 949.0 L1401.9 949.0 L1403.8 948.9 L1405.6 948.9 L1407.5 948.9 L1409.4 948.9 L1411.3 948.8 L1413.2 948.8 L1415.1 948.8 L1416.9 948.7 L1418.8 948.7 L1420.7 948.7 L1422.6 948.7 L1424.5 948.6 L1426.4 948.6 L1428.3 948.6 L1430.2 948.5 L1432.1 948.5 L1434.1 948.5 L1436.0 948.5 L1437.9 948.4 L1439.8 948.4 L1441.7 948.4 L1443.7 948.3 L1445.6 948.3 L1447.5 948.3 L1449.4 948.2 L1451.4 948.2 L1453.3 948.2 L1455.3 948.2 L1457.2 948.1 L1459.2 948.1 L1461.1 948.1 L1463.1 948.0 L1465.0 948.0 L1467.0 948.0 L1469.0 947.9 L1470.9 947.9 L1472.9 947.9 L1474.9 947.8 L1476.9 947.8 L1478.9 947.8 L1480.9 947.8 L1482.8 947.7 L1484.8 947.7 L1486.8 947.7 L1488.9 947.6 L1490.9 947.6 L1492.9 947.6 L1494.9 947.5 L1496.9 947.5 L1499.0 947.5 L1501.0 947.4 L1503.0 947.4 L1505.1 947.4 L1507.1 947.3 L1509.2 947.3 L1511.2 947.3 L1513.3 947.2 L1515.4 947.2 L1517.4 947.2 L1519.5 947.1 L1521.6 947.1 L1523.7 947.1 L1525.8 947.0 L1527.9 947.0 L1530.0 947.0 L1532.1 946.9 L1534.2 946.9 L1536.3 946.9 L1538.4 946.8 L1540.6 946.8 L1542.7 946.8 L1544.8 946.7 L1547.0 946.7 L1549.1 946.7 L1551.3 946.6 L1553.5 946.6 L1555.6 946.6 L1557.8 946.5 L1560.0 946.5 L1561.9 946.5 L1563.7 946.4 L1565.6 946.4 L1567.6 946.4 L1569.5 946.3 L1571.5 946.3 L1573.5 946.3 L1575.6 946.3 L1577.6 946.2 L1579.7 946.2 L1581.8 946.1 L1583.9 946.1 L1586.0 946.1 L1588.2 946.0 L1590.3 946.0 L1592.5 946.0 L1594.7 945.9 L1596.9 945.9 L1599.1 945.9 L1601.4 945.8 L1603.6 945.8 L1605.9 945.8 L1608.1 945.7 L1610.4 945.7 L1612.7 945.6 L1615.0 945.6 L1617.3 945.6 L1619.6 945.5 L1621.9 945.5 L1624.3 945.5 L1626.6 945.4 L1628.9 945.4 L1631.3 945.3 L1633.6 945.3 L1635.9 945.3 L1638.3 945.2 L1640.6 945.2 L1643.0 945.2 L1645.3 945.1 L1647.6 945.1 L1650.0 945.0 L1652.3 945.0 L1654.6 945.0 L1656.9 944.9 L1659.3 944.9 L1661.6 944.9 L1663.9 944.8 L1666.1 944.8 L1668.4 944.7 L1670.7 944.7 L1673.0 944.7 L1675.2 944.6 L1677.4 944.6 L1679.7 944.6 L1681.9 944.5 L1684.1 944.5 L1686.2 944.4 L1688.4 944.4 L1690.5 944.4 L1692.7 944.3 L1694.8 944.3 L1696.9 944.3 L1698.9 944.2 L1701.0 944.2 L1703.0 944.2 L1705.0 944.1 L1707.0 944.1 L1709.0 944.1 L1710.9 944.0 L1712.8 944.0 L1714.7 944.0 L1716.5 943.9 L1718.4 943.9 L1720.2 943.9 L1721.9 943.9 L1723.7 943.8 L1725.4 943.8 L1727.1 943.8 L1728.7 943.7 L1730.3 943.7 L1731.9 943.7 L1733.4 943.7 L1735.0 943.6 L1736.4 943.6 L1737.9 943.6 L1739.3 943.6 L1740.6 943.6 L1741.9 943.5 L1743.2 943.5 L1744.4 943.5 L1745.6 943.5 L1746.8 943.5 L1747.9 943.4 L1749.0 943.4 L1750.0 943.4" fill="none" stroke="#7a36a0" stroke-width="1.25" shape-rendering="crispEdges"/>
<path d="M3.0 265.5 L55.0 265.5 L56.0 262.0 L57.0 267.0 L59.0 259.0 L60.0 266.0 L62.0 256.0 L63.0 268.0 L64.0 255.0 L66.0 256.0 L68.0 252.0 L69.5 250.6 L71.8 248.4 L75.0 246.0 L76.7 244.9 L78.6 243.6 L80.6 242.2 L82.8 240.9 L85.1 239.5 L87.5 238.2 L90.0 237.0 L91.8 236.2 L93.8 235.4 L95.8 234.7 L97.9 233.9 L100.0 233.2 L102.1 232.5 L104.2 231.8 L106.2 231.2 L108.2 230.6 L110.0 230.0 L112.2 229.3 L114.1 228.7 L115.7 228.2 L117.4 227.7 L119.4 227.2 L121.9 226.7 L125.0 226.0 L126.6 225.7 L128.3 225.3 L130.2 225.0 L132.2 224.6 L134.3 224.2 L136.5 223.8 L138.7 223.4 L141.0 223.0 L143.3 222.6 L145.7 222.2 L147.9 221.8 L150.2 221.4 L152.4 221.0 L154.5 220.6 L156.4 220.3 L158.3 220.0 L160.0 219.7 L162.6 219.3 L165.0 218.9 L167.3 218.6 L169.3 218.3 L171.2 218.0 L173.1 217.8 L174.8 217.6 L176.6 217.4 L178.3 217.2 L180.0 217.0 L182.5 216.7 L185.1 216.4 L187.6 216.2 L189.9 216.0 L192.0 215.8 L193.7 215.6 L195.0 215.5 L197.5 216.2 L200.0 217.0 L202.5 219.5 L205.0 222.0 L207.5 223.5 L210.0 225.0 L212.0 225.6 L214.0 226.1 L216.0 226.7 L218.0 227.2 L220.0 227.8 L222.0 228.4 L224.0 228.9 L226.0 229.5 L228.0 230.0 L230.0 230.6 L232.0 231.3 L234.0 232.0 L236.0 232.7 L238.0 233.4 L240.0 234.1 L242.0 234.7 L244.0 235.4 L246.0 236.1 L248.0 236.8 L250.0 237.5 L252.0 237.6 L254.0 237.7 L256.0 237.3 L258.0 238.3 L260.0 238.1 L262.0 237.0 L264.0 237.0 L266.0 237.2 L268.0 238.2 L270.0 237.5 L272.0 238.9 L274.0 238.8 L276.0 236.0 L278.0 238.1 L280.0 237.7 L282.0 239.5 L284.0 238.9 L286.0 238.4 L288.0 237.7 L290.0 238.1 L292.0 238.7 L294.0 239.1 L296.0 238.4 L298.0 239.5 L300.0 239.2 L302.0 240.0 L304.0 238.4 L306.0 237.9 L308.0 239.6 L310.0 235.9 L312.0 239.6 L314.0 239.8 L316.0 239.3 L318.0 239.0 L320.0 239.7 L322.0 238.7 L324.0 237.6 L326.0 239.1 L328.0 239.6 L330.0 238.4 L332.0 237.4 L334.0 237.8 L336.0 237.5 L338.0 237.7 L340.0 238.3 L342.0 237.5 L344.0 238.7 L346.0 239.4 L348.0 237.9 L350.0 238.1 L352.0 239.7 L354.0 237.6 L356.0 237.7 L358.0 238.7 L360.0 237.1 L362.0 238.0 L364.0 239.5 L366.0 238.4 L368.0 238.8 L370.0 239.3 L372.0 239.3 L374.0 238.0 L376.0 237.2 L378.0 237.1 L380.0 237.4 L382.0 237.8 L384.0 236.9 L386.0 237.1 L388.0 236.9 L390.0 238.4 L392.0 237.4 L394.0 237.7 L396.0 238.9 L398.0 237.9 L400.0 236.9 L402.0 237.6 L404.0 238.8 L406.0 236.7 L408.0 238.0 L410.0 235.6 L412.0 239.1 L414.0 238.4 L416.0 237.5 L418.0 238.5 L420.0 238.5 L422.0 237.1 L424.0 239.0 L426.0 238.5 L428.0 238.3 L430.0 237.7 L432.0 235.2 L434.0 237.0 L436.0 238.8 L438.0 238.8 L440.0 238.8 L442.0 236.9 L444.0 236.8 L446.0 237.9 L448.0 238.4 L450.0 237.9 L452.0 236.4 L454.0 238.5 L456.0 238.1 L458.0 236.6 L460.0 237.0 L462.0 238.6 L464.0 237.1 L466.0 237.9 L468.0 236.4 L470.0 238.4 L472.0 236.4 L474.0 238.5 L476.0 236.9 L478.0 231.9 L480.0 237.6 L482.0 238.3 L484.0 238.1 L486.0 236.4 L488.0 236.6 L490.0 237.3 L492.0 236.9 L494.0 238.1 L496.0 236.9 L498.0 238.1 L500.0 238.1 L502.0 237.0 L504.0 235.6 L506.0 232.4 L508.0 235.9 L510.0 237.3 L512.0 236.2 L514.0 236.7 L516.0 235.5 L518.0 235.8 L520.0 237.1 L522.0 236.5 L524.0 237.3 L526.0 236.5 L528.0 236.2 L530.0 235.9 L532.0 235.9 L534.0 236.5 L536.0 237.0 L538.0 236.0 L540.0 236.6 L542.0 234.7 L544.0 234.5 L546.0 234.5 L548.0 236.2 L550.0 234.5 L552.0 235.8 L554.0 236.3 L556.0 234.5 L558.0 234.9 L560.0 236.4 L562.0 234.2 L564.0 235.0 L566.0 234.1 L568.0 233.0 L570.0 233.2 L572.0 235.1 L574.0 233.6 L576.0 235.4 L578.0 233.5 L580.0 233.3 L582.0 234.0 L584.0 234.4 L586.0 235.6 L588.0 233.9 L590.0 235.1 L592.0 233.9 L594.0 235.5 L596.0 234.0 L598.0 235.5 L600.0 234.2 L602.0 234.2 L604.0 235.3 L606.0 235.6 L608.0 234.9 L610.0 235.7 L612.0 234.7 L614.0 234.6 L616.0 235.4 L618.0 236.6 L620.0 236.0 L622.0 234.6 L624.0 234.9 L626.0 236.4 L628.0 236.2 L630.0 235.4 L632.0 236.3 L634.0 237.4 L636.0 236.6 L638.0 237.9 L640.0 237.6 L642.0 237.2 L644.0 236.5 L646.0 236.0 L648.0 237.7 L650.0 236.2 L652.0 238.1 L654.0 237.7 L656.0 236.7 L658.0 237.3 L660.0 237.4 L662.0 238.8 L664.0 237.8 L666.0 238.9 L668.0 235.7 L670.0 237.8 L672.0 237.2 L674.0 236.7 L676.0 237.0 L678.0 235.6 L680.0 237.6 L682.0 238.4 L684.0 238.8 L686.0 239.5 L688.0 238.1 L690.0 237.7 L692.0 235.3 L694.0 239.8 L696.0 239.5 L698.0 238.0 L700.0 239.0 L702.0 240.0 L703.9 239.6 L705.9 240.1 L707.9 238.5 L709.8 239.6 L711.8 241.1 L713.8 240.7 L715.7 241.0 L717.7 239.5 L719.6 241.6 L721.6 241.3 L723.6 240.2 L725.5 240.9 L727.5 241.1 L729.5 241.2 L731.4 243.4 L733.4 242.0 L735.4 243.0 L737.3 243.0 L739.3 241.8 L741.2 242.5 L743.2 242.8 L745.2 242.3 L747.1 243.1 L749.1 244.4 L751.1 243.6 L753.0 244.2 L755.0 243.5 L757.0 243.7 L759.1 243.5 L761.1 245.3 L763.2 244.3 L765.2 243.6 L767.3 243.6 L769.3 243.4 L771.4 245.5 L773.4 245.1 L775.5 245.3 L777.5 243.6 L779.5 244.2 L781.6 244.2 L783.6 243.7 L785.7 243.8 L787.7 241.6 L789.8 245.0 L791.8 245.2 L793.9 245.1 L795.9 243.7 L798.0 245.3 L800.0 243.6 L802.0 243.0 L804.0 245.0 L806.0 245.3 L808.0 243.6 L810.0 243.4 L812.0 245.5 L814.0 245.2 L816.0 245.5 L818.0 244.6 L820.0 243.3 L822.0 244.4 L824.0 245.0 L826.0 243.5 L828.0 243.7 L830.0 244.3 L832.0 245.4 L834.0 244.2 L836.0 244.4 L838.0 244.7 L840.0 244.1 L842.0 246.1 L844.0 244.4 L846.0 246.4 L848.0 244.3 L850.0 244.2 L852.0 244.2 L854.0 244.7 L856.0 246.4 L858.0 245.2 L860.0 245.6 L862.0 245.1 L864.0 245.0 L866.0 244.7 L868.0 246.0 L870.0 245.0 L872.0 245.1 L874.0 245.7 L876.0 246.8 L878.0 241.5 L880.0 247.0 L882.0 244.5 L884.0 247.2 L886.0 247.1 L888.0 245.5 L890.0 245.4 L892.0 246.8 L894.0 246.9 L896.0 247.1 L898.0 243.1 L900.0 245.8 L902.0 246.9 L904.0 245.6 L906.0 246.9 L908.0 245.6 L910.0 246.7 L912.0 246.3 L914.0 245.5 L916.0 246.6 L918.0 247.1 L920.0 246.6 L922.0 246.1 L924.0 247.3 L926.0 245.5 L928.0 247.2 L930.0 246.2 L932.0 247.9 L934.0 245.6 L936.0 246.7 L938.0 246.1 L940.0 247.5 L942.0 246.2 L944.0 246.5 L946.0 246.3 L948.0 247.7 L950.0 248.2 L952.0 246.2 L954.0 246.8 L956.0 248.2 L958.0 246.8 L960.0 248.3 L962.0 246.0 L964.0 246.9 L966.0 248.2 L968.0 248.5 L970.0 246.8 L972.0 248.4 L974.0 246.0 L976.0 246.9 L978.0 246.8 L980.0 246.0 L982.0 246.9 L984.0 246.4 L986.0 246.6 L988.0 248.2 L990.0 245.1 L992.0 247.1 L994.0 246.6 L996.0 246.6 L998.0 248.3 L1000.0 246.0 L1002.0 248.6 L1004.0 248.2 L1006.0 247.2 L1008.0 248.8 L1010.0 247.0 L1012.0 247.2 L1014.0 246.4 L1016.0 248.8 L1018.0 247.8 L1020.0 247.7 L1022.0 249.0 L1024.0 247.2 L1026.0 247.8 L1028.0 247.0 L1030.0 248.5 L1032.0 248.6 L1034.0 247.5 L1036.0 247.6 L1038.0 246.9 L1040.0 248.7 L1042.0 244.4 L1044.0 247.6 L1046.0 249.1 L1048.0 247.5 L1050.0 247.1 L1052.0 248.7 L1054.0 247.5 L1056.0 248.5 L1058.0 248.9 L1060.0 248.7 L1062.0 249.2 L1064.0 248.5 L1066.0 248.9 L1068.0 247.7 L1070.0 247.5 L1072.0 248.6 L1074.0 248.2 L1076.0 248.5 L1078.0 249.3 L1080.0 249.8 L1081.9 248.1 L1083.8 248.6 L1085.6 246.2 L1087.5 246.0 L1089.4 247.9 L1091.2 247.4 L1093.1 246.8 L1095.0 244.9 L1097.2 246.1 L1099.3 244.6 L1101.5 243.8 L1103.7 243.2 L1105.8 242.6 L1108.0 242.0 L1110.0 241.0 L1111.0 244.0 L1112.0 264.0 L1113.0 159.0 L1113.5 58.0 L1117.0 58.0 L1118.0 63.0 L1119.6 74.6 L1122.0 91.7 L1123.9 105.5 L1125.9 121.0 L1128.0 136.5 L1130.0 151.8 L1132.0 167.0 L1134.0 181.0 L1136.0 193.4 L1138.0 204.5 L1140.0 214.0 L1141.9 221.4 L1143.8 227.0 L1146.0 232.0 L1148.0 235.4 L1150.2 238.4 L1152.6 241.0 L1155.0 243.4 L1156.9 245.2 L1158.7 246.9 L1160.6 248.4 L1162.7 249.8 L1165.0 251.0 L1166.8 251.8 L1168.6 252.5 L1170.6 253.1 L1172.6 253.6 L1174.8 254.1 L1177.3 254.6 L1180.0 255.0 L1181.8 255.2 L1183.7 255.4 L1185.7 255.6 L1187.9 255.7 L1190.1 255.8 L1192.4 255.9 L1194.6 256.0 L1196.9 256.1 L1199.1 256.2 L1201.2 256.4 L1203.2 256.5 L1205.0 256.7 L1207.4 257.0 L1209.3 257.5 L1211.0 257.9 L1212.7 258.4 L1214.4 258.8 L1216.5 259.2 L1218.9 259.5 L1222.0 259.7 L1223.6 259.7 L1225.3 259.8 L1227.2 259.8 L1229.3 259.7 L1231.5 259.7 L1233.7 259.6 L1236.1 259.6 L1238.5 259.5 L1240.9 259.4 L1243.3 259.3 L1245.6 259.3 L1247.9 259.2 L1250.1 259.1 L1252.2 259.0 L1254.1 258.9 L1255.9 258.8 L1257.5 258.8 L1258.9 258.7 L1260.0 258.7 L1262.1 258.5 L1264.2 258.4 L1266.2 258.6 L1268.3 258.9 L1270.4 258.4 L1272.5 259.0 L1274.6 258.7 L1276.7 259.2 L1278.8 258.5 L1280.8 258.9 L1282.9 259.1 L1285.0 258.7 L1287.0 259.5 L1289.0 260.0 L1291.0 260.6 L1293.0 261.3 L1295.0 262.3 L1297.1 261.9 L1299.2 262.2 L1301.4 261.6 L1303.5 261.9 L1305.6 261.9 L1307.8 262.0 L1309.9 261.6 L1312.0 262.1 L1314.0 260.9 L1316.0 260.4 L1318.0 259.5 L1320.0 259.8 L1322.1 259.5 L1324.1 260.1 L1326.2 259.6 L1328.2 260.2 L1330.3 259.8 L1332.3 260.2 L1334.4 260.2 L1336.4 260.2 L1338.5 260.1 L1340.5 259.8 L1342.5 260.2 L1344.6 259.7 L1346.6 259.9 L1348.7 259.6 L1350.7 260.1 L1352.8 259.5 L1354.8 260.2 L1356.9 260.3 L1358.9 260.1 L1361.0 260.1 L1363.0 259.9 L1365.0 260.5 L1367.0 261.2 L1369.0 261.4 L1371.1 261.8 L1373.2 262.0 L1375.3 261.8 L1377.4 261.8 L1379.5 261.5 L1381.6 261.4 L1383.7 261.8 L1385.8 261.9 L1387.9 262.0 L1390.0 261.8 L1392.0 261.2 L1394.0 261.1 L1396.0 260.4 L1398.0 259.8 L1400.0 258.7 L1402.0 259.0 L1404.0 259.3 L1406.0 259.2 L1408.0 258.5 L1410.0 259.2 L1412.0 259.3 L1414.0 259.2 L1416.0 258.9 L1418.0 258.6 L1420.0 258.9 L1422.0 258.4 L1424.0 258.5 L1426.0 259.0 L1428.0 258.5 L1430.0 258.4 L1432.0 258.9 L1434.0 259.1 L1436.0 258.8 L1438.0 258.4 L1440.0 258.8 L1442.0 259.3 L1444.0 259.8 L1446.0 259.5 L1448.0 259.9 L1450.0 260.5 L1452.1 260.6 L1454.1 260.4 L1456.2 260.4 L1458.2 260.1 L1460.3 260.0 L1462.4 260.2 L1464.4 260.7 L1466.5 260.1 L1468.6 259.3 L1470.6 259.9 L1472.7 260.1 L1474.8 260.4 L1476.8 260.4 L1478.9 260.0 L1480.9 260.1 L1483.0 259.9 L1485.0 260.0 L1487.0 259.0 L1489.0 258.1 L1491.0 258.6 L1493.0 258.6 L1495.0 258.9 L1497.0 258.3 L1499.0 258.1 L1501.0 258.4 L1503.0 258.1 L1505.0 258.1 L1507.0 258.9 L1509.0 258.9 L1511.0 259.8 L1513.0 260.7 L1515.0 260.8 L1517.0 260.6 L1519.0 261.3 L1521.0 260.6 L1523.0 261.2 L1525.0 261.2 L1527.0 260.8 L1529.0 260.8 L1531.0 260.9 L1533.0 261.2 L1535.0 261.2 L1537.0 261.0 L1539.0 261.3 L1541.0 260.8 L1543.0 261.4 L1545.0 261.0 L1547.0 260.8 L1549.0 261.4 L1551.0 260.8 L1553.0 260.8 L1555.0 261.4 L1557.0 260.7 L1559.0 260.4 L1561.0 259.8 L1562.9 259.8 L1564.9 259.7 L1566.8 259.3 L1568.7 259.6 L1570.6 259.9 L1572.6 259.1 L1574.5 259.9 L1576.4 259.2 L1578.4 259.1 L1580.3 259.6 L1582.2 259.7 L1584.1 259.6 L1586.1 259.8 L1588.0 259.9 L1589.8 260.2 L1591.5 260.6 L1593.2 260.4 L1595.0 260.6 L1597.5 260.5 L1600.0 259.8 L1602.0 259.3 L1604.0 259.1 L1606.0 259.2 L1608.0 259.4 L1610.0 259.3 L1612.0 259.7 L1614.0 259.3 L1616.0 259.5 L1618.0 259.6 L1620.0 259.4 L1622.0 259.7 L1624.0 259.7 L1626.0 259.7 L1628.0 260.0 L1630.0 260.2 L1632.0 261.4 L1634.0 261.1 L1636.0 262.0 L1638.0 261.7 L1640.0 261.9 L1641.9 261.8 L1643.9 261.8 L1645.9 262.2 L1647.9 261.7 L1649.9 261.7 L1651.9 262.2 L1653.8 262.2 L1655.8 262.0 L1657.8 262.4 L1659.8 262.4 L1661.8 261.8 L1663.8 262.4 L1665.7 262.0 L1667.7 261.8 L1669.7 262.1 L1671.7 262.3 L1673.7 262.0 L1675.7 261.8 L1677.6 262.3 L1679.6 261.8 L1681.6 262.4 L1683.6 261.8 L1685.6 262.5 L1687.6 261.9 L1689.5 262.3 L1691.5 261.8 L1693.5 261.9 L1695.5 262.2 L1697.5 262.0 L1699.4 262.6 L1701.4 261.8 L1703.4 261.8 L1705.4 262.6 L1707.4 262.4 L1709.4 261.9 L1711.3 261.8 L1713.3 262.1 L1715.3 262.1 L1717.3 262.4 L1719.3 262.3 L1721.3 261.9 L1723.2 262.1 L1725.2 262.6 L1727.2 262.3 L1729.2 262.2 L1731.2 262.4 L1733.2 262.5 L1735.1 262.6 L1737.1 262.4 L1739.1 262.1 L1741.1 261.9 L1743.1 262.5 L1745.1 262.4 L1747.0 262.2 L1749.0 262.4 L1751.0 262.5" fill="none" stroke="#f2ee1e" stroke-width="1.25" shape-rendering="crispEdges"/>
<!-- magnifier corner -->
<path d="M1710 65H1741Q1744 65 1744 68V99Z" fill="#555"/>
<circle cx="1737" cy="71.5" r="4.2" fill="none" stroke="#a0a0a0" stroke-width="1.9"/>
<path d="M1728.3 80.3L1733.6 75" stroke="#a0a0a0" stroke-width="3" stroke-linecap="round"/>
<!-- trigger marker -->
<path d="M45 58H65L55.3 67.5Z" fill="#f7921e"/>
<path d="M46 69H64V88H59L55.3 95L51.5 88H46Z" fill="#000" stroke="#f7921e" stroke-width="2"/>
<path d="M50.7 73H59.5V75H56.6V84H54.2V75H50.7Z" fill="#f7921e"/>
<!-- channel labels -->
<path d="M8 162H77L83 174.5L77 187H8Q6.5 187 6.5 185.5V163.5Q6.5 162 8 162Z" fill="#1e1c08" stroke="#ece43a" stroke-width="2"/>
<path d="M33 162V187" stroke="#ece43a" stroke-width="2"/>
<text x="20" y="179" font-family="Liberation Sans" font-size="12.5" fill="#ece43a" text-anchor="middle">C 1</text>
<text x="57" y="179" font-family="Liberation Sans" font-size="12.5" fill="#ece43a" text-anchor="middle">20 V</text>
<text x="102" y="179" font-family="Liberation Sans" font-size="19" fill="#ece43a" letter-spacing="0.4">U_loop,coil</text>
<path d="M8 396H77L83 408.5L77 421H8Q6.5 421 6.5 419.5V397.5Q6.5 396 8 396Z" fill="#141c08" stroke="#8acb3a" stroke-width="2"/>
<path d="M33 396V421" stroke="#8acb3a" stroke-width="2"/>
<text x="20" y="413" font-family="Liberation Sans" font-size="12.5" fill="#8acb3a" text-anchor="middle">C 4</text>
<text x="57.5" y="412.5" font-family="Liberation Sans" font-size="11.5" fill="#8acb3a" text-anchor="middle" textLength="40" lengthAdjust="spacingAndGlyphs">200 mV</text>
<text x="102" y="413" font-family="Liberation Sans" font-size="19" fill="#8acb3a" letter-spacing="0.4">U_Photod</text>
<path d="M9 722.5H34L42 735L34 747.5H9Q6.5 747.5 6.5 745V725Q6.5 722.5 9 722.5Z" fill="#2a1806" stroke="#ee8c2a" stroke-width="1.5"/>
<text x="22" y="740" font-family="Liberation Sans" font-size="12" fill="#ee8c2a" text-anchor="middle">M 1</text>
<path d="M42 735H55" stroke="#ee8c2a" stroke-width="1.5"/>
<text x="53" y="741" font-family="Liberation Sans" font-size="18" fill="#ee8c2a">B_t</text>
<path d="M9 952.5H34L42 965L34 977.5H9Q6 977.5 6 975V955Q6 952.5 9 952.5Z" fill="#7a3a9e"/>
<text x="22" y="970" font-family="Liberation Sans" font-size="12.5" fill="#fff" text-anchor="middle">M 2</text>
<text x="53" y="971" font-family="Liberation Sans" font-size="18" fill="#7a3a9e">I_p</text>
</g>
</svg>
<!-- right panel -->
<div class="abs" style="left:1769px;top:29px;width:160px;height:967px;border:1px solid #5e5852;border-left-color:#666;background:#2d2d2d"></div>
<svg class="abs" style="left:1780px;top:0" width="140" height="30">
<text x="6" y="25.7" font-family="Liberation Sans" font-weight="bold" font-size="31" fill="#fff" stroke="#fff" stroke-width="0.9" textLength="27.9" lengthAdjust="spacingAndGlyphs">Te</text>
<text x="59.6" y="25.7" font-family="Liberation Sans" font-weight="bold" font-size="31" fill="#fff" stroke="#fff" stroke-width="0.9" textLength="63.3" lengthAdjust="spacingAndGlyphs">ronix</text>
<rect x="35.3" y="4.2" width="4.8" height="21.5" fill="#fff"/>
<path d="M35 25.7H40L50.8 9.2H45.8Z" fill="#1ec4e4"/>
<path d="M42.8 25.7H50L45.6 17.6Z" fill="#fff"/>
<path d="M50.8 9.2L55.6 4.2H56.1V9.2H57.3V15H56.1V25.7H51.4V15H50.8Z" fill="#fff"/>
</svg>
<div class="abs" style="left:1769px;top:30px;width:152px;text-align:center;font-weight:bold;font-size:15px;color:#e6e6e6;letter-spacing:0.8px">Add New...</div>
<div class="btn" style="left:1778px;top:54px;width:63px;height:37px;font-size:15px">Cursors</div>
<div class="btn" style="left:1850px;top:54px;width:63px;height:37px;font-size:15px">Callout</div>
<div class="btn" style="left:1778px;top:100px;width:63px;height:37px;font-size:15px">Measure</div>
<div class="btn" style="left:1850px;top:100px;width:63px;height:37px;font-size:15px">Search</div>
<div class="btn" style="left:1778px;top:146px;width:63px;height:37px;font-size:15px">Results<br>Table</div>
<div class="btn" style="left:1850px;top:146px;width:63px;height:37px;font-size:15px">Plot</div>
<div class="abs" style="left:1773px;top:189px;width:143px;height:1px;background:#4e4a45"></div>
<div class="btn" style="left:1778px;top:196px;width:63px;height:37px">
<svg class="abs" style="left:-1px;top:-1px" width="63" height="37"><g fill="#c8c8c8"><rect x="18" y="5" width="2.4" height="2.4"/><rect x="24" y="5" width="4" height="2.2"/><rect x="31" y="5" width="4" height="2.2"/><rect x="40" y="5" width="2.4" height="2.4"/><rect x="18" y="11" width="2.2" height="3.5"/><rect x="18" y="17" width="2.2" height="3.5"/><rect x="40" y="11" width="2.2" height="3.5"/><rect x="40" y="17" width="2.2" height="3.5"/><rect x="18" y="24" width="2.4" height="2.4"/><rect x="24" y="24.2" width="4" height="2.2"/><rect x="31" y="24.2" width="4" height="2.2"/></g><circle cx="33" cy="14.8" r="4.4" fill="none" stroke="#c8c8c8" stroke-width="1.6"/><path d="M29.8 18L25.8 21.8" stroke="#c8c8c8" stroke-width="2.6" stroke-linecap="round"/><path d="M37 21.3L45 26.5L41.5 27L44 30.5L42 31.5L39.8 28L37.6 30Z" fill="#c8c8c8"/></svg></div>
<div class="btn" style="left:1850px;top:196px;width:63px;height:37px;font-size:15px">More...</div>
<div class="abs" style="left:1773px;top:241px;width:143px;height:1px;background:#4e4a45"></div>
<!-- drag handle -->
<div class="abs" style="left:1760px;top:501px;width:4px;height:4px;border-radius:2px;background:#bbb"></div>
<div class="abs" style="left:1760px;top:510px;width:4px;height:4px;border-radius:2px;background:#bbb"></div>
<div class="abs" style="left:1760px;top:519px;width:4px;height:4px;border-radius:2px;background:#bbb"></div>
<!-- bottom badges -->
<div class="badge" style="left:3px;top:1003px;width:90px;height:75px;background:#d2d2d2"><div class="bh" style="background-color:#4a4520;color:#f0ea3a">Ch 1</div><div class="bl" style="top:18.5px">5 V/div</div><div class="bl" style="top:37.5px">1 MΩ</div><div class="bl" style="top:56.5px">200 kHz</div><div class="bw">B<sub>w</sub></div></div>
<div class="badge" style="left:98px;top:1003px;width:90px;height:75px;background:#8a8a8a;color:#383838"><div class="bh" style="background-color:#268282;color:#1e1e1e">Ch 2</div><div class="bl" style="top:18.5px">250 mV/div</div><div class="bl" style="top:37.5px">1 MΩ</div><div class="bl" style="top:56.5px">200 kHz</div><div class="bw">B<sub>w</sub></div></div>
<div class="badge" style="left:193px;top:1003px;width:90px;height:75px;background:#8a8a8a;color:#383838"><div class="bh" style="background-color:#8a3644;color:#d89aa0">Ch 3</div><div class="bl" style="top:18.5px">450 mV/div</div><div class="bl" style="top:37.5px">1 MΩ</div><div class="bl" style="top:56.5px">200 kHz</div><div class="bw">B<sub>w</sub></div></div>
<div class="badge" style="left:288px;top:1003px;width:90px;height:75px;background:#d2d2d2"><div class="bh" style="background-color:#38421e;color:#92d23c">Ch 4</div><div class="bl" style="top:18.5px">200 mV/div</div><div class="bl" style="top:37.5px">1 MΩ</div><div class="bl" style="top:56.5px">200 kHz</div><div class="bw">B<sub>w</sub></div></div>
<div class="badge" style="left:383px;top:1003px;width:90px;height:75px;background:#d2d2d2"><div class="bh" style="background-color:#4a3420;color:#f0922a">Math 1</div><div class="bl" style="top:18.5px">73.2 mT/div</div><div class="bl" style="top:37.5px">Intg(Ch2)…</div></div>
<div class="badge" style="left:478px;top:1003px;width:90px;height:75px;background:#d2d2d2"><div class="bh" style="background-color:#6e2e98;color:#ffffff">Math 2</div><div class="bl" style="top:18.5px">992.65 A/div</div><div class="bl" style="top:37.5px">-Intg(Ch3…</div></div>
<div class="sq" style="left:1023px;top:999px;width:40px;height:80px"><div class="abs" style="left:3.5px;top:6.8px;width:31.5px;height:2.5px;background:#f7921e"></div><div class="abs" style="left:0;top:33px;width:38px;text-align:center;font-size:18px;color:#e6e6e6">5</div></div>
<div class="sq" style="left:1068px;top:999px;width:40px;height:80px"><div class="abs" style="left:3.5px;top:6.8px;width:31.5px;height:2.5px;background:#2828c8"></div><div class="abs" style="left:0;top:33px;width:38px;text-align:center;font-size:18px;color:#e6e6e6">6</div></div>
<div class="abs" style="left:1118px;top:1000px;width:1px;height:78px;background:#4a4a4a"></div>
<div class="sq" style="left:1129px;top:999px;width:40px;height:80px"><div class="abs" style="left:3.5px;top:6.8px;width:31.5px;height:2.5px;background:#b0202a"></div><div class="abs" style="left:0;top:20px;width:38px;text-align:center;font-size:15px;line-height:16px;color:#e6e6e6">Add<br>New<br>Math</div></div>
<div class="sq" style="left:1174px;top:999px;width:40px;height:80px"><div class="abs" style="left:3.5px;top:6.8px;width:31.5px;height:2.5px;background:#c8c8c8"></div><div class="abs" style="left:0;top:20px;width:38px;text-align:center;font-size:15px;line-height:16px;color:#e6e6e6">Add<br>New<br>Ref</div></div>
<div class="sq" style="left:1219px;top:999px;width:40px;height:80px"><div class="abs" style="left:3.5px;top:6.8px;width:31.5px;height:2.5px;background:#b050e0"></div><div class="abs" style="left:0;top:20px;width:38px;text-align:center;font-size:15px;line-height:16px;color:#e6e6e6">Add<br>New<br>Bus</div></div>
<div class="abs" style="left:1269px;top:1000px;width:1px;height:78px;background:#4a4a4a"></div>
<div class="badge" style="left:1281px;top:1004px;width:198px;height:75px;background:#d2d2d2">
<div class="bh" style="background-color:#595959;color:#f0f0f0;font-size:16px;letter-spacing:0.35px">Horizontal</div>
<div class="bl" style="top:18px;left:4px">4.5 ms/div</div><div class="bl" style="top:18px;left:110px">45 ms</div>
<div class="bl" style="top:37px;left:4px">SR: 1 MS/s</div><div class="bl" style="top:37px;left:110px">1 µs/pt</div>
<div class="bl" style="top:56px;left:4px;letter-spacing:-0.3px">RL: 45 kpts</div><div class="bl" style="top:56px;left:124px">3%</div>
<svg class="abs" style="left:110px;top:58px" width="12" height="14"><path d="M1 1H10V10H7L5.5 13L4 10H1Z" fill="#111" stroke="#f7921e" stroke-width="1.4"/><text x="5.5" y="8.5" font-size="7" font-weight="bold" fill="#fff" text-anchor="middle" font-family="Liberation Sans">T</text></svg>
</div>
<div class="badge" style="left:1486px;top:1004px;width:158px;height:74px;background:#d2d2d2">
<div class="bh" style="background-color:#595959;color:#f0f0f0;font-size:16px;letter-spacing:0.35px">Trigger</div>
<div class="abs" style="left:4px;top:21px;width:30px;height:16px;border-radius:5px;background:#2626c0;border:1px solid #111;color:#fff;font-size:14px;line-height:14px;text-align:center">6</div>
<svg class="abs" style="left:43px;top:21px" width="20" height="16"><path d="M1 13H5L12 3.5H17" fill="none" stroke="#4a4ac0" stroke-width="1.3"/></svg>
<div class="bl" style="top:18px;left:70px">3 V</div>
</div>
<div class="badge" style="left:1651px;top:1004px;width:148px;height:74px;background:#d2d2d2">
<div class="bh" style="background-color:#595959;color:#f0f0f0;font-size:16px;letter-spacing:0.35px">Acquisition</div>
<div class="bl" style="top:18px;left:4px">Manual,</div><div class="bl" style="top:18px;left:84px;letter-spacing:-0.3px">Analyze</div>
<div class="bl" style="top:37px;left:4px;letter-spacing:-0.4px">High Res: 16 bits</div>
<div class="bl" style="top:56px;left:4px">Single: 0 /1</div>
</div>
<div class="abs" style="left:1811px;top:1000px;width:1px;height:78px;background:#4a4a4a"></div>
<div class="abs" style="left:1822px;top:999px;width:90px;height:36px;border-radius:6px;background:#f01c24;border:1px solid #5a4a4a;color:#fff;font-weight:bold;font-size:14px;text-align:center;line-height:31px">Preview</div>
<div class="abs" style="left:1822px;top:1040px;width:90px;height:39px;border-radius:5px;background:#d0d0d0;border:1px solid #5a5a5a;color:#1a1a1a;font-size:14.5px;text-align:center;line-height:17px;padding-top:2px">28 May 2025<br>5:46:28 PM</div>
</body></html>
